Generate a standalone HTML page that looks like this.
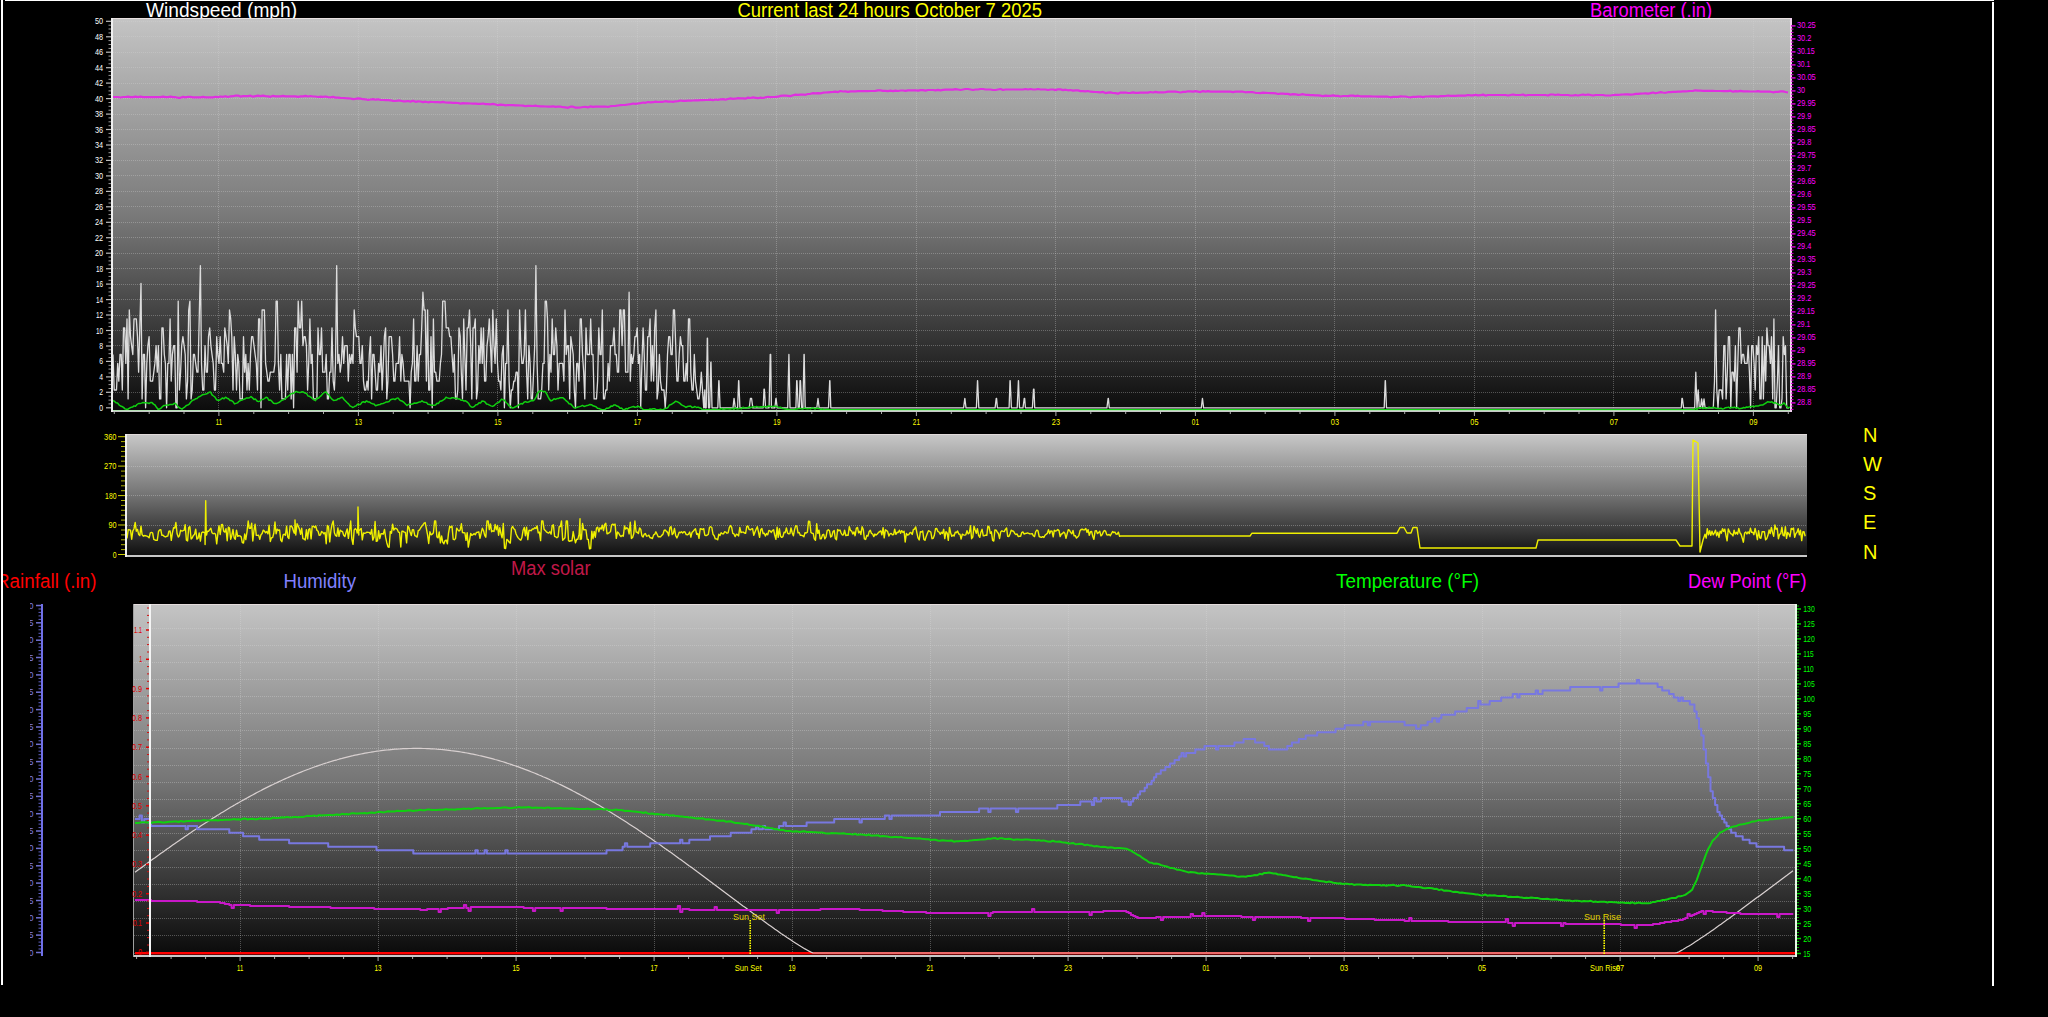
<!DOCTYPE html>
<html><head><meta charset="utf-8"><title>Weather graph</title>
<style>html,body{margin:0;padding:0;background:#000;overflow:hidden;width:2048px;height:1017px}svg{display:block}text{font-family:"Liberation Sans",sans-serif}</style>
</head><body><svg width="2048" height="1017" viewBox="0 0 2048 1017" font-family="Liberation Sans, sans-serif"><defs>
<linearGradient id="g1" x1="0" y1="0" x2="0" y2="1">
<stop offset="0" stop-color="#c4c4c4"/><stop offset="0.5" stop-color="#7a7a7a"/><stop offset="1" stop-color="#0c0c0c"/></linearGradient>
<linearGradient id="g2" x1="0" y1="0" x2="0" y2="1">
<stop offset="0" stop-color="#c8c8c8"/><stop offset="0.5" stop-color="#747474"/><stop offset="1" stop-color="#101010"/></linearGradient>
<linearGradient id="g3" x1="0" y1="0" x2="0" y2="1">
<stop offset="0" stop-color="#c4c4c4"/><stop offset="0.5" stop-color="#767676"/><stop offset="1" stop-color="#0a0a0a"/></linearGradient>
<clipPath id="cTop"><rect x="111" y="18" width="1680" height="392"/></clipPath>
<clipPath id="cDir"><rect x="125" y="434" width="1682" height="121"/></clipPath>
<clipPath id="cBot"><rect x="133" y="604" width="1663" height="351"/></clipPath>
<clipPath id="cHum"><rect x="30" y="590" width="20" height="380"/></clipPath>
<clipPath id="cRain"><rect x="3" y="560" width="200" height="40"/></clipPath>
</defs><rect x="1" y="0" width="2" height="985" fill="#fff"/>
<rect x="5" y="0" width="1989" height="1" fill="#fff"/>
<rect x="1992" y="2" width="2" height="984" fill="#fff"/>
<text x="146" y="16.8" fill="#ffffff" font-size="20" text-anchor="start" textLength="151" lengthAdjust="spacingAndGlyphs" >Windspeed (mph)</text>
<text x="737.5" y="16.8" fill="#ffff00" font-size="20" text-anchor="start" textLength="304.5" lengthAdjust="spacingAndGlyphs" >Current last 24 hours October 7 2025</text>
<text x="1590" y="16.8" fill="#ff00ff" font-size="20" text-anchor="start" textLength="122" lengthAdjust="spacingAndGlyphs" >Barometer (.in)</text>
<text x="96.5" y="588" fill="#ff0000" font-size="20" text-anchor="end" textLength="100.5" lengthAdjust="spacingAndGlyphs" clip-path="url(#cRain)">Rainfall (.in)</text>
<text x="283.5" y="587.7" fill="#8080ff" font-size="20" text-anchor="start" textLength="72.5" lengthAdjust="spacingAndGlyphs" >Humidity</text>
<text x="511" y="574.9" fill="#c01848" font-size="20" text-anchor="start" textLength="79.5" lengthAdjust="spacingAndGlyphs" >Max solar</text>
<text x="1336" y="588" fill="#00ff00" font-size="20" text-anchor="start" textLength="143" lengthAdjust="spacingAndGlyphs" >Temperature (°F)</text>
<text x="1688" y="587.5" fill="#ff00ff" font-size="20" text-anchor="start" textLength="118.5" lengthAdjust="spacingAndGlyphs" >Dew Point (°F)</text>
<rect x="111" y="18" width="1680" height="392" fill="url(#g1)"/>
<line x1="113" y1="392.5" x2="1790" y2="392.5" stroke="#d8d8d8" stroke-opacity="0.32" stroke-width="1" stroke-dasharray="1 1"/>
<line x1="113" y1="376.5" x2="1790" y2="376.5" stroke="#d8d8d8" stroke-opacity="0.32" stroke-width="1" stroke-dasharray="1 1"/>
<line x1="113" y1="361.5" x2="1790" y2="361.5" stroke="#d8d8d8" stroke-opacity="0.32" stroke-width="1" stroke-dasharray="1 1"/>
<line x1="113" y1="345.5" x2="1790" y2="345.5" stroke="#d8d8d8" stroke-opacity="0.32" stroke-width="1" stroke-dasharray="1 1"/>
<line x1="113" y1="330.5" x2="1790" y2="330.5" stroke="#d8d8d8" stroke-opacity="0.32" stroke-width="1" stroke-dasharray="1 1"/>
<line x1="113" y1="315.5" x2="1790" y2="315.5" stroke="#d8d8d8" stroke-opacity="0.32" stroke-width="1" stroke-dasharray="1 1"/>
<line x1="113" y1="299.5" x2="1790" y2="299.5" stroke="#d8d8d8" stroke-opacity="0.32" stroke-width="1" stroke-dasharray="1 1"/>
<line x1="113" y1="284.5" x2="1790" y2="284.5" stroke="#d8d8d8" stroke-opacity="0.32" stroke-width="1" stroke-dasharray="1 1"/>
<line x1="113" y1="268.5" x2="1790" y2="268.5" stroke="#d8d8d8" stroke-opacity="0.32" stroke-width="1" stroke-dasharray="1 1"/>
<line x1="113" y1="253.5" x2="1790" y2="253.5" stroke="#d8d8d8" stroke-opacity="0.32" stroke-width="1" stroke-dasharray="1 1"/>
<line x1="113" y1="237.5" x2="1790" y2="237.5" stroke="#d8d8d8" stroke-opacity="0.32" stroke-width="1" stroke-dasharray="1 1"/>
<line x1="113" y1="222.5" x2="1790" y2="222.5" stroke="#d8d8d8" stroke-opacity="0.32" stroke-width="1" stroke-dasharray="1 1"/>
<line x1="113" y1="206.5" x2="1790" y2="206.5" stroke="#d8d8d8" stroke-opacity="0.32" stroke-width="1" stroke-dasharray="1 1"/>
<line x1="113" y1="191.5" x2="1790" y2="191.5" stroke="#d8d8d8" stroke-opacity="0.32" stroke-width="1" stroke-dasharray="1 1"/>
<line x1="113" y1="175.5" x2="1790" y2="175.5" stroke="#d8d8d8" stroke-opacity="0.32" stroke-width="1" stroke-dasharray="1 1"/>
<line x1="113" y1="160.5" x2="1790" y2="160.5" stroke="#d8d8d8" stroke-opacity="0.32" stroke-width="1" stroke-dasharray="1 1"/>
<line x1="113" y1="144.5" x2="1790" y2="144.5" stroke="#d8d8d8" stroke-opacity="0.32" stroke-width="1" stroke-dasharray="1 1"/>
<line x1="113" y1="129.5" x2="1790" y2="129.5" stroke="#d8d8d8" stroke-opacity="0.32" stroke-width="1" stroke-dasharray="1 1"/>
<line x1="113" y1="114.5" x2="1790" y2="114.5" stroke="#d8d8d8" stroke-opacity="0.32" stroke-width="1" stroke-dasharray="1 1"/>
<line x1="113" y1="98.5" x2="1790" y2="98.5" stroke="#d8d8d8" stroke-opacity="0.32" stroke-width="1" stroke-dasharray="1 1"/>
<line x1="113" y1="83.5" x2="1790" y2="83.5" stroke="#d8d8d8" stroke-opacity="0.32" stroke-width="1" stroke-dasharray="1 1"/>
<line x1="113" y1="67.5" x2="1790" y2="67.5" stroke="#d8d8d8" stroke-opacity="0.32" stroke-width="1" stroke-dasharray="1 1"/>
<line x1="113" y1="52.5" x2="1790" y2="52.5" stroke="#d8d8d8" stroke-opacity="0.32" stroke-width="1" stroke-dasharray="1 1"/>
<line x1="113" y1="36.5" x2="1790" y2="36.5" stroke="#d8d8d8" stroke-opacity="0.32" stroke-width="1" stroke-dasharray="1 1"/>
<line x1="113" y1="21.5" x2="1790" y2="21.5" stroke="#d8d8d8" stroke-opacity="0.32" stroke-width="1" stroke-dasharray="1 1"/>
<line x1="218.5" y1="19" x2="218.5" y2="410" stroke="#d8d8d8" stroke-opacity="0.32" stroke-width="1" stroke-dasharray="1 1"/>
<text x="218.9" y="424.5" fill="#ffff00" font-size="8.3" text-anchor="middle" textLength="6.1" lengthAdjust="spacingAndGlyphs" >11</text>
<line x1="358.5" y1="19" x2="358.5" y2="410" stroke="#d8d8d8" stroke-opacity="0.32" stroke-width="1" stroke-dasharray="1 1"/>
<text x="358.4" y="424.5" fill="#ffff00" font-size="8.3" text-anchor="middle" textLength="7.1" lengthAdjust="spacingAndGlyphs" >13</text>
<line x1="497.5" y1="19" x2="497.5" y2="410" stroke="#d8d8d8" stroke-opacity="0.32" stroke-width="1" stroke-dasharray="1 1"/>
<text x="497.9" y="424.5" fill="#ffff00" font-size="8.3" text-anchor="middle" textLength="7.1" lengthAdjust="spacingAndGlyphs" >15</text>
<line x1="637.5" y1="19" x2="637.5" y2="410" stroke="#d8d8d8" stroke-opacity="0.32" stroke-width="1" stroke-dasharray="1 1"/>
<text x="637.4" y="424.5" fill="#ffff00" font-size="8.3" text-anchor="middle" textLength="7.1" lengthAdjust="spacingAndGlyphs" >17</text>
<line x1="776.5" y1="19" x2="776.5" y2="410" stroke="#d8d8d8" stroke-opacity="0.32" stroke-width="1" stroke-dasharray="1 1"/>
<text x="776.9" y="424.5" fill="#ffff00" font-size="8.3" text-anchor="middle" textLength="7.1" lengthAdjust="spacingAndGlyphs" >19</text>
<line x1="916.5" y1="19" x2="916.5" y2="410" stroke="#d8d8d8" stroke-opacity="0.32" stroke-width="1" stroke-dasharray="1 1"/>
<text x="916.4" y="424.5" fill="#ffff00" font-size="8.3" text-anchor="middle" textLength="7.1" lengthAdjust="spacingAndGlyphs" >21</text>
<line x1="1055.5" y1="19" x2="1055.5" y2="410" stroke="#d8d8d8" stroke-opacity="0.32" stroke-width="1" stroke-dasharray="1 1"/>
<text x="1055.9" y="424.5" fill="#ffff00" font-size="8.3" text-anchor="middle" textLength="8.1" lengthAdjust="spacingAndGlyphs" >23</text>
<line x1="1195.5" y1="19" x2="1195.5" y2="410" stroke="#d8d8d8" stroke-opacity="0.32" stroke-width="1" stroke-dasharray="1 1"/>
<text x="1195.4" y="424.5" fill="#ffff00" font-size="8.3" text-anchor="middle" textLength="7.1" lengthAdjust="spacingAndGlyphs" >01</text>
<line x1="1334.5" y1="19" x2="1334.5" y2="410" stroke="#d8d8d8" stroke-opacity="0.32" stroke-width="1" stroke-dasharray="1 1"/>
<text x="1334.9" y="424.5" fill="#ffff00" font-size="8.3" text-anchor="middle" textLength="8.1" lengthAdjust="spacingAndGlyphs" >03</text>
<line x1="1474.5" y1="19" x2="1474.5" y2="410" stroke="#d8d8d8" stroke-opacity="0.32" stroke-width="1" stroke-dasharray="1 1"/>
<text x="1474.4" y="424.5" fill="#ffff00" font-size="8.3" text-anchor="middle" textLength="8.1" lengthAdjust="spacingAndGlyphs" >05</text>
<line x1="1613.5" y1="19" x2="1613.5" y2="410" stroke="#d8d8d8" stroke-opacity="0.32" stroke-width="1" stroke-dasharray="1 1"/>
<text x="1613.9" y="424.5" fill="#ffff00" font-size="8.3" text-anchor="middle" textLength="8.1" lengthAdjust="spacingAndGlyphs" >07</text>
<line x1="1753.5" y1="19" x2="1753.5" y2="410" stroke="#d8d8d8" stroke-opacity="0.32" stroke-width="1" stroke-dasharray="1 1"/>
<text x="1753.4" y="424.5" fill="#ffff00" font-size="8.3" text-anchor="middle" textLength="8.1" lengthAdjust="spacingAndGlyphs" >09</text>
<line x1="114.3" y1="412" x2="114.3" y2="414" stroke="#aaaaaa" stroke-width="1"/>
<line x1="149.2" y1="412" x2="149.2" y2="414" stroke="#aaaaaa" stroke-width="1"/>
<line x1="184" y1="412" x2="184" y2="414" stroke="#aaaaaa" stroke-width="1"/>
<line x1="218.9" y1="412" x2="218.9" y2="416" stroke="#aaaaaa" stroke-width="1"/>
<line x1="253.8" y1="412" x2="253.8" y2="414" stroke="#aaaaaa" stroke-width="1"/>
<line x1="288.6" y1="412" x2="288.6" y2="414" stroke="#aaaaaa" stroke-width="1"/>
<line x1="323.5" y1="412" x2="323.5" y2="414" stroke="#aaaaaa" stroke-width="1"/>
<line x1="358.4" y1="412" x2="358.4" y2="416" stroke="#aaaaaa" stroke-width="1"/>
<line x1="393.3" y1="412" x2="393.3" y2="414" stroke="#aaaaaa" stroke-width="1"/>
<line x1="428.1" y1="412" x2="428.1" y2="414" stroke="#aaaaaa" stroke-width="1"/>
<line x1="463" y1="412" x2="463" y2="414" stroke="#aaaaaa" stroke-width="1"/>
<line x1="497.9" y1="412" x2="497.9" y2="416" stroke="#aaaaaa" stroke-width="1"/>
<line x1="532.8" y1="412" x2="532.8" y2="414" stroke="#aaaaaa" stroke-width="1"/>
<line x1="567.6" y1="412" x2="567.6" y2="414" stroke="#aaaaaa" stroke-width="1"/>
<line x1="602.5" y1="412" x2="602.5" y2="414" stroke="#aaaaaa" stroke-width="1"/>
<line x1="637.4" y1="412" x2="637.4" y2="416" stroke="#aaaaaa" stroke-width="1"/>
<line x1="672.3" y1="412" x2="672.3" y2="414" stroke="#aaaaaa" stroke-width="1"/>
<line x1="707.1" y1="412" x2="707.1" y2="414" stroke="#aaaaaa" stroke-width="1"/>
<line x1="742" y1="412" x2="742" y2="414" stroke="#aaaaaa" stroke-width="1"/>
<line x1="776.9" y1="412" x2="776.9" y2="416" stroke="#aaaaaa" stroke-width="1"/>
<line x1="811.8" y1="412" x2="811.8" y2="414" stroke="#aaaaaa" stroke-width="1"/>
<line x1="846.6" y1="412" x2="846.6" y2="414" stroke="#aaaaaa" stroke-width="1"/>
<line x1="881.5" y1="412" x2="881.5" y2="414" stroke="#aaaaaa" stroke-width="1"/>
<line x1="916.4" y1="412" x2="916.4" y2="416" stroke="#aaaaaa" stroke-width="1"/>
<line x1="951.3" y1="412" x2="951.3" y2="414" stroke="#aaaaaa" stroke-width="1"/>
<line x1="986.1" y1="412" x2="986.1" y2="414" stroke="#aaaaaa" stroke-width="1"/>
<line x1="1021" y1="412" x2="1021" y2="414" stroke="#aaaaaa" stroke-width="1"/>
<line x1="1055.9" y1="412" x2="1055.9" y2="416" stroke="#aaaaaa" stroke-width="1"/>
<line x1="1090.8" y1="412" x2="1090.8" y2="414" stroke="#aaaaaa" stroke-width="1"/>
<line x1="1125.7" y1="412" x2="1125.7" y2="414" stroke="#aaaaaa" stroke-width="1"/>
<line x1="1160.5" y1="412" x2="1160.5" y2="414" stroke="#aaaaaa" stroke-width="1"/>
<line x1="1195.4" y1="412" x2="1195.4" y2="416" stroke="#aaaaaa" stroke-width="1"/>
<line x1="1230.3" y1="412" x2="1230.3" y2="414" stroke="#aaaaaa" stroke-width="1"/>
<line x1="1265.2" y1="412" x2="1265.2" y2="414" stroke="#aaaaaa" stroke-width="1"/>
<line x1="1300" y1="412" x2="1300" y2="414" stroke="#aaaaaa" stroke-width="1"/>
<line x1="1334.9" y1="412" x2="1334.9" y2="416" stroke="#aaaaaa" stroke-width="1"/>
<line x1="1369.8" y1="412" x2="1369.8" y2="414" stroke="#aaaaaa" stroke-width="1"/>
<line x1="1404.7" y1="412" x2="1404.7" y2="414" stroke="#aaaaaa" stroke-width="1"/>
<line x1="1439.5" y1="412" x2="1439.5" y2="414" stroke="#aaaaaa" stroke-width="1"/>
<line x1="1474.4" y1="412" x2="1474.4" y2="416" stroke="#aaaaaa" stroke-width="1"/>
<line x1="1509.3" y1="412" x2="1509.3" y2="414" stroke="#aaaaaa" stroke-width="1"/>
<line x1="1544.2" y1="412" x2="1544.2" y2="414" stroke="#aaaaaa" stroke-width="1"/>
<line x1="1579" y1="412" x2="1579" y2="414" stroke="#aaaaaa" stroke-width="1"/>
<line x1="1613.9" y1="412" x2="1613.9" y2="416" stroke="#aaaaaa" stroke-width="1"/>
<line x1="1648.8" y1="412" x2="1648.8" y2="414" stroke="#aaaaaa" stroke-width="1"/>
<line x1="1683.7" y1="412" x2="1683.7" y2="414" stroke="#aaaaaa" stroke-width="1"/>
<line x1="1718.5" y1="412" x2="1718.5" y2="414" stroke="#aaaaaa" stroke-width="1"/>
<line x1="1753.4" y1="412" x2="1753.4" y2="416" stroke="#aaaaaa" stroke-width="1"/>
<line x1="1788.3" y1="412" x2="1788.3" y2="414" stroke="#aaaaaa" stroke-width="1"/>
<rect x="111" y="18" width="1680" height="1" fill="#e8e0e0"/>
<path d="M113 97 L115.5 97 L118 97 L120.5 97.5 L123 97 L125.5 97 L128 96.6 L130.5 97.1 L133 97.1 L135.5 96.6 L138 97.1 L140.5 96.6 L143 97.1 L145.5 97.1 L148 97.1 L150.5 97.1 L153 97.2 L155.5 97.2 L158 97.2 L160.5 97.2 L163 96.7 L165.5 97.2 L168 97.2 L170.5 96.7 L173 97.2 L175.5 97.2 L178 97.8 L180.5 97.8 L183 96.8 L185.5 97.3 L188 96.8 L190.5 96.8 L193 97.3 L195.5 97.3 L198 97.3 L200.5 97.3 L203 96.9 L205.5 97.4 L208 97.4 L210.5 97.4 L213 97.4 L215.5 96.8 L218 97.1 L220.5 96.5 L223 96.8 L225.5 96.2 L228 97 L230.5 96.3 L233 96.2 L235.5 95.6 L238 95.6 L240.5 96.6 L243 96.1 L245.5 96.2 L248 96.2 L250.5 95.7 L253 96.7 L255.5 96.2 L258 95.7 L260.5 96.2 L263 95.7 L265.5 96.2 L268 96.3 L270.5 96.8 L273 95.8 L275.5 96.3 L278 96.3 L280.5 96.3 L283 95.8 L285.5 96.3 L288 96.4 L290.5 96.4 L293 96.4 L295.5 96.4 L298 96.9 L300.5 96.4 L303 96.4 L305.5 95.9 L308 96.5 L310.5 96 L313 96.5 L315.5 96.5 L318 97 L320.5 96.7 L323 96.8 L325.5 96.5 L328 97.1 L330.5 97.3 L333 96.9 L335.5 97.6 L338 97.7 L340.5 97.9 L343 98 L345.5 98.2 L348 98.3 L350.5 98.5 L353 99.1 L355.5 98.8 L358 98.4 L360.5 98.6 L363 99.2 L365.5 99.3 L368 99.9 L370.5 99.5 L373 99.1 L375.5 99.7 L378 99.3 L380.5 99.9 L383 100 L385.5 100.1 L388 100.2 L390.5 100.3 L393 100.9 L395.5 101 L398 100.6 L400.5 100.7 L403 101.3 L405.5 101.4 L408 101 L410.5 101.6 L413 100.7 L415.5 101.8 L418 101.4 L420.5 101.5 L423 102.1 L425.5 101.7 L428 102.3 L430.5 101.9 L433 102 L435.5 102.1 L438 102.2 L440.5 102.3 L443 101.9 L445.5 102.5 L448 102.6 L450.5 102.7 L453 102.8 L455.5 102.9 L458 103 L460.5 103.6 L463 103.2 L465.5 103.3 L468 103.4 L470.5 103.5 L473 103.6 L475.5 103.7 L478 103.8 L480.5 103.9 L483 103.5 L485.5 104.1 L488 104.2 L490.5 104.3 L493 103.9 L495.5 104.5 L498 105.1 L500.5 104.7 L503 104.8 L505.5 105.4 L508 105 L510.5 105.1 L513 105.2 L515.5 105.3 L518 105.4 L520.5 105.5 L523 105.6 L525.5 106.2 L528 105.8 L530.5 105.9 L533 106 L535.5 105.6 L538 106.2 L540.5 106.3 L543 106.4 L545.5 106.5 L548 106.6 L550.5 106.7 L553 106.3 L555.5 106.9 L558 106.5 L560.5 106.6 L563 107.2 L565.5 107.3 L568 107.8 L570.5 106.7 L573 106.7 L575.5 107.6 L578 107.6 L580.5 107.5 L583 107 L585.5 106.9 L588 107.4 L590.5 106.3 L593 106.8 L595.5 106.7 L598 106.7 L600.5 106.6 L603 106.6 L605.5 106.5 L608 107 L610.5 106.2 L613 106 L615.5 105.8 L618 105.5 L620.5 105.2 L623 105 L625.5 104.8 L628 104.5 L630.5 104.2 L633 103.5 L635.5 103.8 L638 103.5 L640.5 103.2 L643 102.5 L645.5 102.8 L648 102 L650.5 102.3 L653 102.2 L655.5 101.6 L658 102 L660.5 101.9 L663 101.8 L665.5 101.2 L668 101.6 L670.5 101.5 L673 101.9 L675.5 101.3 L678 101.1 L680.5 100.5 L683 100.9 L685.5 100.8 L688 100.7 L690.5 100.6 L693 100.5 L695.5 100.4 L698 100.3 L700.5 100.2 L703 100.1 L705.5 100 L708 99.9 L710.5 99.7 L713 100.1 L715.5 99.5 L718 99.9 L720.5 99.3 L723 99.2 L725.5 99.6 L728 99 L730.5 98.4 L733 98.8 L735.5 98.7 L738 98.1 L740.5 98.4 L743 98.3 L745.5 98.7 L748 97.6 L750.5 98 L753 97.4 L755.5 97.8 L758 98.2 L760.5 97.6 L763 98 L765.5 97.4 L768 96.8 L770.5 97.2 L773 97 L775.5 96.9 L778 96.7 L780.5 95.9 L783 95.7 L785.5 95.5 L788 95.8 L790.5 96.1 L793 95.3 L795.5 94.6 L798 94.9 L800.5 94.7 L803 94.5 L805.5 94.8 L808 94 L810.5 93.8 L813 93.1 L815.5 93.4 L818 93.2 L820.5 93.4 L823 92.7 L825.5 92.5 L828 92.3 L830.5 92.1 L833 91.9 L835.5 91.6 L838 92.1 L840.5 91 L843 91.5 L845.5 91.4 L848 91.9 L850.5 91.4 L853 91.3 L855.5 91.3 L858 91.2 L860.5 91.2 L863 91.1 L865.5 91.1 L868 91.1 L870.5 91 L873 91 L875.5 90.9 L878 90.4 L880.5 90.3 L883 90.8 L885.5 90.8 L888 91.2 L890.5 90.7 L893 91.1 L895.5 90.6 L898 91 L900.5 90.5 L903 90.5 L905.5 90.9 L908 90.4 L910.5 90.3 L913 90.3 L915.5 90.3 L918 90.7 L920.5 90.2 L923 90.1 L925.5 90.6 L928 90 L930.5 90 L933 90 L935.5 90.4 L938 89.9 L940.5 90.3 L943 89.8 L945.5 89.7 L948 89.7 L950.5 89.7 L953 89.6 L955.5 89.1 L958 89.5 L960.5 90 L963 89.5 L965.5 89 L968 89 L970.5 89.5 L973 90 L975.5 89.5 L978 89.5 L980.5 89 L983 89 L985.5 89.5 L988 89.5 L990.5 89.5 L993 90 L995.5 90 L998 89.5 L1000.5 89 L1003 90 L1005.5 89.5 L1008 89.5 L1010.5 89.5 L1013 89.5 L1015.5 89.5 L1018 89.5 L1020.5 89.5 L1023 89.5 L1025.5 89 L1028 89.5 L1030.5 89 L1033 89.5 L1035.5 89.5 L1038 89 L1040.5 89.5 L1043 89.5 L1045.5 89.5 L1048 90 L1050.5 89.5 L1053 89.5 L1055.5 90.1 L1058 89.3 L1060.5 89.4 L1063 90.1 L1065.5 89.7 L1068 90.3 L1070.5 90 L1073 90.6 L1075.5 90.3 L1078 90.4 L1080.5 91.1 L1083 91.2 L1085.5 91.4 L1088 91 L1090.5 91.7 L1093 91.8 L1095.5 92 L1098 92.1 L1100.5 92.3 L1103 91.9 L1105.5 93.1 L1108 92.7 L1110.5 92.4 L1113 93 L1115.5 93.2 L1118 93.7 L1120.5 92.6 L1123 92.6 L1125.5 92.5 L1128 93 L1130.5 92.9 L1133 92.4 L1135.5 92.8 L1138 92.8 L1140.5 92.7 L1143 92.7 L1145.5 92.6 L1148 92.6 L1150.5 92 L1153 92.5 L1155.5 91.9 L1158 92.4 L1160.5 92.3 L1163 92.3 L1165.5 92.2 L1168 91.7 L1170.5 91.6 L1173 91.6 L1175.5 91.6 L1178 92 L1180.5 92.5 L1183 91.9 L1185.5 91.9 L1188 91.3 L1190.5 91.3 L1193 91.7 L1195.5 91.2 L1198 91.6 L1200.5 92.1 L1203 91.1 L1205.5 91.6 L1208 91.1 L1210.5 91.6 L1213 91.6 L1215.5 91.6 L1218 91.6 L1220.5 91.6 L1223 91.6 L1225.5 91.6 L1228 91.6 L1230.5 91.6 L1233 92.1 L1235.5 91.6 L1238 91.6 L1240.5 91.6 L1243 91.7 L1245.5 92.3 L1248 92 L1250.5 92.1 L1253 92.2 L1255.5 92.8 L1258 93 L1260.5 93.1 L1263 92.7 L1265.5 92.8 L1268 93 L1270.5 93.1 L1273 93.2 L1275.5 93.3 L1278 94 L1280.5 93.6 L1283 93.7 L1285.5 93.8 L1288 93.9 L1290.5 94.6 L1293 94.2 L1295.5 94.3 L1298 94.9 L1300.5 94.6 L1303 94.2 L1305.5 94.8 L1308 94.9 L1310.5 95.1 L1313 95.2 L1315.5 95.3 L1318 95.4 L1320.5 95.6 L1323 96.2 L1325.5 95.7 L1328 95.8 L1330.5 95.8 L1333 95.4 L1335.5 95.9 L1338 95.9 L1340.5 96.5 L1343 96 L1345.5 96 L1348 96.1 L1350.5 95.6 L1353 95.7 L1355.5 96.2 L1358 95.7 L1360.5 96.3 L1363 96.3 L1365.5 96.4 L1368 96.4 L1370.5 96.4 L1373 96.5 L1375.5 96.5 L1378 96.6 L1380.5 96.6 L1383 96.6 L1385.5 96.7 L1388 96.7 L1390.5 97.3 L1393 96.8 L1395.5 96.8 L1398 96.9 L1400.5 96.4 L1403 96.5 L1405.5 96.5 L1408 97 L1410.5 97.4 L1413 96.8 L1415.5 96.8 L1418 96.7 L1420.5 96.7 L1423 97.1 L1425.5 96.5 L1428 96.5 L1430.5 96.4 L1433 96.3 L1435.5 96.3 L1438 96.7 L1440.5 96.2 L1443 96.1 L1445.5 96 L1448 95.5 L1450.5 95.9 L1453 95.9 L1455.5 95.8 L1458 95.7 L1460.5 95.7 L1463 95.6 L1465.5 95.6 L1468 95 L1470.5 95.4 L1473 95.4 L1475.5 94.8 L1478 95.3 L1480.5 95.2 L1483 94.6 L1485.5 95.6 L1488 95 L1490.5 95 L1493 95 L1495.5 95 L1498 95 L1500.5 95 L1503 95 L1505.5 95 L1508 95.5 L1510.5 95 L1513 94.5 L1515.5 95 L1518 95 L1520.5 95 L1523 94.5 L1525.5 95.5 L1528 95 L1530.5 95 L1533 95 L1535.5 95 L1538 95 L1540.5 95 L1543 95 L1545.5 95 L1548 95.5 L1550.5 94.5 L1553 94.5 L1555.5 95 L1558 94.5 L1560.5 95 L1563 95 L1565.5 95 L1568 95 L1570.5 95.5 L1573 95.5 L1575.5 95 L1578 95.5 L1580.5 95 L1583 94.5 L1585.5 95 L1588 94.5 L1590.5 95 L1593 95.5 L1595.5 95 L1598 95 L1600.5 95 L1603 95 L1605.5 95.5 L1608 95.5 L1610.5 95.5 L1613 95 L1615.5 94.9 L1618 94.8 L1620.5 94.7 L1623 94.5 L1625.5 94.4 L1628 94.3 L1630.5 94.6 L1633 94.5 L1635.5 93.9 L1638 93.8 L1640.5 93.6 L1643 93.5 L1645.5 93.4 L1648 93.7 L1650.5 93.1 L1653 92.5 L1655.5 93.3 L1658 92.7 L1660.5 92.1 L1663 92.5 L1665.5 92.8 L1668 92.2 L1670.5 92.1 L1673 91.9 L1675.5 91.8 L1678 91.7 L1680.5 91.6 L1683 91.4 L1685.5 91.3 L1688 91.2 L1690.5 91 L1693 90.9 L1695.5 90.3 L1698 90.7 L1700.5 90.7 L1703 90.8 L1705.5 90.8 L1708 90.9 L1710.5 90.9 L1713 90.9 L1715.5 91 L1718 91 L1720.5 91 L1723 91.1 L1725.5 91.1 L1728 91.1 L1730.5 90.7 L1733 91.7 L1735.5 91.2 L1738 91.3 L1740.5 90.8 L1743 91.3 L1745.5 91.4 L1748 91.4 L1750.5 91.5 L1753 91.5 L1755.5 91.5 L1758 91.1 L1760.5 91.6 L1763 91.6 L1765.5 91.7 L1768 91.7 L1770.5 91.7 L1773 92.3 L1775.5 91.8 L1778 91.8 L1780.5 91.4 L1783 91.4 L1785.5 92 L1788 92.5" fill="none" stroke="#e030e0" stroke-width="2.2" stroke-linejoin="round" clip-path="url(#cTop)"/>
<path d="M113 354.5 L114.2 390 L115.3 390 L116.5 390 L117.7 363.4 L118.8 381.1 L120 354.5 L121.2 354.5 L122.3 390 L123.5 327.8 L124.7 327.8 L125.8 363.4 L127 318.9 L128.1 398.9 L129.3 310 L130.5 336.7 L131.6 345.6 L132.8 354.5 L134 318.9 L135.1 318.9 L136.3 318.9 L137.5 336.7 L138.6 372.2 L139.8 327.8 L141 283.3 L142.1 398.9 L143.3 354.5 L144.5 354.5 L145.6 407.8 L146.8 363.4 L147.9 345.6 L149.1 336.7 L150.3 381.1 L151.4 381.1 L152.6 381.1 L153.8 372.2 L154.9 363.4 L156.1 345.6 L157.3 372.2 L158.4 345.6 L159.6 398.9 L160.8 398.9 L161.9 327.8 L163.1 327.8 L164.3 354.5 L165.4 363.4 L166.6 407.8 L167.8 363.4 L168.9 363.4 L170.1 318.9 L171.2 381.1 L172.4 354.5 L173.6 345.6 L174.7 345.6 L175.9 407.8 L177.1 407.8 L178.2 301.1 L179.4 390 L180.6 372.2 L181.7 345.6 L182.9 336.7 L184.1 345.6 L185.2 354.5 L186.4 398.9 L187.6 381.1 L188.7 310 L189.9 301.1 L191.1 398.9 L192.2 390 L193.4 354.5 L194.5 354.5 L195.7 363.4 L196.9 372.2 L198 372.2 L199.2 318.9 L200.4 265.6 L201.5 363.4 L202.7 390 L203.9 390 L205 345.6 L206.2 372.2 L207.4 372.2 L208.5 336.7 L209.7 327.8 L210.9 345.6 L212 354.5 L213.2 363.4 L214.4 390 L215.5 390 L216.7 336.7 L217.8 354.5 L219 363.4 L220.2 336.7 L221.3 363.4 L222.5 363.4 L223.7 372.2 L224.8 327.8 L226 336.7 L227.2 345.6 L228.3 363.4 L229.5 310 L230.7 318.9 L231.8 336.7 L233 390 L234.2 336.7 L235.3 354.5 L236.5 390 L237.7 354.5 L238.8 363.4 L240 398.9 L241.1 398.9 L242.3 398.9 L243.5 336.7 L244.6 372.2 L245.8 354.5 L247 390 L248.1 363.4 L249.3 390 L250.5 354.5 L251.6 336.7 L252.8 336.7 L254 345.6 L255.1 354.5 L256.3 363.4 L257.5 390 L258.6 318.9 L259.8 318.9 L261 407.8 L262.1 310 L263.3 310 L264.4 310 L265.6 363.4 L266.8 372.2 L267.9 381.1 L269.1 381.1 L270.3 372.2 L271.4 372.2 L272.6 372.2 L273.8 372.2 L274.9 363.4 L276.1 301.1 L277.3 301.1 L278.4 363.4 L279.6 390 L280.8 354.5 L281.9 398.9 L283.1 398.9 L284.3 398.9 L285.4 398.9 L286.6 354.5 L287.7 390 L288.9 354.5 L290.1 354.5 L291.2 398.9 L292.4 354.5 L293.6 407.8 L294.7 327.8 L295.9 327.8 L297.1 372.2 L298.2 301.1 L299.4 327.8 L300.6 327.8 L301.7 301.1 L302.9 345.6 L304.1 336.7 L305.2 336.7 L306.4 345.6 L307.6 390 L308.7 363.4 L309.9 318.9 L311.1 363.4 L312.2 354.5 L313.4 398.9 L314.5 398.9 L315.7 398.9 L316.9 398.9 L318 327.8 L319.2 354.5 L320.4 354.5 L321.5 327.8 L322.7 372.2 L323.9 372.2 L325 372.2 L326.2 354.5 L327.4 398.9 L328.5 398.9 L329.7 372.2 L330.9 372.2 L332 327.8 L333.2 381.1 L334.4 390 L335.5 363.4 L336.7 265.6 L337.8 363.4 L339 354.5 L340.2 372.2 L341.3 363.4 L342.5 336.7 L343.7 363.4 L344.8 345.6 L346 345.6 L347.2 345.6 L348.3 381.1 L349.5 354.5 L350.7 363.4 L351.8 354.5 L353 363.4 L354.2 310 L355.3 327.8 L356.5 336.7 L357.7 336.7 L358.8 336.7 L360 363.4 L361.1 363.4 L362.3 345.6 L363.5 381.1 L364.6 390 L365.8 390 L367 381.1 L368.1 390 L369.3 354.5 L370.5 336.7 L371.6 398.9 L372.8 354.5 L374 354.5 L375.1 372.2 L376.3 390 L377.5 390 L378.6 363.4 L379.8 372.2 L381 345.6 L382.1 390 L383.3 363.4 L384.4 336.7 L385.6 327.8 L386.8 398.9 L387.9 381.1 L389.1 336.7 L390.3 336.7 L391.4 336.7 L392.6 354.5 L393.8 381.1 L394.9 381.1 L396.1 363.4 L397.3 363.4 L398.4 363.4 L399.6 336.7 L400.8 381.1 L401.9 354.5 L403.1 363.4 L404.3 381.1 L405.4 381.1 L406.6 381.1 L407.7 381.1 L408.9 381.1 L410.1 407.8 L411.2 372.2 L412.4 363.4 L413.6 318.9 L414.7 381.1 L415.9 381.1 L417.1 345.6 L418.2 381.1 L419.4 354.5 L420.6 354.5 L421.7 327.8 L422.9 292.2 L424.1 310 L425.2 310 L426.4 381.1 L427.6 310 L428.7 390 L429.9 390 L431 336.7 L432.2 407.8 L433.4 318.9 L434.5 372.2 L435.7 372.2 L436.9 381.1 L438 381.1 L439.2 381.1 L440.4 363.4 L441.5 354.5 L442.7 301.1 L443.9 301.1 L445 301.1 L446.2 327.8 L447.4 327.8 L448.5 327.8 L449.7 336.7 L450.9 336.7 L452 354.5 L453.2 372.2 L454.3 354.5 L455.5 398.9 L456.7 398.9 L457.8 390 L459 327.8 L460.2 336.7 L461.3 372.2 L462.5 398.9 L463.7 318.9 L464.8 354.5 L466 390 L467.2 327.8 L468.3 327.8 L469.5 310 L470.7 345.6 L471.8 398.9 L473 327.8 L474.2 327.8 L475.3 318.9 L476.5 398.9 L477.6 390 L478.8 345.6 L480 363.4 L481.1 327.8 L482.3 363.4 L483.5 327.8 L484.6 381.1 L485.8 381.1 L487 345.6 L488.1 336.7 L489.3 318.9 L490.5 345.6 L491.6 372.2 L492.8 310 L494 345.6 L495.1 363.4 L496.3 318.9 L497.5 363.4 L498.6 381.1 L499.8 381.1 L500.9 390 L502.1 354.5 L503.3 345.6 L504.4 407.8 L505.6 363.4 L506.8 363.4 L507.9 310 L509.1 381.1 L510.3 407.8 L511.4 390 L512.6 390 L513.8 381.1 L514.9 381.1 L516.1 372.2 L517.3 372.2 L518.4 407.8 L519.6 310 L520.8 345.6 L521.9 363.4 L523.1 363.4 L524.2 354.5 L525.4 310 L526.6 372.2 L527.7 398.9 L528.9 345.6 L530.1 363.4 L531.2 398.9 L532.4 398.9 L533.6 372.2 L534.7 345.6 L535.9 265.6 L537.1 363.4 L538.2 398.9 L539.4 398.9 L540.6 398.9 L541.7 390 L542.9 363.4 L544.1 363.4 L545.2 301.1 L546.4 301.1 L547.5 318.9 L548.7 390 L549.9 354.5 L551 372.2 L552.2 318.9 L553.4 354.5 L554.5 354.5 L555.7 327.8 L556.9 345.6 L558 390 L559.2 363.4 L560.4 363.4 L561.5 363.4 L562.7 363.4 L563.9 381.1 L565 310 L566.2 354.5 L567.4 345.6 L568.5 345.6 L569.7 398.9 L570.8 336.7 L572 345.6 L573.2 354.5 L574.3 390 L575.5 407.8 L576.7 363.4 L577.8 363.4 L579 381.1 L580.2 318.9 L581.3 318.9 L582.5 354.5 L583.7 372.2 L584.8 398.9 L586 327.8 L587.2 354.5 L588.3 354.5 L589.5 354.5 L590.7 318.9 L591.8 354.5 L593 354.5 L594.1 398.9 L595.3 398.9 L596.5 398.9 L597.6 381.1 L598.8 327.8 L600 354.5 L601.1 354.5 L602.3 310 L603.5 398.9 L604.6 398.9 L605.8 390 L607 390 L608.1 363.4 L609.3 381.1 L610.5 345.6 L611.6 345.6 L612.8 345.6 L614 327.8 L615.1 354.5 L616.3 354.5 L617.4 372.2 L618.6 372.2 L619.8 310 L620.9 310 L622.1 345.6 L623.3 310 L624.4 310 L625.6 372.2 L626.8 372.2 L627.9 372.2 L629.1 292.2 L630.3 381.1 L631.4 354.5 L632.6 363.4 L633.8 354.5 L634.9 336.7 L636.1 336.7 L637.2 327.8 L638.4 363.4 L639.6 354.5 L640.7 407.8 L641.9 363.4 L643.1 327.8 L644.2 354.5 L645.4 390 L646.6 390 L647.7 336.7 L648.9 336.7 L650.1 318.9 L651.2 381.1 L652.4 345.6 L653.6 381.1 L654.7 327.8 L655.9 310 L657.1 398.9 L658.2 390 L659.4 354.5 L660.5 381.1 L661.7 390 L662.9 390 L664 390 L665.2 407.8 L666.4 390 L667.5 354.5 L668.7 336.7 L669.9 336.7 L671 354.5 L672.2 354.5 L673.4 310 L674.5 310 L675.7 345.6 L676.9 381.1 L678 381.1 L679.2 354.5 L680.4 336.7 L681.5 345.6 L682.7 345.6 L683.8 381.1 L685 381.1 L686.2 363.4 L687.3 381.1 L688.5 318.9 L689.7 318.9 L690.8 372.2 L692 390 L693.2 390 L694.3 354.5 L695.5 381.1 L696.7 390 L697.8 398.9 L699 398.9 L700.2 390 L701.3 372.2 L702.5 390 L703.7 407.8 L704.8 390 L705 407.8 L706.2 407.8 L707.3 338.2 L707.5 338.2 L708.5 407.8 L709.7 407.8 L710.8 362.2 L711 362.2 L712 407.8 L713.2 407.8 L714.3 407.8 L715.5 407.8 L716.6 407.8 L717.8 407.8 L718.8 380.7 L719 380.7 L720.1 407.8 L721.3 407.8 L722.5 407.8 L723.6 407.8 L724.8 407.8 L726 407.8 L727.1 407.8 L728.3 407.8 L729.5 407.8 L730.6 407.8 L731.8 407.8 L733 407.8 L734 398.5 L734.1 398.5 L735.3 407.8 L736.5 407.8 L737.6 407.8 L738.6 380.7 L738.8 380.7 L739.9 407.8 L741.1 407.8 L742.3 407.8 L743.4 407.8 L744.6 407.8 L745.8 407.8 L746.9 407.8 L748.1 407.8 L749.3 407.8 L750.4 398.5 L751 398.5 L751.6 398.5 L752.8 407.8 L753.9 407.8 L755.1 407.8 L756.3 407.8 L757.4 407.8 L758.6 407.8 L759.8 407.8 L760.9 407.8 L762.1 407.8 L763.2 407.8 L764 389.2 L764.4 389.2 L765.6 407.8 L766.7 407.8 L767.9 407.8 L769.1 407.8 L770.2 354.5 L770.7 354.5 L771.4 407.8 L772.6 407.8 L773.7 407.8 L774.9 407.8 L775.9 398.5 L776.1 398.5 L777.2 407.8 L778.4 407.8 L779.6 407.8 L780.7 407.8 L781.9 407.8 L783.1 407.8 L784.2 407.8 L785.4 407.8 L786.5 407.8 L787.7 407.8 L788.9 354.5 L788.9 354.5 L790 407.8 L791.2 407.8 L792.4 407.8 L793.5 407.8 L794.7 407.8 L795.9 407.8 L796.7 380.7 L797 380.7 L798.2 407.8 L799.4 407.8 L800 380.7 L800.5 380.7 L801.7 407.8 L802.9 407.8 L804 354.5 L804.2 354.5 L805.2 407.8 L806.4 407.8 L807.5 407.8 L808.7 407.8 L809.8 407.8 L811 407.8 L812.2 407.8 L813.3 407.8 L814.5 407.8 L815.7 407.8 L816.8 407.8 L818 398.5 L818 398.5 L819.2 407.8 L820.3 407.8 L821.5 407.8 L822.7 407.8 L823.8 407.8 L825 407.8 L826.2 407.8 L827.3 407.8 L828.5 407.8 L829.7 380.7 L829.9 380.7 L830.8 407.8 L832 407.8 L833.1 407.8 L834.3 407.8 L835.5 407.8 L836.6 407.8 L837.8 407.8 L839 407.8 L840.1 407.8 L841.3 407.8 L842.5 407.8 L843.6 407.8 L844.8 407.8 L846 407.8 L847.1 407.8 L848.3 407.8 L849.5 407.8 L850.6 407.8 L851.8 407.8 L853 407.8 L854.1 407.8 L855.3 407.8 L856.4 407.8 L857.6 407.8 L858.8 407.8 L859.9 407.8 L861.1 407.8 L862.3 407.8 L863.4 407.8 L864.6 407.8 L865.8 407.8 L866.9 407.8 L868.1 407.8 L869.3 407.8 L870.4 407.8 L871.6 407.8 L872.8 407.8 L873.9 407.8 L875.1 407.8 L876.3 407.8 L877.4 407.8 L878.6 407.8 L879.7 407.8 L880.9 407.8 L882.1 407.8 L883.2 407.8 L884.4 407.8 L885.6 407.8 L886.7 407.8 L887.9 407.8 L889.1 407.8 L890.2 407.8 L891.4 407.8 L892.6 407.8 L893.7 407.8 L894.9 407.8 L896.1 407.8 L897.2 407.8 L898.4 407.8 L899.6 407.8 L900.7 407.8 L901.9 407.8 L903 407.8 L904.2 407.8 L905.4 407.8 L906.5 407.8 L907.7 407.8 L908.9 407.8 L910 407.8 L911.2 407.8 L912.4 407.8 L913.5 407.8 L914.7 407.8 L915.9 407.8 L917 407.8 L918.2 407.8 L919.4 407.8 L920.5 407.8 L921.7 407.8 L922.9 407.8 L924 407.8 L925.2 407.8 L926.3 407.8 L927.5 407.8 L928.7 407.8 L929.8 407.8 L931 407.8 L932.2 407.8 L933.3 407.8 L934.5 407.8 L935.7 407.8 L936.8 407.8 L938 407.8 L939.2 407.8 L940.3 407.8 L941.5 407.8 L942.7 407.8 L943.8 407.8 L945 407.8 L946.2 407.8 L947.3 407.8 L948.5 407.8 L949.6 407.8 L950.8 407.8 L952 407.8 L953.1 407.8 L954.3 407.8 L955.5 407.8 L956.6 407.8 L957.8 407.8 L959 407.8 L960.1 407.8 L961.3 407.8 L962.5 407.8 L963.6 407.8 L964.8 398.5 L964.9 398.5 L966 407.8 L967.1 407.8 L968.3 407.8 L969.5 407.8 L970.6 407.8 L971.8 407.8 L972.9 407.8 L974.1 407.8 L975.3 407.8 L976.4 407.8 L977.5 380.7 L977.6 380.7 L978.8 407.8 L979.9 407.8 L981.1 407.8 L982.3 407.8 L983.4 407.8 L984.6 407.8 L985.8 407.8 L986.9 407.8 L988.1 407.8 L989.3 407.8 L990.4 407.8 L991.6 407.8 L992.8 407.8 L993.9 407.8 L995.1 407.8 L996.2 398.5 L996.6 398.5 L997.4 407.8 L998.6 407.8 L999.7 407.8 L1000.9 407.8 L1002.1 407.8 L1003.2 407.8 L1004.4 407.8 L1005.6 407.8 L1006.7 407.8 L1007.9 407.8 L1009.1 407.8 L1010 380.7 L1010.2 380.7 L1011.4 407.8 L1012.6 407.8 L1013.7 407.8 L1014.9 407.8 L1016.1 407.8 L1017.2 407.8 L1018.4 380.7 L1018.5 380.7 L1019.5 407.8 L1020.7 407.8 L1021.9 407.8 L1023 407.8 L1024.2 398.5 L1024.7 398.5 L1025.4 407.8 L1026.5 407.8 L1027.7 407.8 L1028.9 407.8 L1030 407.8 L1031.2 407.8 L1032.4 407.8 L1033.5 389.2 L1034 389.2 L1034.7 407.8 L1035.9 407.8 L1037 407.8 L1038.2 407.8 L1039.4 407.8 L1040.5 407.8 L1041.7 407.8 L1042.8 407.8 L1044 407.8 L1045.2 407.8 L1046.3 407.8 L1047.5 407.8 L1048.7 407.8 L1049.8 407.8 L1051 407.8 L1052.2 407.8 L1053.3 407.8 L1054.5 407.8 L1055.7 407.8 L1056.8 407.8 L1058 407.8 L1059.2 407.8 L1060.3 407.8 L1061.5 407.8 L1062.7 407.8 L1063.8 407.8 L1065 407.8 L1066.1 407.8 L1067.3 407.8 L1068.5 407.8 L1069.6 407.8 L1070.8 407.8 L1072 407.8 L1073.1 407.8 L1074.3 407.8 L1075.5 407.8 L1076.6 407.8 L1077.8 407.8 L1079 407.8 L1080.1 407.8 L1081.3 407.8 L1082.5 407.8 L1083.6 407.8 L1084.8 407.8 L1086 407.8 L1087.1 407.8 L1088.3 407.8 L1089.4 407.8 L1090.6 407.8 L1091.8 407.8 L1092.9 407.8 L1094.1 407.8 L1095.3 407.8 L1096.4 407.8 L1097.6 407.8 L1098.8 407.8 L1099.9 407.8 L1101.1 407.8 L1102.3 407.8 L1103.4 407.8 L1104.6 407.8 L1105.8 407.8 L1106.9 407.8 L1108.1 398.5 L1108.4 398.5 L1109.3 407.8 L1110.4 407.8 L1111.6 407.8 L1112.7 407.8 L1113.9 407.8 L1115.1 407.8 L1116.2 407.8 L1117.4 407.8 L1118.6 407.8 L1119.7 407.8 L1120.9 407.8 L1122.1 407.8 L1123.2 407.8 L1124.4 407.8 L1125.6 407.8 L1126.7 407.8 L1127.9 407.8 L1129.1 407.8 L1130.2 407.8 L1131.4 407.8 L1132.6 407.8 L1133.7 407.8 L1134.9 407.8 L1136 407.8 L1137.2 407.8 L1138.4 407.8 L1139.5 407.8 L1140.7 407.8 L1141.9 407.8 L1143 407.8 L1144.2 407.8 L1145.4 407.8 L1146.5 407.8 L1147.7 407.8 L1148.9 407.8 L1150 407.8 L1151.2 407.8 L1152.4 407.8 L1153.5 407.8 L1154.7 407.8 L1155.9 407.8 L1157 407.8 L1158.2 407.8 L1159.3 407.8 L1160.5 407.8 L1161.7 407.8 L1162.8 407.8 L1164 407.8 L1165.2 407.8 L1166.3 407.8 L1167.5 407.8 L1168.7 407.8 L1169.8 407.8 L1171 407.8 L1172.2 407.8 L1173.3 407.8 L1174.5 407.8 L1175.7 407.8 L1176.8 407.8 L1178 407.8 L1179.2 407.8 L1180.3 407.8 L1181.5 407.8 L1182.6 407.8 L1183.8 407.8 L1185 407.8 L1186.1 407.8 L1187.3 407.8 L1188.5 407.8 L1189.6 407.8 L1190.8 407.8 L1192 407.8 L1193.1 407.8 L1194.3 407.8 L1195.5 407.8 L1196.6 407.8 L1197.8 407.8 L1199 407.8 L1200.1 407.8 L1201.3 407.8 L1202.4 398.5 L1202.5 398.5 L1203.6 407.8 L1204.8 407.8 L1205.9 407.8 L1207.1 407.8 L1208.3 407.8 L1209.4 407.8 L1210.6 407.8 L1211.8 407.8 L1212.9 407.8 L1214.1 407.8 L1215.3 407.8 L1216.4 407.8 L1217.6 407.8 L1218.8 407.8 L1219.9 407.8 L1221.1 407.8 L1222.3 407.8 L1223.4 407.8 L1224.6 407.8 L1225.8 407.8 L1226.9 407.8 L1228.1 407.8 L1229.2 407.8 L1230.4 407.8 L1231.6 407.8 L1232.7 407.8 L1233.9 407.8 L1235.1 407.8 L1236.2 407.8 L1237.4 407.8 L1238.6 407.8 L1239.7 407.8 L1240.9 407.8 L1242.1 407.8 L1243.2 407.8 L1244.4 407.8 L1245.6 407.8 L1246.7 407.8 L1247.9 407.8 L1249.1 407.8 L1250.2 407.8 L1251.4 407.8 L1252.5 407.8 L1253.7 407.8 L1254.9 407.8 L1256 407.8 L1257.2 407.8 L1258.4 407.8 L1259.5 407.8 L1260.7 407.8 L1261.9 407.8 L1263 407.8 L1264.2 407.8 L1265.4 407.8 L1266.5 407.8 L1267.7 407.8 L1268.9 407.8 L1270 407.8 L1271.2 407.8 L1272.4 407.8 L1273.5 407.8 L1274.7 407.8 L1275.8 407.8 L1277 407.8 L1278.2 407.8 L1279.3 407.8 L1280.5 407.8 L1281.7 407.8 L1282.8 407.8 L1284 407.8 L1285.2 407.8 L1286.3 407.8 L1287.5 407.8 L1288.7 407.8 L1289.8 407.8 L1291 407.8 L1292.2 407.8 L1293.3 407.8 L1294.5 407.8 L1295.7 407.8 L1296.8 407.8 L1298 407.8 L1299.1 407.8 L1300.3 407.8 L1301.5 407.8 L1302.6 407.8 L1303.8 407.8 L1305 407.8 L1306.1 407.8 L1307.3 407.8 L1308.5 407.8 L1309.6 407.8 L1310.8 407.8 L1312 407.8 L1313.1 407.8 L1314.3 407.8 L1315.5 407.8 L1316.6 407.8 L1317.8 407.8 L1319 407.8 L1320.1 407.8 L1321.3 407.8 L1322.4 407.8 L1323.6 407.8 L1324.8 407.8 L1325.9 407.8 L1327.1 407.8 L1328.3 407.8 L1329.4 407.8 L1330.6 407.8 L1331.8 407.8 L1332.9 407.8 L1334.1 407.8 L1335.3 407.8 L1336.4 407.8 L1337.6 407.8 L1338.8 407.8 L1339.9 407.8 L1341.1 407.8 L1342.3 407.8 L1343.4 407.8 L1344.6 407.8 L1345.7 407.8 L1346.9 407.8 L1348.1 407.8 L1349.2 407.8 L1350.4 407.8 L1351.6 407.8 L1352.7 407.8 L1353.9 407.8 L1355.1 407.8 L1356.2 407.8 L1357.4 407.8 L1358.6 407.8 L1359.7 407.8 L1360.9 407.8 L1362.1 407.8 L1363.2 407.8 L1364.4 407.8 L1365.6 407.8 L1366.7 407.8 L1367.9 407.8 L1369 407.8 L1370.2 407.8 L1371.4 407.8 L1372.5 407.8 L1373.7 407.8 L1374.9 407.8 L1376 407.8 L1377.2 407.8 L1378.4 407.8 L1379.5 407.8 L1380.7 407.8 L1381.9 407.8 L1383 407.8 L1384.2 407.8 L1385.2 380.7 L1385.4 380.7 L1386.5 407.8 L1387.7 407.8 L1388.9 407.8 L1390 407.8 L1391.2 407.8 L1392.3 407.8 L1393.5 407.8 L1394.7 407.8 L1395.8 407.8 L1397 407.8 L1398.2 407.8 L1399.3 407.8 L1400.5 407.8 L1401.7 407.8 L1402.8 407.8 L1404 407.8 L1405.2 407.8 L1406.3 407.8 L1407.5 407.8 L1408.7 407.8 L1409.8 407.8 L1411 407.8 L1412.2 407.8 L1413.3 407.8 L1414.5 407.8 L1415.6 407.8 L1416.8 407.8 L1418 407.8 L1419.1 407.8 L1420.3 407.8 L1421.5 407.8 L1422.6 407.8 L1423.8 407.8 L1425 407.8 L1426.1 407.8 L1427.3 407.8 L1428.5 407.8 L1429.6 407.8 L1430.8 407.8 L1432 407.8 L1433.1 407.8 L1434.3 407.8 L1435.5 407.8 L1436.6 407.8 L1437.8 407.8 L1438.9 407.8 L1440.1 407.8 L1441.3 407.8 L1442.4 407.8 L1443.6 407.8 L1444.8 407.8 L1445.9 407.8 L1447.1 407.8 L1448.3 407.8 L1449.4 407.8 L1450.6 407.8 L1451.8 407.8 L1452.9 407.8 L1454.1 407.8 L1455.3 407.8 L1456.4 407.8 L1457.6 407.8 L1458.8 407.8 L1459.9 407.8 L1461.1 407.8 L1462.2 407.8 L1463.4 407.8 L1464.6 407.8 L1465.7 407.8 L1466.9 407.8 L1468.1 407.8 L1469.2 407.8 L1470.4 407.8 L1471.6 407.8 L1472.7 407.8 L1473.9 407.8 L1475.1 407.8 L1476.2 407.8 L1477.4 407.8 L1478.6 407.8 L1479.7 407.8 L1480.9 407.8 L1482.1 407.8 L1483.2 407.8 L1484.4 407.8 L1485.5 407.8 L1486.7 407.8 L1487.9 407.8 L1489 407.8 L1490.2 407.8 L1491.4 407.8 L1492.5 407.8 L1493.7 407.8 L1494.9 407.8 L1496 407.8 L1497.2 407.8 L1498.4 407.8 L1499.5 407.8 L1500.7 407.8 L1501.9 407.8 L1503 407.8 L1504.2 407.8 L1505.4 407.8 L1506.5 407.8 L1507.7 407.8 L1508.8 407.8 L1510 407.8 L1511.2 407.8 L1512.3 407.8 L1513.5 407.8 L1514.7 407.8 L1515.8 407.8 L1517 407.8 L1518.2 407.8 L1519.3 407.8 L1520.5 407.8 L1521.7 407.8 L1522.8 407.8 L1524 407.8 L1525.2 407.8 L1526.3 407.8 L1527.5 407.8 L1528.7 407.8 L1529.8 407.8 L1531 407.8 L1532.1 407.8 L1533.3 407.8 L1534.5 407.8 L1535.6 407.8 L1536.8 407.8 L1538 407.8 L1539.1 407.8 L1540.3 407.8 L1541.5 407.8 L1542.6 407.8 L1543.8 407.8 L1545 407.8 L1546.1 407.8 L1547.3 407.8 L1548.5 407.8 L1549.6 407.8 L1550.8 407.8 L1552 407.8 L1553.1 407.8 L1554.3 407.8 L1555.4 407.8 L1556.6 407.8 L1557.8 407.8 L1558.9 407.8 L1560.1 407.8 L1561.3 407.8 L1562.4 407.8 L1563.6 407.8 L1564.8 407.8 L1565.9 407.8 L1567.1 407.8 L1568.3 407.8 L1569.4 407.8 L1570.6 407.8 L1571.8 407.8 L1572.9 407.8 L1574.1 407.8 L1575.3 407.8 L1576.4 407.8 L1577.6 407.8 L1578.7 407.8 L1579.9 407.8 L1581.1 407.8 L1582.2 407.8 L1583.4 407.8 L1584.6 407.8 L1585.7 407.8 L1586.9 407.8 L1588.1 407.8 L1589.2 407.8 L1590.4 407.8 L1591.6 407.8 L1592.7 407.8 L1593.9 407.8 L1595.1 407.8 L1596.2 407.8 L1597.4 407.8 L1598.6 407.8 L1599.7 407.8 L1600.9 407.8 L1602 407.8 L1603.2 407.8 L1604.4 407.8 L1605.5 407.8 L1606.7 407.8 L1607.9 407.8 L1609 407.8 L1610.2 407.8 L1611.4 407.8 L1612.5 407.8 L1613.7 407.8 L1614.9 407.8 L1616 407.8 L1617.2 407.8 L1618.4 407.8 L1619.5 407.8 L1620.7 407.8 L1621.9 407.8 L1623 407.8 L1624.2 407.8 L1625.3 407.8 L1626.5 407.8 L1627.7 407.8 L1628.8 407.8 L1630 407.8 L1631.2 407.8 L1632.3 407.8 L1633.5 407.8 L1634.7 407.8 L1635.8 407.8 L1637 407.8 L1638.2 407.8 L1639.3 407.8 L1640.5 407.8 L1641.7 407.8 L1642.8 407.8 L1644 407.8 L1645.2 407.8 L1646.3 407.8 L1647.5 407.8 L1648.6 407.8 L1649.8 407.8 L1651 407.8 L1652.1 407.8 L1653.3 407.8 L1654.5 407.8 L1655.6 407.8 L1656.8 407.8 L1658 407.8 L1659.1 407.8 L1660.3 407.8 L1661.5 407.8 L1662.6 407.8 L1663.8 407.8 L1665 407.8 L1666.1 407.8 L1667.3 407.8 L1668.5 407.8 L1669.6 407.8 L1670.8 407.8 L1671.9 407.8 L1673.1 407.8 L1674.3 407.8 L1675.4 407.8 L1676.6 407.8 L1677.8 407.8 L1678.9 407.8 L1680.1 407.8 L1681.3 407.8 L1681.9 398.5 L1682.4 398.5 L1683.6 407.8 L1684.8 407.8 L1685.9 407.8 L1687.1 407.8 L1688.3 407.8 L1689.4 407.8 L1690 407.8 L1691.2 407.8 L1692.3 407.8 L1693.5 407.8 L1694.7 407.8 L1695.8 372.2 L1697 407.8 L1698.2 390 L1699.3 407.8 L1700.5 407.8 L1701.6 398.9 L1702.8 407.8 L1704 398.9 L1705.1 407.8 L1706.3 407.8 L1707.5 407.8 L1708.6 407.8 L1709.8 407.8 L1711 407.8 L1712.1 407.8 L1713.3 407.8 L1714.5 381.1 L1715.6 310 L1716.8 390 L1718 407.8 L1719.1 390 L1720.3 390 L1721.5 390 L1722.6 398.9 L1723.8 345.6 L1724.9 345.6 L1726.1 398.9 L1727.3 372.2 L1728.4 336.7 L1729.6 336.7 L1730.8 407.8 L1731.9 372.2 L1733.1 372.2 L1734.3 381.1 L1735.4 345.6 L1736.6 407.8 L1737.8 363.4 L1738.9 327.8 L1740.1 327.8 L1741.3 363.4 L1742.4 354.5 L1743.6 354.5 L1744.8 363.4 L1745.9 363.4 L1747.1 363.4 L1748.2 345.6 L1749.4 372.2 L1750.6 407.8 L1751.7 345.6 L1752.9 345.6 L1754.1 363.4 L1755.2 390 L1756.4 345.6 L1757.6 354.5 L1758.7 336.7 L1759.9 398.9 L1761.1 398.9 L1762.2 336.7 L1763.4 398.9 L1764.6 345.6 L1765.7 381.1 L1766.9 327.8 L1768.1 345.6 L1769.2 345.6 L1770.4 363.4 L1771.5 336.7 L1772.7 398.9 L1773.9 318.9 L1775 407.8 L1776.2 407.8 L1777.4 381.1 L1778.5 345.6 L1779.7 407.8 L1780.9 407.8 L1782 398.9 L1783.2 336.7 L1784.4 354.5 L1785.5 345.6 L1786.7 407.8 L1787.9 407.8 L1789 407.8" fill="none" stroke="#dcdcdc" stroke-width="1.3" stroke-linejoin="round" clip-path="url(#cTop)"/>
<path d="M113 400.5 L114.5 401.4 L116 402.8 L117.5 403 L119 404.8 L120.5 406 L122 406.5 L123.5 407.4 L125 408.9 L126.5 409.3 L128 409.2 L129.5 408.2 L131 407.3 L132.5 407.1 L134 405.9 L135.5 406.3 L137 404.5 L138.5 403.5 L140 403.6 L141.5 403.1 L143 402.5 L144.5 402.7 L146 402.7 L147.5 402.9 L149 403.5 L150.5 402.6 L152 402.6 L153.5 404.1 L155 405 L156.5 407.3 L158 409.3 L159.5 409.1 L161 408.2 L162.5 406.6 L164 405.4 L165.5 405.4 L167 404.9 L168.5 405.2 L170 404.4 L171.5 404.5 L173 404.4 L174.5 403.2 L176 404 L177.5 405.9 L179 407.5 L180.5 408.3 L182 409.2 L183.5 407.8 L185 406.8 L186.5 405.4 L188 405 L189.5 403.8 L191 401.7 L192.5 400.4 L194 399.8 L195.5 398.8 L197 398.6 L198.5 396.9 L200 396.5 L201.5 395.3 L203 394.5 L204.5 394.4 L206 394 L207.5 393.5 L209 392.3 L210.5 391.9 L212 394.8 L213.5 396 L215 397.1 L216.5 399.7 L218 400.2 L219.5 400.2 L221 399.2 L222.5 397.9 L224 398.8 L225.5 397.2 L227 398.2 L228.5 398.8 L230 400.5 L231.5 400.6 L233 401.6 L234.5 403.9 L236 403.4 L237.5 402.9 L239 401.3 L240.5 400.5 L242 400.1 L243.5 399.3 L245 399 L246.5 397.9 L248 398.1 L249.5 397.8 L251 396.5 L252.5 397.9 L254 399.4 L255.5 399.1 L257 401 L258.5 401.6 L260 401.1 L261.5 399.5 L263 399.5 L264.5 398.5 L266 397.3 L267.5 397.8 L269 400.3 L270.5 400 L272 401.4 L273.5 403.2 L275 403.4 L276.5 403.6 L278 402.9 L279.5 402.2 L281 400.9 L282.5 400.1 L284 399.5 L285.5 398.4 L287 397.2 L288.5 396 L290 394.8 L291.5 393.5 L293 393.5 L294.5 392.6 L296 391.4 L297.5 392 L299 392.4 L300.5 392.4 L302 391.8 L303.5 392.1 L305 393.1 L306.5 393.4 L308 396 L309.5 396.3 L311 397.3 L312.5 398.7 L314 399.8 L315.5 400.6 L317 398 L318.5 398.3 L320 396.6 L321.5 395.4 L323 393.5 L324.5 392.5 L326 391.9 L327.5 394 L329 395 L330.5 397.6 L332 399.2 L333.5 400.4 L335 400.3 L336.5 400.1 L338 398.7 L339.5 398.7 L341 397.5 L342.5 397.3 L344 399.5 L345.5 401 L347 402.5 L348.5 403.9 L350 405.8 L351.5 406.7 L353 407.5 L354.5 406.5 L356 405.9 L357.5 404.3 L359 404.5 L360.5 404.4 L362 402.3 L363.5 401.7 L365 402.4 L366.5 400.9 L368 401.9 L369.5 402.1 L371 403.1 L372.5 403.7 L374 404 L375.5 405.8 L377 405.3 L378.5 404.8 L380 404.5 L381.5 403.7 L383 403.5 L384.5 402.9 L386 402.1 L387.5 401.9 L389 401.6 L390.5 399.7 L392 399.3 L393.5 398.9 L395 399.6 L396.5 398.4 L398 397.9 L399.5 399.8 L401 400.8 L402.5 401.3 L404 402.4 L405.5 404 L407 405.5 L408.5 404.4 L410 404 L411.5 404.4 L413 403.7 L414.5 403 L416 403.3 L417.5 402.7 L419 402.1 L420.5 402 L422 400.8 L423.5 402 L425 402.3 L426.5 402.4 L428 404.2 L429.5 404.4 L431 405.2 L432.5 405.3 L434 405.2 L435.5 405.1 L437 403.3 L438.5 403.4 L440 401.2 L441.5 401.1 L443 400.1 L444.5 399.2 L446 397.3 L447.5 397.9 L449 398.3 L450.5 398.5 L452 397.8 L453.5 397.8 L455 398.4 L456.5 398.1 L458 398.9 L459.5 398.9 L461 400.2 L462.5 400.1 L464 401 L465.5 400.8 L467 401.9 L468.5 403.2 L470 405.8 L471.5 407.1 L473 407.2 L474.5 406.3 L476 404.8 L477.5 404.5 L479 402.8 L480.5 403.1 L482 401 L483.5 401.2 L485 402 L486.5 404 L488 404.3 L489.5 405.1 L491 405.9 L492.5 406.4 L494 405.8 L495.5 404.3 L497 403 L498.5 402.6 L500 401.1 L501.5 399.1 L503 399.7 L504.5 400.2 L506 402.5 L507.5 403.5 L509 405.8 L510.5 406.2 L512 408 L513.5 407.8 L515 407 L516.5 406.3 L518 405.3 L519.5 404.4 L521 403.6 L522.5 403.9 L524 402.3 L525.5 401.6 L527 402.2 L528.5 402 L530 401.3 L531.5 400.6 L533 400.8 L534.5 399.7 L536 397.1 L537.5 393.3 L539 391.5 L540.5 390.5 L542 391.1 L543.5 391.6 L545 391.5 L546.5 393.5 L548 396.6 L549.5 399.4 L551 400.9 L552.5 400.2 L554 398.8 L555.5 399.4 L557 398.6 L558.5 398.6 L560 397.7 L561.5 397.7 L563 397.7 L564.5 399.1 L566 400.7 L567.5 401.8 L569 403.7 L570.5 403.9 L572 405.4 L573.5 407.3 L575 408.1 L576.5 407.6 L578 407 L579.5 406.6 L581 406.1 L582.5 405.4 L584 406.4 L585.5 406.1 L587 405.4 L588.5 405.2 L590 404.4 L591.5 404.7 L593 405.8 L594.5 406.2 L596 406.7 L597.5 408.3 L599 408.5 L600.5 409.1 L602 409.8 L603.5 409.8 L605 409.5 L606.5 408.2 L608 408.2 L609.5 407.6 L611 406.1 L612.5 406.2 L614 404.9 L615.5 405.1 L617 406.1 L618.5 406.4 L620 408.2 L621.5 408 L623 409.5 L624.5 409.7 L626 408.6 L627.5 408.9 L629 407.8 L630.5 407.4 L632 406.9 L633.5 406.5 L635 407.2 L636.5 406.9 L638 406.1 L639.5 407.1 L641 407.4 L642.5 409.1 L644 409.8 L645.5 409.8 L647 409.8 L648.5 409.8 L650 409 L651.5 409.3 L653 408.8 L654.5 408.8 L656 409.4 L657.5 409.8 L659 409.8 L660.5 409.3 L662 409.8 L663.5 409.4 L665 408.6 L666.5 408.3 L668 407.3 L669.5 404.9 L671 404.6 L672.5 403.7 L674 402.7 L675.5 401.2 L677 401.6 L678.5 402.4 L680 403.4 L681.5 404.9 L683 405.6 L684.5 406.4 L686 407.4 L687.5 406.5 L689 406.2 L690.5 406 L692 407.4 L693.5 407.2 L695 406.5 L696.5 407.5 L698 407.1 L699.5 407.8 L701 408.2 L702.5 409.8 L704 409.8 L705.5 409.8 L707 409.8 L708.5 409.8 L710 409.7 L711.5 409.8 L713 409.8 L714.5 409.2 L716 409.8 L717.5 409.8 L719 409.8 L720.5 408.8 L722 408.6 L723.5 409.8 L725 408.9 L726.5 408.8 L728 408.8 L729.5 409 L731 408.9 L732.5 408.3 L734 409.3 L735.5 407.9 L737 409 L738.5 408.7 L740 408.3 L741.5 408.8 L743 407.3 L744.5 408 L746 407.9 L747.5 407.9 L749 407 L750.5 407.7 L752 407.1 L753.5 406.5 L755 407.3 L756.5 406.4 L758 406.9 L759.5 407 L761 406.8 L762.5 406.9 L764 406.6 L765.5 406.8 L767 407.1 L768.5 405.8 L770 406.5 L771.5 406.6 L773 406.4 L774.5 406.2 L776 406.2 L777.5 406.9 L779 407.4 L780.5 407.2 L782 408.4 L783.5 408.5 L785 409.1 L786.5 409.2 L788 409.1 L789.5 409.6 L791 409.8 L792.5 409.7 L794 409.8 L795.5 408.9 L797 409 L798.5 408.5 L800 408.3 L801.5 408.8 L803 409 L804.5 408 L806 408.6 L807.5 408.7 L809 408.4 L810.5 408.9 L812 407.9 L813.5 408.1 L815 409.1 L816.5 408.1 L818 408.4 L819.5 408.5 L821 409.8 L822.5 408.8 L824 409.8 L825.5 409.8 L827 409.2 L828.5 409.4 L830 409.8 L831.5 409.8 L833 409.8 L834.5 409.8 L836 409.8 L837.5 409.8 L839 409.8 L840.5 409.8 L842 409.8 L843.5 409.8 L845 409.8 L846.5 409.8 L848 409.8 L849.5 409.8 L851 409.8 L852.5 409.8 L854 409.8 L855.5 409.8 L857 409.8 L858.5 409.8 L860 409.8 L861.5 409.8 L863 409.8 L864.5 409.8 L866 409.8 L867.5 409.8 L869 409.8 L870.5 409.8 L872 409.8 L873.5 409.8 L875 409.8 L876.5 409.8 L878 409.8 L879.5 409.8 L881 409.8 L882.5 409.8 L884 409.8 L885.5 409.8 L887 409.8 L888.5 409.8 L890 409.8 L891.5 409.8 L893 409.8 L894.5 409.8 L896 409.8 L897.5 409.8 L899 409.8 L900.5 409.8 L902 409.8 L903.5 409.8 L905 409.8 L906.5 409.8 L908 409.8 L909.5 409.8 L911 409.8 L912.5 409.8 L914 409.8 L915.5 409.8 L917 409.8 L918.5 409.8 L920 409.8 L921.5 409.8 L923 409.8 L924.5 409.8 L926 409.8 L927.5 409.8 L929 409.8 L930.5 409.8 L932 409.8 L933.5 409.8 L935 409.8 L936.5 409.8 L938 409.8 L939.5 409.8 L941 409.8 L942.5 409.8 L944 409.8 L945.5 409.8 L947 409.8 L948.5 409.8 L950 409.8 L951.5 409.8 L953 409.8 L954.5 409.8 L956 409.8 L957.5 409.8 L959 409.8 L960.5 409.8 L962 409.8 L963.5 409.8 L965 409.8 L966.5 409.8 L968 409.8 L969.5 409.8 L971 409.8 L972.5 409.8 L974 409.8 L975.5 409.8 L977 409.8 L978.5 409.8 L980 409.8 L981.5 409.8 L983 409.8 L984.5 409.8 L986 409.8 L987.5 409.8 L989 409.8 L990.5 409.8 L992 409.8 L993.5 409.8 L995 409.8 L996.5 409.8 L998 409.8 L999.5 409.8 L1001 409.8 L1002.5 409.8 L1004 409.8 L1005.5 409.8 L1007 409.8 L1008.5 409.8 L1010 409.8 L1011.5 409.8 L1013 409.8 L1014.5 409.8 L1016 409.8 L1017.5 409.8 L1019 409.8 L1020.5 409.8 L1022 409.8 L1023.5 409.8 L1025 409.8 L1026.5 409.8 L1028 409.8 L1029.5 409.8 L1031 409.8 L1032.5 409.8 L1034 409.8 L1035.5 409.8 L1037 409.8 L1038.5 409.8 L1040 409.8 L1041.5 409.8 L1043 409.8 L1044.5 409.8 L1046 409.8 L1047.5 409.8 L1049 409.8 L1050.5 409.8 L1052 409.8 L1053.5 409.8 L1055 409.8 L1056.5 409.8 L1058 409.8 L1059.5 409.8 L1061 409.8 L1062.5 409.8 L1064 409.8 L1065.5 409.8 L1067 409.8 L1068.5 409.8 L1070 409.8 L1071.5 409.8 L1073 409.8 L1074.5 409.8 L1076 409.8 L1077.5 409.8 L1079 409.8 L1080.5 409.8 L1082 409.8 L1083.5 409.8 L1085 409.8 L1086.5 409.8 L1088 409.8 L1089.5 409.8 L1091 409.8 L1092.5 409.8 L1094 409.8 L1095.5 409.8 L1097 409.8 L1098.5 409.8 L1100 409.8 L1101.5 409.8 L1103 409.8 L1104.5 409.8 L1106 409.8 L1107.5 409.8 L1109 409.8 L1110.5 409.8 L1112 409.8 L1113.5 409.8 L1115 409.8 L1116.5 409.8 L1118 409.8 L1119.5 409.8 L1121 409.8 L1122.5 409.8 L1124 409.8 L1125.5 409.8 L1127 409.8 L1128.5 409.8 L1130 409.8 L1131.5 409.8 L1133 409.8 L1134.5 409.8 L1136 409.8 L1137.5 409.8 L1139 409.8 L1140.5 409.8 L1142 409.8 L1143.5 409.8 L1145 409.8 L1146.5 409.8 L1148 409.8 L1149.5 409.8 L1151 409.8 L1152.5 409.8 L1154 409.8 L1155.5 409.8 L1157 409.8 L1158.5 409.8 L1160 409.8 L1161.5 409.8 L1163 409.8 L1164.5 409.8 L1166 409.8 L1167.5 409.8 L1169 409.8 L1170.5 409.8 L1172 409.8 L1173.5 409.8 L1175 409.8 L1176.5 409.8 L1178 409.8 L1179.5 409.8 L1181 409.8 L1182.5 409.8 L1184 409.8 L1185.5 409.8 L1187 409.8 L1188.5 409.8 L1190 409.8 L1191.5 409.8 L1193 409.8 L1194.5 409.8 L1196 409.8 L1197.5 409.8 L1199 409.8 L1200.5 409.8 L1202 409.8 L1203.5 409.8 L1205 409.8 L1206.5 409.8 L1208 409.8 L1209.5 409.8 L1211 409.8 L1212.5 409.8 L1214 409.8 L1215.5 409.8 L1217 409.8 L1218.5 409.8 L1220 409.8 L1221.5 409.8 L1223 409.8 L1224.5 409.8 L1226 409.8 L1227.5 409.8 L1229 409.8 L1230.5 409.8 L1232 409.8 L1233.5 409.8 L1235 409.8 L1236.5 409.8 L1238 409.8 L1239.5 409.8 L1241 409.8 L1242.5 409.8 L1244 409.8 L1245.5 409.8 L1247 409.8 L1248.5 409.8 L1250 409.8 L1251.5 409.8 L1253 409.8 L1254.5 409.8 L1256 409.8 L1257.5 409.8 L1259 409.8 L1260.5 409.8 L1262 409.8 L1263.5 409.8 L1265 409.8 L1266.5 409.8 L1268 409.8 L1269.5 409.8 L1271 409.8 L1272.5 409.8 L1274 409.8 L1275.5 409.8 L1277 409.8 L1278.5 409.8 L1280 409.8 L1281.5 409.8 L1283 409.8 L1284.5 409.8 L1286 409.8 L1287.5 409.8 L1289 409.8 L1290.5 409.8 L1292 409.8 L1293.5 409.8 L1295 409.8 L1296.5 409.8 L1298 409.8 L1299.5 409.8 L1301 409.8 L1302.5 409.8 L1304 409.8 L1305.5 409.8 L1307 409.8 L1308.5 409.8 L1310 409.8 L1311.5 409.8 L1313 409.8 L1314.5 409.8 L1316 409.8 L1317.5 409.8 L1319 409.8 L1320.5 409.8 L1322 409.8 L1323.5 409.8 L1325 409.8 L1326.5 409.8 L1328 409.8 L1329.5 409.8 L1331 409.8 L1332.5 409.8 L1334 409.8 L1335.5 409.8 L1337 409.8 L1338.5 409.8 L1340 409.8 L1341.5 409.8 L1343 409.8 L1344.5 409.8 L1346 409.8 L1347.5 409.8 L1349 409.8 L1350.5 409.8 L1352 409.8 L1353.5 409.8 L1355 409.8 L1356.5 409.8 L1358 409.8 L1359.5 409.8 L1361 409.8 L1362.5 409.8 L1364 409.8 L1365.5 409.8 L1367 409.8 L1368.5 409.8 L1370 409.8 L1371.5 409.8 L1373 409.8 L1374.5 409.8 L1376 409.8 L1377.5 409.8 L1379 409.8 L1380.5 409.8 L1382 409.8 L1383.5 409.8 L1385 409.8 L1386.5 409.8 L1388 409.8 L1389.5 409.8 L1391 409.8 L1392.5 409.8 L1394 409.8 L1395.5 409.8 L1397 409.8 L1398.5 409.8 L1400 409.8 L1401.5 409.8 L1403 409.8 L1404.5 409.8 L1406 409.8 L1407.5 409.8 L1409 409.8 L1410.5 409.8 L1412 409.8 L1413.5 409.8 L1415 409.8 L1416.5 409.8 L1418 409.8 L1419.5 409.8 L1421 409.8 L1422.5 409.8 L1424 409.8 L1425.5 409.8 L1427 409.8 L1428.5 409.8 L1430 409.8 L1431.5 409.8 L1433 409.8 L1434.5 409.8 L1436 409.8 L1437.5 409.8 L1439 409.8 L1440.5 409.8 L1442 409.8 L1443.5 409.8 L1445 409.8 L1446.5 409.8 L1448 409.8 L1449.5 409.8 L1451 409.8 L1452.5 409.8 L1454 409.8 L1455.5 409.8 L1457 409.8 L1458.5 409.8 L1460 409.8 L1461.5 409.8 L1463 409.8 L1464.5 409.8 L1466 409.8 L1467.5 409.8 L1469 409.8 L1470.5 409.8 L1472 409.8 L1473.5 409.8 L1475 409.8 L1476.5 409.8 L1478 409.8 L1479.5 409.8 L1481 409.8 L1482.5 409.8 L1484 409.8 L1485.5 409.8 L1487 409.8 L1488.5 409.8 L1490 409.8 L1491.5 409.8 L1493 409.8 L1494.5 409.8 L1496 409.8 L1497.5 409.8 L1499 409.8 L1500.5 409.8 L1502 409.8 L1503.5 409.8 L1505 409.8 L1506.5 409.8 L1508 409.8 L1509.5 409.8 L1511 409.8 L1512.5 409.8 L1514 409.8 L1515.5 409.8 L1517 409.8 L1518.5 409.8 L1520 409.8 L1521.5 409.8 L1523 409.8 L1524.5 409.8 L1526 409.8 L1527.5 409.8 L1529 409.8 L1530.5 409.8 L1532 409.8 L1533.5 409.8 L1535 409.8 L1536.5 409.8 L1538 409.8 L1539.5 409.8 L1541 409.8 L1542.5 409.8 L1544 409.8 L1545.5 409.8 L1547 409.8 L1548.5 409.8 L1550 409.8 L1551.5 409.8 L1553 409.8 L1554.5 409.8 L1556 409.8 L1557.5 409.8 L1559 409.8 L1560.5 409.8 L1562 409.8 L1563.5 409.8 L1565 409.8 L1566.5 409.8 L1568 409.8 L1569.5 409.8 L1571 409.8 L1572.5 409.8 L1574 409.8 L1575.5 409.8 L1577 409.8 L1578.5 409.8 L1580 409.8 L1581.5 409.8 L1583 409.8 L1584.5 409.8 L1586 409.8 L1587.5 409.8 L1589 409.8 L1590.5 409.8 L1592 409.8 L1593.5 409.8 L1595 409.8 L1596.5 409.8 L1598 409.8 L1599.5 409.8 L1601 409.8 L1602.5 409.8 L1604 409.8 L1605.5 409.8 L1607 409.8 L1608.5 409.8 L1610 409.8 L1611.5 409.8 L1613 409.8 L1614.5 409.8 L1616 409.8 L1617.5 409.8 L1619 409.8 L1620.5 409.8 L1622 409.8 L1623.5 409.8 L1625 409.8 L1626.5 409.8 L1628 409.8 L1629.5 409.8 L1631 409.8 L1632.5 409.8 L1634 409.8 L1635.5 409.8 L1637 409.8 L1638.5 409.8 L1640 409.8 L1641.5 409.8 L1643 409.8 L1644.5 409.8 L1646 409.8 L1647.5 409.8 L1649 409.8 L1650.5 409.8 L1652 409.8 L1653.5 409.8 L1655 409.8 L1656.5 409.8 L1658 409.8 L1659.5 409.8 L1661 409.8 L1662.5 409.8 L1664 409.8 L1665.5 409.8 L1667 409.8 L1668.5 409.8 L1670 409.8 L1671.5 409.8 L1673 409.8 L1674.5 409.8 L1676 409.8 L1677.5 409.8 L1679 409.8 L1680.5 409.8 L1682 409.8 L1683.5 409.8 L1685 409.8 L1686.5 409.8 L1688 409.8 L1689.5 409.8 L1691 409.2 L1692.5 409.8 L1694 409.7 L1695.5 408.3 L1697 409.4 L1698.5 407.8 L1700 407.8 L1701.5 407.8 L1703 408.5 L1704.5 407.6 L1706 408.5 L1707.5 408.1 L1709 407.2 L1710.5 407.7 L1712 407.7 L1713.5 407.2 L1715 408.1 L1716.5 408.2 L1718 408.4 L1719.5 408.4 L1721 408.2 L1722.5 409.1 L1724 408.6 L1725.5 407.7 L1727 407.6 L1728.5 407.1 L1730 408.2 L1731.5 407.3 L1733 407.8 L1734.5 407.1 L1736 408.1 L1737.5 407.4 L1739 408.8 L1740.5 408.5 L1742 408.3 L1743.5 407.5 L1745 407.9 L1746.5 407 L1748 407.2 L1749.5 406.6 L1751 406.7 L1752.5 406.1 L1754 406.9 L1755.5 405.9 L1757 406.1 L1758.5 405.9 L1760 405.3 L1761.5 405.1 L1763 404.9 L1764.5 403.8 L1766 403 L1767.5 401.7 L1769 401.9 L1770.5 402.2 L1772 401.8 L1773.5 403.3 L1775 402.4 L1776.5 403.5 L1778 404.1 L1779.5 405 L1781 405.2 L1782.5 404.2 L1784 402.9 L1785.5 404.8 L1787 407.2 L1788.5 407.8 L1790 407.1" fill="none" stroke="#10d010" stroke-width="1.5" stroke-linejoin="round" clip-path="url(#cTop)"/>
<rect x="111" y="410" width="1681" height="1" fill="#b4e0b4"/>
<rect x="111" y="411" width="1681" height="1" fill="#c8c8c8"/>
<rect x="111" y="18" width="2" height="394" fill="#f0f0f0"/>
<rect x="1790" y="18" width="2" height="394" fill="#f0d0f0"/>
<line x1="106" y1="407.8" x2="111" y2="407.8" stroke="#bbbbbb" stroke-width="1.2"/>
<text x="103" y="410.8" fill="#ffffff" font-size="8.3" text-anchor="end" textLength="3.8" lengthAdjust="spacingAndGlyphs" >0</text>
<line x1="108.5" y1="403.9" x2="111" y2="403.9" stroke="#999999" stroke-width="1"/>
<line x1="108.5" y1="400.1" x2="111" y2="400.1" stroke="#999999" stroke-width="1"/>
<line x1="108.5" y1="396.2" x2="111" y2="396.2" stroke="#999999" stroke-width="1"/>
<line x1="106" y1="392.3" x2="111" y2="392.3" stroke="#bbbbbb" stroke-width="1.2"/>
<text x="103" y="395.3" fill="#ffffff" font-size="8.3" text-anchor="end" textLength="3.8" lengthAdjust="spacingAndGlyphs" >2</text>
<line x1="108.5" y1="388.5" x2="111" y2="388.5" stroke="#999999" stroke-width="1"/>
<line x1="108.5" y1="384.6" x2="111" y2="384.6" stroke="#999999" stroke-width="1"/>
<line x1="108.5" y1="380.7" x2="111" y2="380.7" stroke="#999999" stroke-width="1"/>
<line x1="106" y1="376.9" x2="111" y2="376.9" stroke="#bbbbbb" stroke-width="1.2"/>
<text x="103" y="379.9" fill="#ffffff" font-size="8.3" text-anchor="end" textLength="3.8" lengthAdjust="spacingAndGlyphs" >4</text>
<line x1="108.5" y1="373" x2="111" y2="373" stroke="#999999" stroke-width="1"/>
<line x1="108.5" y1="369.1" x2="111" y2="369.1" stroke="#999999" stroke-width="1"/>
<line x1="108.5" y1="365.3" x2="111" y2="365.3" stroke="#999999" stroke-width="1"/>
<line x1="106" y1="361.4" x2="111" y2="361.4" stroke="#bbbbbb" stroke-width="1.2"/>
<text x="103" y="364.4" fill="#ffffff" font-size="8.3" text-anchor="end" textLength="3.8" lengthAdjust="spacingAndGlyphs" >6</text>
<line x1="108.5" y1="357.6" x2="111" y2="357.6" stroke="#999999" stroke-width="1"/>
<line x1="108.5" y1="353.7" x2="111" y2="353.7" stroke="#999999" stroke-width="1"/>
<line x1="108.5" y1="349.8" x2="111" y2="349.8" stroke="#999999" stroke-width="1"/>
<line x1="106" y1="346" x2="111" y2="346" stroke="#bbbbbb" stroke-width="1.2"/>
<text x="103" y="349" fill="#ffffff" font-size="8.3" text-anchor="end" textLength="3.8" lengthAdjust="spacingAndGlyphs" >8</text>
<line x1="108.5" y1="342.1" x2="111" y2="342.1" stroke="#999999" stroke-width="1"/>
<line x1="108.5" y1="338.2" x2="111" y2="338.2" stroke="#999999" stroke-width="1"/>
<line x1="108.5" y1="334.4" x2="111" y2="334.4" stroke="#999999" stroke-width="1"/>
<line x1="106" y1="330.5" x2="111" y2="330.5" stroke="#bbbbbb" stroke-width="1.2"/>
<text x="103" y="333.5" fill="#ffffff" font-size="8.3" text-anchor="end" textLength="7.1" lengthAdjust="spacingAndGlyphs" >10</text>
<line x1="108.5" y1="326.6" x2="111" y2="326.6" stroke="#999999" stroke-width="1"/>
<line x1="108.5" y1="322.8" x2="111" y2="322.8" stroke="#999999" stroke-width="1"/>
<line x1="108.5" y1="318.9" x2="111" y2="318.9" stroke="#999999" stroke-width="1"/>
<line x1="106" y1="315" x2="111" y2="315" stroke="#bbbbbb" stroke-width="1.2"/>
<text x="103" y="318" fill="#ffffff" font-size="8.3" text-anchor="end" textLength="7.1" lengthAdjust="spacingAndGlyphs" >12</text>
<line x1="108.5" y1="311.2" x2="111" y2="311.2" stroke="#999999" stroke-width="1"/>
<line x1="108.5" y1="307.3" x2="111" y2="307.3" stroke="#999999" stroke-width="1"/>
<line x1="108.5" y1="303.4" x2="111" y2="303.4" stroke="#999999" stroke-width="1"/>
<line x1="106" y1="299.6" x2="111" y2="299.6" stroke="#bbbbbb" stroke-width="1.2"/>
<text x="103" y="302.6" fill="#ffffff" font-size="8.3" text-anchor="end" textLength="7.1" lengthAdjust="spacingAndGlyphs" >14</text>
<line x1="108.5" y1="295.7" x2="111" y2="295.7" stroke="#999999" stroke-width="1"/>
<line x1="108.5" y1="291.9" x2="111" y2="291.9" stroke="#999999" stroke-width="1"/>
<line x1="108.5" y1="288" x2="111" y2="288" stroke="#999999" stroke-width="1"/>
<line x1="106" y1="284.1" x2="111" y2="284.1" stroke="#bbbbbb" stroke-width="1.2"/>
<text x="103" y="287.1" fill="#ffffff" font-size="8.3" text-anchor="end" textLength="7.1" lengthAdjust="spacingAndGlyphs" >16</text>
<line x1="108.5" y1="280.3" x2="111" y2="280.3" stroke="#999999" stroke-width="1"/>
<line x1="108.5" y1="276.4" x2="111" y2="276.4" stroke="#999999" stroke-width="1"/>
<line x1="108.5" y1="272.5" x2="111" y2="272.5" stroke="#999999" stroke-width="1"/>
<line x1="106" y1="268.7" x2="111" y2="268.7" stroke="#bbbbbb" stroke-width="1.2"/>
<text x="103" y="271.7" fill="#ffffff" font-size="8.3" text-anchor="end" textLength="7.1" lengthAdjust="spacingAndGlyphs" >18</text>
<line x1="108.5" y1="264.8" x2="111" y2="264.8" stroke="#999999" stroke-width="1"/>
<line x1="108.5" y1="260.9" x2="111" y2="260.9" stroke="#999999" stroke-width="1"/>
<line x1="108.5" y1="257.1" x2="111" y2="257.1" stroke="#999999" stroke-width="1"/>
<line x1="106" y1="253.2" x2="111" y2="253.2" stroke="#bbbbbb" stroke-width="1.2"/>
<text x="103" y="256.2" fill="#ffffff" font-size="8.3" text-anchor="end" textLength="8.1" lengthAdjust="spacingAndGlyphs" >20</text>
<line x1="108.5" y1="249.3" x2="111" y2="249.3" stroke="#999999" stroke-width="1"/>
<line x1="108.5" y1="245.5" x2="111" y2="245.5" stroke="#999999" stroke-width="1"/>
<line x1="108.5" y1="241.6" x2="111" y2="241.6" stroke="#999999" stroke-width="1"/>
<line x1="106" y1="237.7" x2="111" y2="237.7" stroke="#bbbbbb" stroke-width="1.2"/>
<text x="103" y="240.7" fill="#ffffff" font-size="8.3" text-anchor="end" textLength="8.1" lengthAdjust="spacingAndGlyphs" >22</text>
<line x1="108.5" y1="233.9" x2="111" y2="233.9" stroke="#999999" stroke-width="1"/>
<line x1="108.5" y1="230" x2="111" y2="230" stroke="#999999" stroke-width="1"/>
<line x1="108.5" y1="226.1" x2="111" y2="226.1" stroke="#999999" stroke-width="1"/>
<line x1="106" y1="222.3" x2="111" y2="222.3" stroke="#bbbbbb" stroke-width="1.2"/>
<text x="103" y="225.3" fill="#ffffff" font-size="8.3" text-anchor="end" textLength="8.1" lengthAdjust="spacingAndGlyphs" >24</text>
<line x1="108.5" y1="218.4" x2="111" y2="218.4" stroke="#999999" stroke-width="1"/>
<line x1="108.5" y1="214.6" x2="111" y2="214.6" stroke="#999999" stroke-width="1"/>
<line x1="108.5" y1="210.7" x2="111" y2="210.7" stroke="#999999" stroke-width="1"/>
<line x1="106" y1="206.8" x2="111" y2="206.8" stroke="#bbbbbb" stroke-width="1.2"/>
<text x="103" y="209.8" fill="#ffffff" font-size="8.3" text-anchor="end" textLength="8.1" lengthAdjust="spacingAndGlyphs" >26</text>
<line x1="108.5" y1="203" x2="111" y2="203" stroke="#999999" stroke-width="1"/>
<line x1="108.5" y1="199.1" x2="111" y2="199.1" stroke="#999999" stroke-width="1"/>
<line x1="108.5" y1="195.2" x2="111" y2="195.2" stroke="#999999" stroke-width="1"/>
<line x1="106" y1="191.4" x2="111" y2="191.4" stroke="#bbbbbb" stroke-width="1.2"/>
<text x="103" y="194.4" fill="#ffffff" font-size="8.3" text-anchor="end" textLength="8.1" lengthAdjust="spacingAndGlyphs" >28</text>
<line x1="108.5" y1="187.5" x2="111" y2="187.5" stroke="#999999" stroke-width="1"/>
<line x1="108.5" y1="183.6" x2="111" y2="183.6" stroke="#999999" stroke-width="1"/>
<line x1="108.5" y1="179.8" x2="111" y2="179.8" stroke="#999999" stroke-width="1"/>
<line x1="106" y1="175.9" x2="111" y2="175.9" stroke="#bbbbbb" stroke-width="1.2"/>
<text x="103" y="178.9" fill="#ffffff" font-size="8.3" text-anchor="end" textLength="8.1" lengthAdjust="spacingAndGlyphs" >30</text>
<line x1="108.5" y1="172" x2="111" y2="172" stroke="#999999" stroke-width="1"/>
<line x1="108.5" y1="168.2" x2="111" y2="168.2" stroke="#999999" stroke-width="1"/>
<line x1="108.5" y1="164.3" x2="111" y2="164.3" stroke="#999999" stroke-width="1"/>
<line x1="106" y1="160.4" x2="111" y2="160.4" stroke="#bbbbbb" stroke-width="1.2"/>
<text x="103" y="163.4" fill="#ffffff" font-size="8.3" text-anchor="end" textLength="8.1" lengthAdjust="spacingAndGlyphs" >32</text>
<line x1="108.5" y1="156.6" x2="111" y2="156.6" stroke="#999999" stroke-width="1"/>
<line x1="108.5" y1="152.7" x2="111" y2="152.7" stroke="#999999" stroke-width="1"/>
<line x1="108.5" y1="148.8" x2="111" y2="148.8" stroke="#999999" stroke-width="1"/>
<line x1="106" y1="145" x2="111" y2="145" stroke="#bbbbbb" stroke-width="1.2"/>
<text x="103" y="148" fill="#ffffff" font-size="8.3" text-anchor="end" textLength="8.1" lengthAdjust="spacingAndGlyphs" >34</text>
<line x1="108.5" y1="141.1" x2="111" y2="141.1" stroke="#999999" stroke-width="1"/>
<line x1="108.5" y1="137.2" x2="111" y2="137.2" stroke="#999999" stroke-width="1"/>
<line x1="108.5" y1="133.4" x2="111" y2="133.4" stroke="#999999" stroke-width="1"/>
<line x1="106" y1="129.5" x2="111" y2="129.5" stroke="#bbbbbb" stroke-width="1.2"/>
<text x="103" y="132.5" fill="#ffffff" font-size="8.3" text-anchor="end" textLength="8.1" lengthAdjust="spacingAndGlyphs" >36</text>
<line x1="108.5" y1="125.7" x2="111" y2="125.7" stroke="#999999" stroke-width="1"/>
<line x1="108.5" y1="121.8" x2="111" y2="121.8" stroke="#999999" stroke-width="1"/>
<line x1="108.5" y1="117.9" x2="111" y2="117.9" stroke="#999999" stroke-width="1"/>
<line x1="106" y1="114.1" x2="111" y2="114.1" stroke="#bbbbbb" stroke-width="1.2"/>
<text x="103" y="117.1" fill="#ffffff" font-size="8.3" text-anchor="end" textLength="8.1" lengthAdjust="spacingAndGlyphs" >38</text>
<line x1="108.5" y1="110.2" x2="111" y2="110.2" stroke="#999999" stroke-width="1"/>
<line x1="108.5" y1="106.3" x2="111" y2="106.3" stroke="#999999" stroke-width="1"/>
<line x1="108.5" y1="102.5" x2="111" y2="102.5" stroke="#999999" stroke-width="1"/>
<line x1="106" y1="98.6" x2="111" y2="98.6" stroke="#bbbbbb" stroke-width="1.2"/>
<text x="103" y="101.6" fill="#ffffff" font-size="8.3" text-anchor="end" textLength="8.1" lengthAdjust="spacingAndGlyphs" >40</text>
<line x1="108.5" y1="94.7" x2="111" y2="94.7" stroke="#999999" stroke-width="1"/>
<line x1="108.5" y1="90.9" x2="111" y2="90.9" stroke="#999999" stroke-width="1"/>
<line x1="108.5" y1="87" x2="111" y2="87" stroke="#999999" stroke-width="1"/>
<line x1="106" y1="83.1" x2="111" y2="83.1" stroke="#bbbbbb" stroke-width="1.2"/>
<text x="103" y="86.1" fill="#ffffff" font-size="8.3" text-anchor="end" textLength="8.1" lengthAdjust="spacingAndGlyphs" >42</text>
<line x1="108.5" y1="79.3" x2="111" y2="79.3" stroke="#999999" stroke-width="1"/>
<line x1="108.5" y1="75.4" x2="111" y2="75.4" stroke="#999999" stroke-width="1"/>
<line x1="108.5" y1="71.5" x2="111" y2="71.5" stroke="#999999" stroke-width="1"/>
<line x1="106" y1="67.7" x2="111" y2="67.7" stroke="#bbbbbb" stroke-width="1.2"/>
<text x="103" y="70.7" fill="#ffffff" font-size="8.3" text-anchor="end" textLength="8.1" lengthAdjust="spacingAndGlyphs" >44</text>
<line x1="108.5" y1="63.8" x2="111" y2="63.8" stroke="#999999" stroke-width="1"/>
<line x1="108.5" y1="59.9" x2="111" y2="59.9" stroke="#999999" stroke-width="1"/>
<line x1="108.5" y1="56.1" x2="111" y2="56.1" stroke="#999999" stroke-width="1"/>
<line x1="106" y1="52.2" x2="111" y2="52.2" stroke="#bbbbbb" stroke-width="1.2"/>
<text x="103" y="55.2" fill="#ffffff" font-size="8.3" text-anchor="end" textLength="8.1" lengthAdjust="spacingAndGlyphs" >46</text>
<line x1="108.5" y1="48.4" x2="111" y2="48.4" stroke="#999999" stroke-width="1"/>
<line x1="108.5" y1="44.5" x2="111" y2="44.5" stroke="#999999" stroke-width="1"/>
<line x1="108.5" y1="40.6" x2="111" y2="40.6" stroke="#999999" stroke-width="1"/>
<line x1="106" y1="36.8" x2="111" y2="36.8" stroke="#bbbbbb" stroke-width="1.2"/>
<text x="103" y="39.8" fill="#ffffff" font-size="8.3" text-anchor="end" textLength="8.1" lengthAdjust="spacingAndGlyphs" >48</text>
<line x1="108.5" y1="32.9" x2="111" y2="32.9" stroke="#999999" stroke-width="1"/>
<line x1="108.5" y1="29" x2="111" y2="29" stroke="#999999" stroke-width="1"/>
<line x1="108.5" y1="25.2" x2="111" y2="25.2" stroke="#999999" stroke-width="1"/>
<line x1="106" y1="21.3" x2="111" y2="21.3" stroke="#bbbbbb" stroke-width="1.2"/>
<text x="103" y="24.3" fill="#ffffff" font-size="8.3" text-anchor="end" textLength="8.1" lengthAdjust="spacingAndGlyphs" >50</text>
<line x1="1791" y1="25.9" x2="1795.5" y2="25.9" stroke="#d000d0" stroke-width="1.5"/>
<text x="1797" y="28.4" fill="#ff00ff" font-size="8.3" text-anchor="start" textLength="18.7" lengthAdjust="spacingAndGlyphs" >30.25</text>
<line x1="1791" y1="29.1" x2="1793.5" y2="29.1" stroke="#d000d0" stroke-width="1"/>
<line x1="1791" y1="32.4" x2="1793.5" y2="32.4" stroke="#d000d0" stroke-width="1"/>
<line x1="1791" y1="35.6" x2="1793.5" y2="35.6" stroke="#d000d0" stroke-width="1"/>
<line x1="1791" y1="38.9" x2="1795.5" y2="38.9" stroke="#d000d0" stroke-width="1.5"/>
<text x="1797" y="41.4" fill="#ff00ff" font-size="8.3" text-anchor="start" textLength="14.4" lengthAdjust="spacingAndGlyphs" >30.2</text>
<line x1="1791" y1="42.1" x2="1793.5" y2="42.1" stroke="#d000d0" stroke-width="1"/>
<line x1="1791" y1="45.4" x2="1793.5" y2="45.4" stroke="#d000d0" stroke-width="1"/>
<line x1="1791" y1="48.6" x2="1793.5" y2="48.6" stroke="#d000d0" stroke-width="1"/>
<line x1="1791" y1="51.9" x2="1795.5" y2="51.9" stroke="#d000d0" stroke-width="1.5"/>
<text x="1797" y="54.4" fill="#ff00ff" font-size="8.3" text-anchor="start" textLength="17.7" lengthAdjust="spacingAndGlyphs" >30.15</text>
<line x1="1791" y1="55.1" x2="1793.5" y2="55.1" stroke="#d000d0" stroke-width="1"/>
<line x1="1791" y1="58.4" x2="1793.5" y2="58.4" stroke="#d000d0" stroke-width="1"/>
<line x1="1791" y1="61.6" x2="1793.5" y2="61.6" stroke="#d000d0" stroke-width="1"/>
<line x1="1791" y1="64.9" x2="1795.5" y2="64.9" stroke="#d000d0" stroke-width="1.5"/>
<text x="1797" y="67.4" fill="#ff00ff" font-size="8.3" text-anchor="start" textLength="13.4" lengthAdjust="spacingAndGlyphs" >30.1</text>
<line x1="1791" y1="68.2" x2="1793.5" y2="68.2" stroke="#d000d0" stroke-width="1"/>
<line x1="1791" y1="71.4" x2="1793.5" y2="71.4" stroke="#d000d0" stroke-width="1"/>
<line x1="1791" y1="74.7" x2="1793.5" y2="74.7" stroke="#d000d0" stroke-width="1"/>
<line x1="1791" y1="77.9" x2="1795.5" y2="77.9" stroke="#d000d0" stroke-width="1.5"/>
<text x="1797" y="80.4" fill="#ff00ff" font-size="8.3" text-anchor="start" textLength="18.7" lengthAdjust="spacingAndGlyphs" >30.05</text>
<line x1="1791" y1="81.2" x2="1793.5" y2="81.2" stroke="#d000d0" stroke-width="1"/>
<line x1="1791" y1="84.4" x2="1793.5" y2="84.4" stroke="#d000d0" stroke-width="1"/>
<line x1="1791" y1="87.7" x2="1793.5" y2="87.7" stroke="#d000d0" stroke-width="1"/>
<line x1="1791" y1="90.9" x2="1795.5" y2="90.9" stroke="#d000d0" stroke-width="1.5"/>
<text x="1797" y="93.4" fill="#ff00ff" font-size="8.3" text-anchor="start" textLength="8.1" lengthAdjust="spacingAndGlyphs" >30</text>
<line x1="1791" y1="94.2" x2="1793.5" y2="94.2" stroke="#d000d0" stroke-width="1"/>
<line x1="1791" y1="97.4" x2="1793.5" y2="97.4" stroke="#d000d0" stroke-width="1"/>
<line x1="1791" y1="100.7" x2="1793.5" y2="100.7" stroke="#d000d0" stroke-width="1"/>
<line x1="1791" y1="103.9" x2="1795.5" y2="103.9" stroke="#d000d0" stroke-width="1.5"/>
<text x="1797" y="106.4" fill="#ff00ff" font-size="8.3" text-anchor="start" textLength="18.7" lengthAdjust="spacingAndGlyphs" >29.95</text>
<line x1="1791" y1="107.2" x2="1793.5" y2="107.2" stroke="#d000d0" stroke-width="1"/>
<line x1="1791" y1="110.4" x2="1793.5" y2="110.4" stroke="#d000d0" stroke-width="1"/>
<line x1="1791" y1="113.7" x2="1793.5" y2="113.7" stroke="#d000d0" stroke-width="1"/>
<line x1="1791" y1="116.9" x2="1795.5" y2="116.9" stroke="#d000d0" stroke-width="1.5"/>
<text x="1797" y="119.4" fill="#ff00ff" font-size="8.3" text-anchor="start" textLength="14.4" lengthAdjust="spacingAndGlyphs" >29.9</text>
<line x1="1791" y1="120.2" x2="1793.5" y2="120.2" stroke="#d000d0" stroke-width="1"/>
<line x1="1791" y1="123.4" x2="1793.5" y2="123.4" stroke="#d000d0" stroke-width="1"/>
<line x1="1791" y1="126.7" x2="1793.5" y2="126.7" stroke="#d000d0" stroke-width="1"/>
<line x1="1791" y1="129.9" x2="1795.5" y2="129.9" stroke="#d000d0" stroke-width="1.5"/>
<text x="1797" y="132.4" fill="#ff00ff" font-size="8.3" text-anchor="start" textLength="18.7" lengthAdjust="spacingAndGlyphs" >29.85</text>
<line x1="1791" y1="133.2" x2="1793.5" y2="133.2" stroke="#d000d0" stroke-width="1"/>
<line x1="1791" y1="136.4" x2="1793.5" y2="136.4" stroke="#d000d0" stroke-width="1"/>
<line x1="1791" y1="139.7" x2="1793.5" y2="139.7" stroke="#d000d0" stroke-width="1"/>
<line x1="1791" y1="142.9" x2="1795.5" y2="142.9" stroke="#d000d0" stroke-width="1.5"/>
<text x="1797" y="145.4" fill="#ff00ff" font-size="8.3" text-anchor="start" textLength="14.4" lengthAdjust="spacingAndGlyphs" >29.8</text>
<line x1="1791" y1="146.2" x2="1793.5" y2="146.2" stroke="#d000d0" stroke-width="1"/>
<line x1="1791" y1="149.4" x2="1793.5" y2="149.4" stroke="#d000d0" stroke-width="1"/>
<line x1="1791" y1="152.7" x2="1793.5" y2="152.7" stroke="#d000d0" stroke-width="1"/>
<line x1="1791" y1="155.9" x2="1795.5" y2="155.9" stroke="#d000d0" stroke-width="1.5"/>
<text x="1797" y="158.4" fill="#ff00ff" font-size="8.3" text-anchor="start" textLength="18.7" lengthAdjust="spacingAndGlyphs" >29.75</text>
<line x1="1791" y1="159.2" x2="1793.5" y2="159.2" stroke="#d000d0" stroke-width="1"/>
<line x1="1791" y1="162.4" x2="1793.5" y2="162.4" stroke="#d000d0" stroke-width="1"/>
<line x1="1791" y1="165.7" x2="1793.5" y2="165.7" stroke="#d000d0" stroke-width="1"/>
<line x1="1791" y1="168.9" x2="1795.5" y2="168.9" stroke="#d000d0" stroke-width="1.5"/>
<text x="1797" y="171.4" fill="#ff00ff" font-size="8.3" text-anchor="start" textLength="14.4" lengthAdjust="spacingAndGlyphs" >29.7</text>
<line x1="1791" y1="172.2" x2="1793.5" y2="172.2" stroke="#d000d0" stroke-width="1"/>
<line x1="1791" y1="175.4" x2="1793.5" y2="175.4" stroke="#d000d0" stroke-width="1"/>
<line x1="1791" y1="178.7" x2="1793.5" y2="178.7" stroke="#d000d0" stroke-width="1"/>
<line x1="1791" y1="181.9" x2="1795.5" y2="181.9" stroke="#d000d0" stroke-width="1.5"/>
<text x="1797" y="184.4" fill="#ff00ff" font-size="8.3" text-anchor="start" textLength="18.7" lengthAdjust="spacingAndGlyphs" >29.65</text>
<line x1="1791" y1="185.2" x2="1793.5" y2="185.2" stroke="#d000d0" stroke-width="1"/>
<line x1="1791" y1="188.4" x2="1793.5" y2="188.4" stroke="#d000d0" stroke-width="1"/>
<line x1="1791" y1="191.7" x2="1793.5" y2="191.7" stroke="#d000d0" stroke-width="1"/>
<line x1="1791" y1="194.9" x2="1795.5" y2="194.9" stroke="#d000d0" stroke-width="1.5"/>
<text x="1797" y="197.4" fill="#ff00ff" font-size="8.3" text-anchor="start" textLength="14.4" lengthAdjust="spacingAndGlyphs" >29.6</text>
<line x1="1791" y1="198.2" x2="1793.5" y2="198.2" stroke="#d000d0" stroke-width="1"/>
<line x1="1791" y1="201.4" x2="1793.5" y2="201.4" stroke="#d000d0" stroke-width="1"/>
<line x1="1791" y1="204.7" x2="1793.5" y2="204.7" stroke="#d000d0" stroke-width="1"/>
<line x1="1791" y1="207.9" x2="1795.5" y2="207.9" stroke="#d000d0" stroke-width="1.5"/>
<text x="1797" y="210.4" fill="#ff00ff" font-size="8.3" text-anchor="start" textLength="18.7" lengthAdjust="spacingAndGlyphs" >29.55</text>
<line x1="1791" y1="211.2" x2="1793.5" y2="211.2" stroke="#d000d0" stroke-width="1"/>
<line x1="1791" y1="214.4" x2="1793.5" y2="214.4" stroke="#d000d0" stroke-width="1"/>
<line x1="1791" y1="217.7" x2="1793.5" y2="217.7" stroke="#d000d0" stroke-width="1"/>
<line x1="1791" y1="220.9" x2="1795.5" y2="220.9" stroke="#d000d0" stroke-width="1.5"/>
<text x="1797" y="223.4" fill="#ff00ff" font-size="8.3" text-anchor="start" textLength="14.4" lengthAdjust="spacingAndGlyphs" >29.5</text>
<line x1="1791" y1="224.2" x2="1793.5" y2="224.2" stroke="#d000d0" stroke-width="1"/>
<line x1="1791" y1="227.4" x2="1793.5" y2="227.4" stroke="#d000d0" stroke-width="1"/>
<line x1="1791" y1="230.7" x2="1793.5" y2="230.7" stroke="#d000d0" stroke-width="1"/>
<line x1="1791" y1="233.9" x2="1795.5" y2="233.9" stroke="#d000d0" stroke-width="1.5"/>
<text x="1797" y="236.4" fill="#ff00ff" font-size="8.3" text-anchor="start" textLength="18.7" lengthAdjust="spacingAndGlyphs" >29.45</text>
<line x1="1791" y1="237.2" x2="1793.5" y2="237.2" stroke="#d000d0" stroke-width="1"/>
<line x1="1791" y1="240.4" x2="1793.5" y2="240.4" stroke="#d000d0" stroke-width="1"/>
<line x1="1791" y1="243.7" x2="1793.5" y2="243.7" stroke="#d000d0" stroke-width="1"/>
<line x1="1791" y1="246.9" x2="1795.5" y2="246.9" stroke="#d000d0" stroke-width="1.5"/>
<text x="1797" y="249.4" fill="#ff00ff" font-size="8.3" text-anchor="start" textLength="14.4" lengthAdjust="spacingAndGlyphs" >29.4</text>
<line x1="1791" y1="250.2" x2="1793.5" y2="250.2" stroke="#d000d0" stroke-width="1"/>
<line x1="1791" y1="253.4" x2="1793.5" y2="253.4" stroke="#d000d0" stroke-width="1"/>
<line x1="1791" y1="256.6" x2="1793.5" y2="256.6" stroke="#d000d0" stroke-width="1"/>
<line x1="1791" y1="259.9" x2="1795.5" y2="259.9" stroke="#d000d0" stroke-width="1.5"/>
<text x="1797" y="262.4" fill="#ff00ff" font-size="8.3" text-anchor="start" textLength="18.7" lengthAdjust="spacingAndGlyphs" >29.35</text>
<line x1="1791" y1="263.1" x2="1793.5" y2="263.1" stroke="#d000d0" stroke-width="1"/>
<line x1="1791" y1="266.4" x2="1793.5" y2="266.4" stroke="#d000d0" stroke-width="1"/>
<line x1="1791" y1="269.6" x2="1793.5" y2="269.6" stroke="#d000d0" stroke-width="1"/>
<line x1="1791" y1="272.9" x2="1795.5" y2="272.9" stroke="#d000d0" stroke-width="1.5"/>
<text x="1797" y="275.4" fill="#ff00ff" font-size="8.3" text-anchor="start" textLength="14.4" lengthAdjust="spacingAndGlyphs" >29.3</text>
<line x1="1791" y1="276.1" x2="1793.5" y2="276.1" stroke="#d000d0" stroke-width="1"/>
<line x1="1791" y1="279.4" x2="1793.5" y2="279.4" stroke="#d000d0" stroke-width="1"/>
<line x1="1791" y1="282.6" x2="1793.5" y2="282.6" stroke="#d000d0" stroke-width="1"/>
<line x1="1791" y1="285.9" x2="1795.5" y2="285.9" stroke="#d000d0" stroke-width="1.5"/>
<text x="1797" y="288.4" fill="#ff00ff" font-size="8.3" text-anchor="start" textLength="18.7" lengthAdjust="spacingAndGlyphs" >29.25</text>
<line x1="1791" y1="289.1" x2="1793.5" y2="289.1" stroke="#d000d0" stroke-width="1"/>
<line x1="1791" y1="292.4" x2="1793.5" y2="292.4" stroke="#d000d0" stroke-width="1"/>
<line x1="1791" y1="295.6" x2="1793.5" y2="295.6" stroke="#d000d0" stroke-width="1"/>
<line x1="1791" y1="298.9" x2="1795.5" y2="298.9" stroke="#d000d0" stroke-width="1.5"/>
<text x="1797" y="301.4" fill="#ff00ff" font-size="8.3" text-anchor="start" textLength="14.4" lengthAdjust="spacingAndGlyphs" >29.2</text>
<line x1="1791" y1="302.1" x2="1793.5" y2="302.1" stroke="#d000d0" stroke-width="1"/>
<line x1="1791" y1="305.4" x2="1793.5" y2="305.4" stroke="#d000d0" stroke-width="1"/>
<line x1="1791" y1="308.6" x2="1793.5" y2="308.6" stroke="#d000d0" stroke-width="1"/>
<line x1="1791" y1="311.9" x2="1795.5" y2="311.9" stroke="#d000d0" stroke-width="1.5"/>
<text x="1797" y="314.4" fill="#ff00ff" font-size="8.3" text-anchor="start" textLength="17.7" lengthAdjust="spacingAndGlyphs" >29.15</text>
<line x1="1791" y1="315.1" x2="1793.5" y2="315.1" stroke="#d000d0" stroke-width="1"/>
<line x1="1791" y1="318.4" x2="1793.5" y2="318.4" stroke="#d000d0" stroke-width="1"/>
<line x1="1791" y1="321.6" x2="1793.5" y2="321.6" stroke="#d000d0" stroke-width="1"/>
<line x1="1791" y1="324.9" x2="1795.5" y2="324.9" stroke="#d000d0" stroke-width="1.5"/>
<text x="1797" y="327.4" fill="#ff00ff" font-size="8.3" text-anchor="start" textLength="13.4" lengthAdjust="spacingAndGlyphs" >29.1</text>
<line x1="1791" y1="328.1" x2="1793.5" y2="328.1" stroke="#d000d0" stroke-width="1"/>
<line x1="1791" y1="331.4" x2="1793.5" y2="331.4" stroke="#d000d0" stroke-width="1"/>
<line x1="1791" y1="334.6" x2="1793.5" y2="334.6" stroke="#d000d0" stroke-width="1"/>
<line x1="1791" y1="337.9" x2="1795.5" y2="337.9" stroke="#d000d0" stroke-width="1.5"/>
<text x="1797" y="340.4" fill="#ff00ff" font-size="8.3" text-anchor="start" textLength="18.7" lengthAdjust="spacingAndGlyphs" >29.05</text>
<line x1="1791" y1="341.1" x2="1793.5" y2="341.1" stroke="#d000d0" stroke-width="1"/>
<line x1="1791" y1="344.4" x2="1793.5" y2="344.4" stroke="#d000d0" stroke-width="1"/>
<line x1="1791" y1="347.6" x2="1793.5" y2="347.6" stroke="#d000d0" stroke-width="1"/>
<line x1="1791" y1="350.9" x2="1795.5" y2="350.9" stroke="#d000d0" stroke-width="1.5"/>
<text x="1797" y="353.4" fill="#ff00ff" font-size="8.3" text-anchor="start" textLength="8.1" lengthAdjust="spacingAndGlyphs" >29</text>
<line x1="1791" y1="354.1" x2="1793.5" y2="354.1" stroke="#d000d0" stroke-width="1"/>
<line x1="1791" y1="357.4" x2="1793.5" y2="357.4" stroke="#d000d0" stroke-width="1"/>
<line x1="1791" y1="360.6" x2="1793.5" y2="360.6" stroke="#d000d0" stroke-width="1"/>
<line x1="1791" y1="363.9" x2="1795.5" y2="363.9" stroke="#d000d0" stroke-width="1.5"/>
<text x="1797" y="366.4" fill="#ff00ff" font-size="8.3" text-anchor="start" textLength="18.7" lengthAdjust="spacingAndGlyphs" >28.95</text>
<line x1="1791" y1="367.1" x2="1793.5" y2="367.1" stroke="#d000d0" stroke-width="1"/>
<line x1="1791" y1="370.4" x2="1793.5" y2="370.4" stroke="#d000d0" stroke-width="1"/>
<line x1="1791" y1="373.6" x2="1793.5" y2="373.6" stroke="#d000d0" stroke-width="1"/>
<line x1="1791" y1="376.9" x2="1795.5" y2="376.9" stroke="#d000d0" stroke-width="1.5"/>
<text x="1797" y="379.4" fill="#ff00ff" font-size="8.3" text-anchor="start" textLength="14.4" lengthAdjust="spacingAndGlyphs" >28.9</text>
<line x1="1791" y1="380.1" x2="1793.5" y2="380.1" stroke="#d000d0" stroke-width="1"/>
<line x1="1791" y1="383.4" x2="1793.5" y2="383.4" stroke="#d000d0" stroke-width="1"/>
<line x1="1791" y1="386.6" x2="1793.5" y2="386.6" stroke="#d000d0" stroke-width="1"/>
<line x1="1791" y1="389.9" x2="1795.5" y2="389.9" stroke="#d000d0" stroke-width="1.5"/>
<text x="1797" y="392.4" fill="#ff00ff" font-size="8.3" text-anchor="start" textLength="18.7" lengthAdjust="spacingAndGlyphs" >28.85</text>
<line x1="1791" y1="393.1" x2="1793.5" y2="393.1" stroke="#d000d0" stroke-width="1"/>
<line x1="1791" y1="396.4" x2="1793.5" y2="396.4" stroke="#d000d0" stroke-width="1"/>
<line x1="1791" y1="399.6" x2="1793.5" y2="399.6" stroke="#d000d0" stroke-width="1"/>
<line x1="1791" y1="402.9" x2="1795.5" y2="402.9" stroke="#d000d0" stroke-width="1.5"/>
<text x="1797" y="405.4" fill="#ff00ff" font-size="8.3" text-anchor="start" textLength="14.4" lengthAdjust="spacingAndGlyphs" >28.8</text>
<line x1="1791" y1="406.1" x2="1793.5" y2="406.1" stroke="#d000d0" stroke-width="1"/>
<line x1="1791" y1="409.4" x2="1793.5" y2="409.4" stroke="#d000d0" stroke-width="1"/>
<rect x="125" y="434" width="1682" height="121" fill="url(#g2)"/>
<line x1="127" y1="525.5" x2="1807" y2="525.5" stroke="#e0e0e0" stroke-opacity="0.32" stroke-width="1" stroke-dasharray="1 1"/>
<line x1="127" y1="495.5" x2="1807" y2="495.5" stroke="#e0e0e0" stroke-opacity="0.32" stroke-width="1" stroke-dasharray="1 1"/>
<line x1="127" y1="466.5" x2="1807" y2="466.5" stroke="#e0e0e0" stroke-opacity="0.32" stroke-width="1" stroke-dasharray="1 1"/>
<rect x="125" y="434" width="1682" height="1" fill="#e0dada"/>
<path d="M127 538.3 L128.2 529.8 L129.3 529.8 L130.5 530.2 L131.7 539.2 L132.8 531 L134 528.7 L135.2 522.4 L136.3 531.2 L137.5 529.4 L138.6 534.2 L139.8 535.6 L141 526.2 L142.1 534.6 L143.3 536.2 L144.5 535.5 L145.6 535.7 L146.8 536.1 L148 536.7 L149.1 537.8 L150.3 532.8 L151.5 532.4 L152.6 532.8 L153.8 539.3 L155 540 L156.1 540.4 L157.3 540.2 L158.5 531.5 L159.6 529.9 L160.8 529.6 L161.9 535.3 L163.1 535.2 L164.3 536.4 L165.4 537 L166.6 536.3 L167.8 536.1 L168.9 531.1 L170.1 531 L171.3 540.4 L172.4 532.9 L173.6 527.6 L174.8 528 L175.9 522.5 L177.1 533.8 L178.3 537.1 L179.4 535.7 L180.6 530.3 L181.8 531 L182.9 530.7 L184.1 530.3 L185.2 524.7 L186.4 540.2 L187.6 540.9 L188.7 527.5 L189.9 526.7 L191.1 539 L192.2 537.9 L193.4 535.4 L194.6 534.2 L195.7 529.1 L196.9 539.1 L198.1 538.2 L199.2 533 L200.4 541.1 L201.6 532.8 L202.7 532 L203.9 532.4 L204.9 533 L205.1 544.6 L205.7 500.6 L206.2 531.5 L206.5 535 L207.4 531.1 L208.5 531.4 L209.7 529.7 L210.9 528.3 L212 532.8 L213.2 533.7 L214.4 533.3 L215.5 534 L216.7 543.8 L217.9 533.3 L219 525.6 L220.2 534.5 L221.4 524.8 L222.5 524.5 L223.7 531.2 L224.9 532.1 L226 528.7 L227.2 540.7 L228.4 527.1 L229.5 528.1 L230.7 539.4 L231.8 535.5 L233 529.5 L234.2 537.8 L235.3 539.3 L236.5 530.2 L237.7 536.4 L238.8 535.6 L240 535.9 L241.2 536.9 L242.3 542.6 L243.5 543.1 L244.7 534 L245.8 539.6 L247 531.8 L248.2 521 L249.3 528.4 L250.5 528.4 L251.7 523.3 L252.8 541 L254 530.3 L255.1 524.2 L256.3 535.3 L257.5 535.4 L258.6 535.1 L259.8 539.4 L261 534.7 L262.1 533.5 L263.3 530.1 L264.5 531.3 L265.6 532.7 L266.8 531.6 L268 533.8 L269.1 525.3 L270.3 541.5 L271.5 537.6 L272.6 537.6 L273.8 533.3 L275 522 L276.1 533.8 L277.3 529.2 L278.4 530.4 L279.6 530 L280.8 540.2 L281.9 541.7 L283.1 534.8 L284.3 534.1 L285.4 535.3 L286.6 526.3 L287.8 537.1 L288.9 538.6 L290.1 526.2 L291.3 526 L292.4 527.5 L293.6 531.5 L294.2 533 L294.8 533.2 L295 520 L295.8 535 L295.9 533.5 L297.1 523.7 L298.3 526.2 L299.4 528.9 L300.6 534.4 L301.7 528.3 L302.9 538.6 L304.1 539 L305.2 540 L306.4 529.7 L307.6 538.9 L308.7 529.5 L309.9 528.7 L311.1 538.9 L312.2 526.4 L313.4 526.1 L314.6 527.5 L315.7 525.9 L316.9 530.2 L318.1 531.3 L319.2 535.2 L320.4 535 L321.6 531.5 L322.7 532.3 L323.9 533.8 L325.1 532.5 L326.2 543.7 L327.4 525.4 L328.5 526.5 L329.7 541.9 L330.9 530.5 L332 524.4 L333.2 521 L334.4 532.7 L335.5 535.4 L336.7 536.3 L337.9 528 L339 536.4 L340.2 530.1 L341.4 531.3 L342.5 531.5 L343.7 535.3 L344.9 536.6 L346 532.5 L347.2 528.9 L348.4 538.4 L349.5 530.6 L350.7 521 L351.8 538.8 L353 544.4 L354.2 529.9 L355.3 528.6 L356.5 529.9 L357.2 533 L357.7 531.6 L358 507 L358.8 535 L358.8 530.8 L360 529.7 L361.2 528.4 L362.3 539.9 L363.5 532.9 L364.7 533.3 L365.8 532.8 L367 532.2 L368.2 532.4 L369.3 532.4 L370.5 534.2 L371.7 529.5 L372.8 540.1 L374 537.3 L375.1 521.5 L376.3 541.4 L377.5 540.9 L378.6 530.6 L379.8 538.7 L381 533.6 L382.1 533.7 L383.3 534 L384.5 529.4 L385.6 537.2 L386.8 542.7 L388 546.9 L389.1 547.3 L390.3 531.5 L391.5 533.2 L392.6 524.1 L393.8 530.1 L395 528.3 L396.1 528.5 L397.3 529.4 L398.4 532.1 L399.6 532.5 L400.8 547 L401.9 531.2 L403.1 531.3 L404.3 532.1 L405.4 532.4 L406.6 542.9 L407.8 526 L408.9 527.5 L410.1 532 L411.3 535.6 L412.4 529.8 L413.6 529.8 L414.8 535.7 L415.9 536.1 L417.1 537.1 L418.3 530.4 L419.4 530.1 L420.6 528 L421.7 526.4 L422.9 525 L424.1 523.1 L425.2 522.6 L426.4 528.7 L427.6 535.2 L428.7 543.5 L429.9 531.8 L431.1 534.8 L432.2 534.2 L433.4 532.7 L434.6 521 L435.7 521 L436.9 537 L438.1 537.8 L439.2 531.9 L440.4 542.9 L441.6 536 L442.7 542 L443.9 543.8 L445 540.7 L446.2 540.1 L447.4 543.8 L448.5 533.1 L449.7 526.3 L450.9 527.4 L452 526.1 L453.2 539.3 L454.4 539.7 L455.5 538.6 L456.7 528.1 L457.9 529.9 L459 531.1 L460.2 529.9 L461.4 523.8 L462.5 532.6 L463.7 532.7 L464.9 532.9 L466 540.4 L467.2 532.7 L468.3 547.1 L469.5 540.4 L470.7 533.4 L471.8 535.3 L473 534.6 L474.2 533.6 L475.3 534.8 L476.5 532.4 L477.7 532.3 L478.8 531.8 L480 538.3 L481.2 532.9 L482.3 528.3 L483.5 530.5 L484.7 535.3 L485.8 537.2 L487 521 L488.2 521 L489.3 529.6 L490.5 523.9 L491.6 531.7 L492.8 530.8 L494 531.5 L495.1 524.5 L496.3 529.7 L497.5 525.4 L498.6 535.2 L499.8 527.6 L501 534 L502.1 537.8 L503.3 523.5 L504.5 548.1 L505.6 548.5 L506.8 539.4 L508 540.3 L509.1 542.1 L510.3 543.1 L511.5 528.3 L512.6 526.4 L513.8 528.8 L514.9 529.6 L516.1 534 L517.3 536.5 L518.4 538.1 L519.6 539.4 L520.8 540.2 L521.9 537.5 L523.1 530.2 L524.3 527.5 L525.4 535.7 L526.6 527.2 L527.8 539.6 L528.9 530.5 L530.1 530.3 L531.3 530.7 L532.4 528.9 L533.6 529 L534.8 527.8 L535.9 528.5 L537.1 525.9 L538.2 532.9 L539.4 532.1 L540.6 540.6 L541.7 521 L542.9 521 L544.1 529.3 L545.2 530.4 L546.4 531.8 L547.6 532.6 L548.7 533.1 L549.9 531.8 L551.1 534.2 L552.2 525.6 L553.4 524.8 L554.6 536.4 L555.7 536.8 L556.9 537.7 L558.1 536.8 L559.2 526.7 L560.4 526.5 L561.5 521 L562.7 540.2 L563.9 539 L565 537.8 L566.2 521 L567.4 521 L568.5 540.6 L569.7 541.4 L570.9 540.6 L572 540.7 L573.2 531.5 L574.4 538.2 L575.5 542.8 L576.7 539.2 L577.9 539.2 L579 534.4 L579.2 533 L580 518.7 L580.2 539.5 L580.8 535 L581.4 539 L582.5 523.5 L583.7 529.9 L584.8 529.6 L586 530 L587.2 539.2 L588.3 539.4 L589.5 548.8 L590.7 548.5 L591.8 531.2 L593 538.7 L594.2 531.4 L595.3 537.2 L596.5 528 L597.7 527.2 L598.8 531.7 L600 527.8 L601.2 529.1 L602.3 525.1 L603.5 530.6 L604.7 524.5 L605.8 523.2 L607 533.7 L608.1 533.5 L609.3 532.7 L610.5 531.6 L611.6 525 L612.8 524.1 L614 525.1 L615.1 524.1 L616.3 538.4 L617.5 532 L618.6 533 L619.8 535.2 L621 536.6 L622.1 535.4 L623.3 536.2 L624.5 526 L625.6 529.1 L626.8 527.7 L628 528.7 L629.1 533.9 L630.3 522.3 L631.4 538.5 L632.6 537.5 L633.8 533.6 L634.9 521 L636.1 532 L637.3 532.2 L638.4 533.5 L639.6 527.9 L640.8 529.4 L641.9 535.8 L643.1 537.1 L644.3 534.1 L645.4 533.6 L646.6 536.2 L647.8 535.8 L648.9 535.2 L650.1 537.8 L651.2 537.8 L652.4 538.6 L653.6 534.9 L654.7 534.4 L655.9 531.8 L657.1 534.2 L658.2 536.7 L659.4 536.7 L660.6 536.9 L661.7 535.4 L662.9 534.4 L664.1 530.5 L665.2 530 L666.4 531.4 L667.6 532.4 L668.7 535.8 L669.9 527.6 L671.1 526.6 L672.2 534.6 L673.4 533.2 L674.5 528.5 L675.7 535.7 L676.9 537.9 L678 535.5 L679.2 532.2 L680.4 532.7 L681.5 531.7 L682.7 532.9 L683.9 531.8 L685 532 L686.2 534.6 L687.4 534.8 L688.5 534.1 L689.7 532.1 L690.9 537.2 L692 532.4 L693.2 531.2 L694.4 529.8 L695.5 528.8 L696.7 534.4 L697.8 533.4 L699 538.4 L700.2 528.8 L701.3 529 L702.5 529.5 L703.7 528.7 L704.8 535.2 L706 535.7 L707.2 535.2 L708.3 534.3 L709.5 527.3 L710.7 526.7 L711.8 527.5 L713 534.2 L714.2 535.7 L715.3 538.9 L716.5 538.9 L717.7 539.8 L718.8 534.2 L720 535.5 L721.1 532.7 L722.3 533.8 L723.5 533.9 L724.6 531.8 L725.8 532.1 L727 533.2 L728.1 532.8 L729.3 527.7 L730.5 525.6 L731.6 527.2 L732.8 533.3 L734 533.9 L735.1 536.6 L736.3 534.2 L737.5 534.7 L738.6 535.9 L739.8 527.4 L741 532.5 L742.1 532.1 L743.3 532.1 L744.4 533 L745.6 533.3 L746.8 526.4 L747.9 526 L749.1 529.4 L750.3 529.9 L751.4 528.9 L752.6 528.8 L753.8 535.3 L754.9 532.2 L756.1 529.2 L757.3 526.7 L758.4 531.6 L759.6 537.4 L760.8 529.5 L761.9 528.5 L763.1 533.5 L764.3 533.2 L765.4 536 L766.6 533.6 L767.7 534.8 L768.9 530.5 L770.1 530.9 L771.2 532.4 L772.4 530.6 L773.6 529.7 L774.7 535 L775.9 539.4 L777.1 527.2 L778.2 537.3 L779.4 528.8 L780.6 536.3 L781.7 537.4 L782.9 536.6 L784.1 532.3 L785.2 532.6 L786.4 527.9 L787.6 533.1 L788.7 533.9 L789.9 533.6 L791 528 L792.2 532.7 L793.4 535.8 L794.5 529.9 L795.7 525.6 L796.9 526.1 L798 532.8 L799.2 532.4 L800.4 535.4 L801.5 535.3 L802.7 535.7 L803.9 536.8 L805 532.6 L806.2 533 L807.4 532.1 L808.5 521.2 L809.7 521.4 L810.9 532.4 L812 533.3 L813.2 533.4 L814.3 538.8 L815.5 540.2 L816.7 523.8 L817.8 533.4 L819 530.1 L820.2 538.8 L821.3 538.8 L822.5 534.9 L823.7 534.3 L824.8 538.9 L826 536.8 L827.2 530.5 L828.3 529.7 L829.5 530.8 L830.7 537 L831.8 536.1 L833 531.5 L834.2 530.4 L835.3 538.5 L836.5 539.7 L837.6 529.5 L838.8 530.7 L840 530 L841.1 533 L842.3 535 L843.5 534.7 L844.6 530.1 L845.8 535.5 L847 535.3 L848.1 535.4 L849.3 526.8 L850.5 530.4 L851.6 531.1 L852.8 534.1 L854 531.9 L855.1 535.7 L856.3 528.4 L857.5 527.4 L858.6 532.9 L859.8 531.3 L860.9 534.6 L862.1 526.7 L863.3 529.5 L864.4 538.8 L865.6 539.5 L866.8 535.5 L867.9 536.1 L869.1 531.8 L870.3 530.3 L871.4 533.3 L872.6 534 L873.8 536.6 L874.9 534.1 L876.1 535.1 L877.3 534 L878.4 532.6 L879.6 531.6 L880.8 530.9 L881.9 534.9 L883.1 527.6 L884.2 537.8 L885.4 529.8 L886.6 530.5 L887.7 531.8 L888.9 536 L890.1 533.7 L891.2 533.4 L892.4 534.7 L893.6 534.6 L894.7 529.2 L895.9 534.3 L897.1 532.3 L898.2 532.5 L899.4 530.2 L900.6 533.3 L901.7 530.6 L902.9 532.5 L904.1 531.2 L905.2 542 L906.4 533.4 L907.5 535.1 L908.7 534.7 L909.9 532.8 L911 532.5 L912.2 534.5 L913.4 529.5 L914.5 529.1 L915.7 526.9 L916.9 532.9 L918 537.9 L919.2 539.9 L920.4 531.7 L921.5 532 L922.7 531 L923.9 539.4 L925 540.3 L926.2 536.4 L927.4 533.3 L928.5 530.7 L929.7 531.3 L930.8 532 L932 538.7 L933.2 538.3 L934.3 535.5 L935.5 528.8 L936.7 528.5 L937.8 531.3 L939 532 L940.2 534.3 L941.3 532.3 L942.5 533.4 L943.7 529.3 L944.8 538.6 L946 531.6 L947.2 533.1 L948.3 540.4 L949.5 527.4 L950.7 533 L951.8 536.4 L953 535.1 L954.1 536 L955.3 532.1 L956.5 532.7 L957.6 531 L958.8 534.1 L960 534.3 L961.1 539.1 L962.3 534.1 L963.5 534.9 L964.6 535.1 L965.8 534.9 L967 530.6 L968.1 533.9 L969.3 533 L970.5 525.7 L971.6 538.7 L972.8 537 L974 526.1 L975.1 529.7 L976.3 533.3 L977.4 528.6 L978.6 535.4 L979.8 537.3 L980.9 532.2 L982.1 529.3 L983.3 535.9 L984.4 535.7 L985.6 535.2 L986.8 535.4 L987.9 526.2 L989.1 526.9 L990.3 533.3 L991.4 531.8 L992.6 540.4 L993.8 541 L994.9 529.9 L996.1 530.1 L997.3 532.2 L998.4 533.5 L999.6 538.5 L1000.7 531.9 L1001.9 530.8 L1003.1 531.4 L1004.2 531.6 L1005.4 529.4 L1006.6 528 L1007.7 536.3 L1008.9 536.5 L1010.1 533.8 L1011.2 530.1 L1012.4 531 L1013.6 531.2 L1014.7 533.4 L1015.9 534.5 L1017.1 534 L1018.2 536.6 L1019.4 536.3 L1020.6 536.3 L1021.7 532.7 L1022.9 531.9 L1024 534 L1025.2 533.5 L1026.4 533.4 L1027.5 532.9 L1028.7 533.3 L1029.9 533.9 L1031 533.9 L1032.2 533.6 L1033.4 535.8 L1034.5 536.6 L1035.7 531.6 L1036.9 530.1 L1038 530.8 L1039.2 536.5 L1040.4 537 L1041.5 537.3 L1042.7 536.6 L1043.9 537.4 L1045 535.3 L1046.2 534.3 L1047.3 533.4 L1048.5 529.7 L1049.7 533.6 L1050.8 531 L1052 531.1 L1053.2 536.8 L1054.3 530.3 L1055.5 531.1 L1056.7 530.6 L1057.8 529.6 L1059 530.6 L1060.2 536.5 L1061.3 534.1 L1062.5 533.5 L1063.7 532.1 L1064.8 533.2 L1066 538.4 L1067.2 533.6 L1068.3 529.7 L1069.5 530.4 L1070.6 532.4 L1071.8 533.8 L1073 530.5 L1074.1 535.9 L1075.3 535.6 L1076.5 538.1 L1077.6 537 L1078.8 535.6 L1080 530.8 L1081.1 529.5 L1082.3 529.2 L1083.5 529.9 L1084.6 529.7 L1085.8 528.4 L1087 532.4 L1088.1 529.6 L1089.3 535.3 L1090.5 531.7 L1091.6 531.4 L1092.8 536.4 L1093.9 539.4 L1095.1 530.9 L1096.3 530.6 L1097.4 533.5 L1098.6 532.6 L1099.8 531.3 L1100.9 535.9 L1102.1 534.7 L1103.3 531.9 L1104.4 530.5 L1105.6 531.2 L1106.8 534.7 L1107.9 535 L1109.1 534.4 L1110.3 535.7 L1111.4 533.6 L1112.6 531.6 L1113.8 532.6 L1114.9 532 L1116.1 534.1 L1117.2 534.2 L1118.4 532.2 L1119.6 536.4 L1120 536 L1250 536 L1252 533.2 L1397 533.2 L1400 527.5 L1404 527.5 L1407 533 L1411 533 L1413 527.5 L1417 527.5 L1420 548 L1536 548 L1538 540 L1676 540 L1680 546 L1692 546 L1693 440 L1698 443 L1700 552 L1703 540 L1705 534.1 L1706.2 538.1 L1707.3 528.6 L1708.5 534.8 L1709.7 530.6 L1710.8 535.4 L1712 531.1 L1713.2 534.8 L1714.3 533.1 L1715.5 530.2 L1716.6 535.7 L1717.8 532.1 L1719 537.4 L1720.1 531.1 L1721.3 533.2 L1722.5 528.6 L1723.6 531.4 L1724.8 529.2 L1726 535.6 L1727.1 540.8 L1728.3 528.9 L1729.5 531.7 L1730.6 533.6 L1731.8 534.1 L1733 535.9 L1734.1 530.2 L1735.3 534 L1736.5 532.3 L1737.6 534.2 L1738.8 528.4 L1739.9 532.7 L1741.1 534.2 L1742.3 538.4 L1743.4 542.2 L1744.6 533 L1745.8 532 L1746.9 534 L1748.1 531.8 L1749.3 533.6 L1750.4 528.3 L1751.6 532.4 L1752.8 532.3 L1753.9 534.7 L1755.1 528.5 L1756.3 533.6 L1757.4 539.6 L1758.6 530.7 L1759.8 537.9 L1760.9 538.3 L1762.1 531.8 L1763.2 531.7 L1764.4 531.7 L1765.6 539.9 L1766.7 538.7 L1767.9 535.6 L1769.1 530 L1770.2 533.5 L1771.4 527.4 L1772.6 532.7 L1773.7 536.3 L1774.9 525 L1776.1 529.2 L1777.2 528.2 L1778.4 538.7 L1779.6 534.2 L1780.7 533.8 L1781.9 527.1 L1783.1 535.4 L1784.2 535.9 L1785.4 526.7 L1786.5 538.4 L1787.7 532.5 L1788.9 534.1 L1790 536.7 L1791.2 528.4 L1792.4 529.4 L1793.5 528 L1794.7 537.4 L1795.9 533.4 L1797 532.3 L1798.2 528.7 L1799.4 534.9 L1800.5 530.3 L1801.7 540.6 L1802.9 531.8 L1804 531.8 L1805.2 536.3" fill="none" stroke="#f0f000" stroke-width="1.4" stroke-linejoin="round" clip-path="url(#cDir)"/>
<rect x="125" y="555" width="1682" height="2" fill="#c8c8c8"/>
<rect x="125" y="434" width="2" height="123" fill="#f0f0f0"/>
<text x="116.5" y="557.5" fill="#ffff00" font-size="8.3" text-anchor="end" textLength="3.8" lengthAdjust="spacingAndGlyphs" >0</text>
<line x1="118" y1="554.5" x2="125" y2="554.5" stroke="#d0d000" stroke-width="1"/>
<text x="116.5" y="528" fill="#ffff00" font-size="8.3" text-anchor="end" textLength="8.1" lengthAdjust="spacingAndGlyphs" >90</text>
<line x1="118" y1="525" x2="125" y2="525" stroke="#d0d000" stroke-width="1"/>
<text x="116.5" y="498.6" fill="#ffff00" font-size="8.3" text-anchor="end" textLength="11.4" lengthAdjust="spacingAndGlyphs" >180</text>
<line x1="118" y1="495.6" x2="125" y2="495.6" stroke="#d0d000" stroke-width="1"/>
<text x="116.5" y="469.1" fill="#ffff00" font-size="8.3" text-anchor="end" textLength="12.4" lengthAdjust="spacingAndGlyphs" >270</text>
<line x1="118" y1="466.1" x2="125" y2="466.1" stroke="#d0d000" stroke-width="1"/>
<text x="116.5" y="439.7" fill="#ffff00" font-size="8.3" text-anchor="end" textLength="12.4" lengthAdjust="spacingAndGlyphs" >360</text>
<line x1="118" y1="436.7" x2="125" y2="436.7" stroke="#d0d000" stroke-width="1"/>
<line x1="121" y1="549.6" x2="125" y2="549.6" stroke="#b0b000" stroke-width="1"/>
<line x1="121" y1="544.7" x2="125" y2="544.7" stroke="#b0b000" stroke-width="1"/>
<line x1="121" y1="539.8" x2="125" y2="539.8" stroke="#b0b000" stroke-width="1"/>
<line x1="121" y1="534.9" x2="125" y2="534.9" stroke="#b0b000" stroke-width="1"/>
<line x1="121" y1="530" x2="125" y2="530" stroke="#b0b000" stroke-width="1"/>
<line x1="121" y1="520.1" x2="125" y2="520.1" stroke="#b0b000" stroke-width="1"/>
<line x1="121" y1="515.2" x2="125" y2="515.2" stroke="#b0b000" stroke-width="1"/>
<line x1="121" y1="510.3" x2="125" y2="510.3" stroke="#b0b000" stroke-width="1"/>
<line x1="121" y1="505.4" x2="125" y2="505.4" stroke="#b0b000" stroke-width="1"/>
<line x1="121" y1="500.5" x2="125" y2="500.5" stroke="#b0b000" stroke-width="1"/>
<line x1="121" y1="490.7" x2="125" y2="490.7" stroke="#b0b000" stroke-width="1"/>
<line x1="121" y1="485.8" x2="125" y2="485.8" stroke="#b0b000" stroke-width="1"/>
<line x1="121" y1="480.9" x2="125" y2="480.9" stroke="#b0b000" stroke-width="1"/>
<line x1="121" y1="476" x2="125" y2="476" stroke="#b0b000" stroke-width="1"/>
<line x1="121" y1="471.1" x2="125" y2="471.1" stroke="#b0b000" stroke-width="1"/>
<line x1="121" y1="461.2" x2="125" y2="461.2" stroke="#b0b000" stroke-width="1"/>
<line x1="121" y1="456.3" x2="125" y2="456.3" stroke="#b0b000" stroke-width="1"/>
<line x1="121" y1="451.4" x2="125" y2="451.4" stroke="#b0b000" stroke-width="1"/>
<line x1="121" y1="446.5" x2="125" y2="446.5" stroke="#b0b000" stroke-width="1"/>
<line x1="121" y1="441.6" x2="125" y2="441.6" stroke="#b0b000" stroke-width="1"/>
<text x="1863" y="441.8" fill="#ffff00" font-size="20" text-anchor="start" >N</text>
<text x="1863" y="471" fill="#ffff00" font-size="20" text-anchor="start" >W</text>
<text x="1863" y="500.2" fill="#ffff00" font-size="20" text-anchor="start" >S</text>
<text x="1863" y="529.4" fill="#ffff00" font-size="20" text-anchor="start" >E</text>
<text x="1863" y="558.6" fill="#ffff00" font-size="20" text-anchor="start" >N</text>
<rect x="133" y="604" width="1664" height="351" fill="url(#g3)"/>
<line x1="134" y1="953.5" x2="1795" y2="953.5" stroke="#dcdcdc" stroke-opacity="0.32" stroke-width="1" stroke-dasharray="1 1"/>
<line x1="134" y1="935.5" x2="1795" y2="935.5" stroke="#dcdcdc" stroke-opacity="0.32" stroke-width="1" stroke-dasharray="1 1"/>
<line x1="134" y1="918.5" x2="1795" y2="918.5" stroke="#dcdcdc" stroke-opacity="0.32" stroke-width="1" stroke-dasharray="1 1"/>
<line x1="134" y1="901.5" x2="1795" y2="901.5" stroke="#dcdcdc" stroke-opacity="0.32" stroke-width="1" stroke-dasharray="1 1"/>
<line x1="134" y1="884.5" x2="1795" y2="884.5" stroke="#dcdcdc" stroke-opacity="0.32" stroke-width="1" stroke-dasharray="1 1"/>
<line x1="134" y1="867.5" x2="1795" y2="867.5" stroke="#dcdcdc" stroke-opacity="0.32" stroke-width="1" stroke-dasharray="1 1"/>
<line x1="134" y1="850.5" x2="1795" y2="850.5" stroke="#dcdcdc" stroke-opacity="0.32" stroke-width="1" stroke-dasharray="1 1"/>
<line x1="134" y1="833.5" x2="1795" y2="833.5" stroke="#dcdcdc" stroke-opacity="0.32" stroke-width="1" stroke-dasharray="1 1"/>
<line x1="134" y1="816.5" x2="1795" y2="816.5" stroke="#dcdcdc" stroke-opacity="0.32" stroke-width="1" stroke-dasharray="1 1"/>
<line x1="134" y1="799.5" x2="1795" y2="799.5" stroke="#dcdcdc" stroke-opacity="0.32" stroke-width="1" stroke-dasharray="1 1"/>
<line x1="134" y1="782.5" x2="1795" y2="782.5" stroke="#dcdcdc" stroke-opacity="0.32" stroke-width="1" stroke-dasharray="1 1"/>
<line x1="134" y1="765.5" x2="1795" y2="765.5" stroke="#dcdcdc" stroke-opacity="0.32" stroke-width="1" stroke-dasharray="1 1"/>
<line x1="134" y1="748.5" x2="1795" y2="748.5" stroke="#dcdcdc" stroke-opacity="0.32" stroke-width="1" stroke-dasharray="1 1"/>
<line x1="134" y1="730.5" x2="1795" y2="730.5" stroke="#dcdcdc" stroke-opacity="0.32" stroke-width="1" stroke-dasharray="1 1"/>
<line x1="134" y1="713.5" x2="1795" y2="713.5" stroke="#dcdcdc" stroke-opacity="0.32" stroke-width="1" stroke-dasharray="1 1"/>
<line x1="134" y1="696.5" x2="1795" y2="696.5" stroke="#dcdcdc" stroke-opacity="0.32" stroke-width="1" stroke-dasharray="1 1"/>
<line x1="134" y1="679.5" x2="1795" y2="679.5" stroke="#dcdcdc" stroke-opacity="0.32" stroke-width="1" stroke-dasharray="1 1"/>
<line x1="134" y1="662.5" x2="1795" y2="662.5" stroke="#dcdcdc" stroke-opacity="0.32" stroke-width="1" stroke-dasharray="1 1"/>
<line x1="134" y1="645.5" x2="1795" y2="645.5" stroke="#dcdcdc" stroke-opacity="0.32" stroke-width="1" stroke-dasharray="1 1"/>
<line x1="134" y1="628.5" x2="1795" y2="628.5" stroke="#dcdcdc" stroke-opacity="0.32" stroke-width="1" stroke-dasharray="1 1"/>
<line x1="240.5" y1="605" x2="240.5" y2="955" stroke="#dcdcdc" stroke-opacity="0.32" stroke-width="1" stroke-dasharray="1 1"/>
<text x="240.1" y="970.5" fill="#ffff00" font-size="8.3" text-anchor="middle" textLength="6.1" lengthAdjust="spacingAndGlyphs" >11</text>
<line x1="378.5" y1="605" x2="378.5" y2="955" stroke="#dcdcdc" stroke-opacity="0.32" stroke-width="1" stroke-dasharray="1 1"/>
<text x="378.1" y="970.5" fill="#ffff00" font-size="8.3" text-anchor="middle" textLength="7.1" lengthAdjust="spacingAndGlyphs" >13</text>
<line x1="516.5" y1="605" x2="516.5" y2="955" stroke="#dcdcdc" stroke-opacity="0.32" stroke-width="1" stroke-dasharray="1 1"/>
<text x="516.1" y="970.5" fill="#ffff00" font-size="8.3" text-anchor="middle" textLength="7.1" lengthAdjust="spacingAndGlyphs" >15</text>
<line x1="654.5" y1="605" x2="654.5" y2="955" stroke="#dcdcdc" stroke-opacity="0.32" stroke-width="1" stroke-dasharray="1 1"/>
<text x="654.1" y="970.5" fill="#ffff00" font-size="8.3" text-anchor="middle" textLength="7.1" lengthAdjust="spacingAndGlyphs" >17</text>
<line x1="792.5" y1="605" x2="792.5" y2="955" stroke="#dcdcdc" stroke-opacity="0.32" stroke-width="1" stroke-dasharray="1 1"/>
<text x="792.1" y="970.5" fill="#ffff00" font-size="8.3" text-anchor="middle" textLength="7.1" lengthAdjust="spacingAndGlyphs" >19</text>
<line x1="930.5" y1="605" x2="930.5" y2="955" stroke="#dcdcdc" stroke-opacity="0.32" stroke-width="1" stroke-dasharray="1 1"/>
<text x="930.1" y="970.5" fill="#ffff00" font-size="8.3" text-anchor="middle" textLength="7.1" lengthAdjust="spacingAndGlyphs" >21</text>
<line x1="1068.5" y1="605" x2="1068.5" y2="955" stroke="#dcdcdc" stroke-opacity="0.32" stroke-width="1" stroke-dasharray="1 1"/>
<text x="1068.1" y="970.5" fill="#ffff00" font-size="8.3" text-anchor="middle" textLength="8.1" lengthAdjust="spacingAndGlyphs" >23</text>
<line x1="1206.5" y1="605" x2="1206.5" y2="955" stroke="#dcdcdc" stroke-opacity="0.32" stroke-width="1" stroke-dasharray="1 1"/>
<text x="1206.1" y="970.5" fill="#ffff00" font-size="8.3" text-anchor="middle" textLength="7.1" lengthAdjust="spacingAndGlyphs" >01</text>
<line x1="1344.5" y1="605" x2="1344.5" y2="955" stroke="#dcdcdc" stroke-opacity="0.32" stroke-width="1" stroke-dasharray="1 1"/>
<text x="1344.1" y="970.5" fill="#ffff00" font-size="8.3" text-anchor="middle" textLength="8.1" lengthAdjust="spacingAndGlyphs" >03</text>
<line x1="1482.5" y1="605" x2="1482.5" y2="955" stroke="#dcdcdc" stroke-opacity="0.32" stroke-width="1" stroke-dasharray="1 1"/>
<text x="1482.1" y="970.5" fill="#ffff00" font-size="8.3" text-anchor="middle" textLength="8.1" lengthAdjust="spacingAndGlyphs" >05</text>
<line x1="1620.5" y1="605" x2="1620.5" y2="955" stroke="#dcdcdc" stroke-opacity="0.32" stroke-width="1" stroke-dasharray="1 1"/>
<text x="1620.1" y="970.5" fill="#ffff00" font-size="8.3" text-anchor="middle" textLength="8.1" lengthAdjust="spacingAndGlyphs" >07</text>
<line x1="1758.5" y1="605" x2="1758.5" y2="955" stroke="#dcdcdc" stroke-opacity="0.32" stroke-width="1" stroke-dasharray="1 1"/>
<text x="1758.1" y="970.5" fill="#ffff00" font-size="8.3" text-anchor="middle" textLength="8.1" lengthAdjust="spacingAndGlyphs" >09</text>
<line x1="136.6" y1="957" x2="136.6" y2="959" stroke="#aaaaaa" stroke-width="1"/>
<line x1="171.1" y1="957" x2="171.1" y2="959" stroke="#aaaaaa" stroke-width="1"/>
<line x1="205.6" y1="957" x2="205.6" y2="959" stroke="#aaaaaa" stroke-width="1"/>
<line x1="240.1" y1="957" x2="240.1" y2="961" stroke="#aaaaaa" stroke-width="1"/>
<line x1="274.6" y1="957" x2="274.6" y2="959" stroke="#aaaaaa" stroke-width="1"/>
<line x1="309.1" y1="957" x2="309.1" y2="959" stroke="#aaaaaa" stroke-width="1"/>
<line x1="343.6" y1="957" x2="343.6" y2="959" stroke="#aaaaaa" stroke-width="1"/>
<line x1="378.1" y1="957" x2="378.1" y2="961" stroke="#aaaaaa" stroke-width="1"/>
<line x1="412.6" y1="957" x2="412.6" y2="959" stroke="#aaaaaa" stroke-width="1"/>
<line x1="447.1" y1="957" x2="447.1" y2="959" stroke="#aaaaaa" stroke-width="1"/>
<line x1="481.6" y1="957" x2="481.6" y2="959" stroke="#aaaaaa" stroke-width="1"/>
<line x1="516.1" y1="957" x2="516.1" y2="961" stroke="#aaaaaa" stroke-width="1"/>
<line x1="550.6" y1="957" x2="550.6" y2="959" stroke="#aaaaaa" stroke-width="1"/>
<line x1="585.1" y1="957" x2="585.1" y2="959" stroke="#aaaaaa" stroke-width="1"/>
<line x1="619.6" y1="957" x2="619.6" y2="959" stroke="#aaaaaa" stroke-width="1"/>
<line x1="654.1" y1="957" x2="654.1" y2="961" stroke="#aaaaaa" stroke-width="1"/>
<line x1="688.6" y1="957" x2="688.6" y2="959" stroke="#aaaaaa" stroke-width="1"/>
<line x1="723.1" y1="957" x2="723.1" y2="959" stroke="#aaaaaa" stroke-width="1"/>
<line x1="757.6" y1="957" x2="757.6" y2="959" stroke="#aaaaaa" stroke-width="1"/>
<line x1="792.1" y1="957" x2="792.1" y2="961" stroke="#aaaaaa" stroke-width="1"/>
<line x1="826.6" y1="957" x2="826.6" y2="959" stroke="#aaaaaa" stroke-width="1"/>
<line x1="861.1" y1="957" x2="861.1" y2="959" stroke="#aaaaaa" stroke-width="1"/>
<line x1="895.6" y1="957" x2="895.6" y2="959" stroke="#aaaaaa" stroke-width="1"/>
<line x1="930.1" y1="957" x2="930.1" y2="961" stroke="#aaaaaa" stroke-width="1"/>
<line x1="964.6" y1="957" x2="964.6" y2="959" stroke="#aaaaaa" stroke-width="1"/>
<line x1="999.1" y1="957" x2="999.1" y2="959" stroke="#aaaaaa" stroke-width="1"/>
<line x1="1033.6" y1="957" x2="1033.6" y2="959" stroke="#aaaaaa" stroke-width="1"/>
<line x1="1068.1" y1="957" x2="1068.1" y2="961" stroke="#aaaaaa" stroke-width="1"/>
<line x1="1102.6" y1="957" x2="1102.6" y2="959" stroke="#aaaaaa" stroke-width="1"/>
<line x1="1137.1" y1="957" x2="1137.1" y2="959" stroke="#aaaaaa" stroke-width="1"/>
<line x1="1171.6" y1="957" x2="1171.6" y2="959" stroke="#aaaaaa" stroke-width="1"/>
<line x1="1206.1" y1="957" x2="1206.1" y2="961" stroke="#aaaaaa" stroke-width="1"/>
<line x1="1240.6" y1="957" x2="1240.6" y2="959" stroke="#aaaaaa" stroke-width="1"/>
<line x1="1275.1" y1="957" x2="1275.1" y2="959" stroke="#aaaaaa" stroke-width="1"/>
<line x1="1309.6" y1="957" x2="1309.6" y2="959" stroke="#aaaaaa" stroke-width="1"/>
<line x1="1344.1" y1="957" x2="1344.1" y2="961" stroke="#aaaaaa" stroke-width="1"/>
<line x1="1378.6" y1="957" x2="1378.6" y2="959" stroke="#aaaaaa" stroke-width="1"/>
<line x1="1413.1" y1="957" x2="1413.1" y2="959" stroke="#aaaaaa" stroke-width="1"/>
<line x1="1447.6" y1="957" x2="1447.6" y2="959" stroke="#aaaaaa" stroke-width="1"/>
<line x1="1482.1" y1="957" x2="1482.1" y2="961" stroke="#aaaaaa" stroke-width="1"/>
<line x1="1516.6" y1="957" x2="1516.6" y2="959" stroke="#aaaaaa" stroke-width="1"/>
<line x1="1551.1" y1="957" x2="1551.1" y2="959" stroke="#aaaaaa" stroke-width="1"/>
<line x1="1585.6" y1="957" x2="1585.6" y2="959" stroke="#aaaaaa" stroke-width="1"/>
<line x1="1620.1" y1="957" x2="1620.1" y2="961" stroke="#aaaaaa" stroke-width="1"/>
<line x1="1654.6" y1="957" x2="1654.6" y2="959" stroke="#aaaaaa" stroke-width="1"/>
<line x1="1689.1" y1="957" x2="1689.1" y2="959" stroke="#aaaaaa" stroke-width="1"/>
<line x1="1723.6" y1="957" x2="1723.6" y2="959" stroke="#aaaaaa" stroke-width="1"/>
<line x1="1758.1" y1="957" x2="1758.1" y2="961" stroke="#aaaaaa" stroke-width="1"/>
<line x1="1792.6" y1="957" x2="1792.6" y2="959" stroke="#aaaaaa" stroke-width="1"/>
<rect x="133" y="604" width="1664" height="1" fill="#e4dcdc"/>
<rect x="135" y="952" width="1660" height="2.4" fill="#ff0000"/>
<path d="M135 872.3 L137 870.8 L139 869.3 L141 867.9 L143 866.4 L145 864.9 L147 863.5 L149 862 L151 860.6 L153 859.1 L155 857.7 L157 856.2 L159 854.8 L161 853.3 L163 851.9 L165 850.5 L167 849.1 L169 847.7 L171 846.2 L173 844.8 L175 843.4 L177 842.1 L179 840.7 L181 839.3 L183 837.9 L185 836.5 L187 835.2 L189 833.8 L191 832.5 L193 831.1 L195 829.8 L197 828.5 L199 827.2 L201 825.8 L203 824.5 L205 823.2 L207 822 L209 820.7 L211 819.4 L213 818.1 L215 816.9 L217 815.6 L219 814.4 L221 813.1 L223 811.9 L225 810.7 L227 809.5 L229 808.3 L231 807.1 L233 805.9 L235 804.8 L237 803.6 L239 802.5 L241 801.3 L243 800.2 L245 799.1 L247 798 L249 796.9 L251 795.8 L253 794.7 L255 793.6 L257 792.5 L259 791.5 L261 790.5 L263 789.4 L265 788.4 L267 787.4 L269 786.4 L271 785.4 L273 784.5 L275 783.5 L277 782.6 L279 781.6 L281 780.7 L283 779.8 L285 778.9 L287 778 L289 777.1 L291 776.2 L293 775.4 L295 774.5 L297 773.7 L299 772.9 L301 772.1 L303 771.3 L305 770.5 L307 769.7 L309 769 L311 768.2 L313 767.5 L315 766.8 L317 766.1 L319 765.4 L321 764.7 L323 764 L325 763.4 L327 762.8 L329 762.1 L331 761.5 L333 760.9 L335 760.3 L337 759.8 L339 759.2 L341 758.7 L343 758.1 L345 757.6 L347 757.1 L349 756.6 L351 756.1 L353 755.7 L355 755.2 L357 754.8 L359 754.4 L361 754 L363 753.6 L365 753.2 L367 752.8 L369 752.5 L371 752.2 L373 751.8 L375 751.5 L377 751.2 L379 751 L381 750.7 L383 750.4 L385 750.2 L387 750 L389 749.8 L391 749.6 L393 749.4 L395 749.2 L397 749.1 L399 749 L401 748.8 L403 748.7 L405 748.6 L407 748.6 L409 748.5 L411 748.5 L413 748.4 L415 748.4 L417 748.4 L419 748.4 L421 748.4 L423 748.5 L425 748.5 L427 748.6 L429 748.7 L431 748.8 L433 748.9 L435 749 L437 749.2 L439 749.3 L441 749.5 L443 749.7 L445 749.9 L447 750.1 L449 750.3 L451 750.6 L453 750.8 L455 751.1 L457 751.4 L459 751.7 L461 752 L463 752.3 L465 752.7 L467 753 L469 753.4 L471 753.8 L473 754.2 L475 754.6 L477 755 L479 755.5 L481 755.9 L483 756.4 L485 756.9 L487 757.4 L489 757.9 L491 758.4 L493 758.9 L495 759.5 L497 760 L499 760.6 L501 761.2 L503 761.8 L505 762.4 L507 763.1 L509 763.7 L511 764.4 L513 765.1 L515 765.7 L517 766.4 L519 767.1 L521 767.9 L523 768.6 L525 769.4 L527 770.1 L529 770.9 L531 771.7 L533 772.5 L535 773.3 L537 774.1 L539 775 L541 775.8 L543 776.7 L545 777.5 L547 778.4 L549 779.3 L551 780.2 L553 781.1 L555 782.1 L557 783 L559 784 L561 784.9 L563 785.9 L565 786.9 L567 787.9 L569 788.9 L571 789.9 L573 791 L575 792 L577 793.1 L579 794.1 L581 795.2 L583 796.3 L585 797.4 L587 798.5 L589 799.6 L591 800.7 L593 801.9 L595 803 L597 804.2 L599 805.3 L601 806.5 L603 807.7 L605 808.9 L607 810.1 L609 811.3 L611 812.5 L613 813.8 L615 815 L617 816.2 L619 817.5 L621 818.8 L623 820 L625 821.3 L627 822.6 L629 823.9 L631 825.2 L633 826.5 L635 827.8 L637 829.1 L639 830.5 L641 831.8 L643 833.2 L645 834.5 L647 835.9 L649 837.2 L651 838.6 L653 840 L655 841.4 L657 842.8 L659 844.1 L661 845.5 L663 847 L665 848.4 L667 849.8 L669 851.2 L671 852.6 L673 854.1 L675 855.5 L677 856.9 L679 858.4 L681 859.8 L683 861.3 L685 862.7 L687 864.2 L689 865.7 L691 867.1 L693 868.6 L695 870.1 L697 871.6 L699 873 L701 874.5 L703 876 L705 877.5 L707 879 L709 880.5 L711 881.9 L713 883.4 L715 884.9 L717 886.4 L719 887.9 L721 889.4 L723 890.9 L725 892.4 L727 893.9 L729 895.4 L731 896.9 L733 898.4 L735 899.9 L737 901.4 L739 902.9 L741 904.4 L743 905.9 L745 907.3 L747 908.8 L749 910.3 L751 911.8 L753 913.3 L755 914.7 L757 916.2 L759 917.7 L761 919.1 L763 920.6 L765 922 L767 923.5 L769 924.9 L771 926.3 L773 927.7 L775 929.2 L777 930.6 L779 932 L781 933.4 L783 934.7 L785 936.1 L787 937.5 L789 938.8 L791 940.1 L793 941.4 L795 942.7 L797 944 L799 945.3 L801 946.5 L803 947.7 L805 948.9 L807 950 L809 951.1 L811 952.1 L813 953 L815 953 L817 953 L819 953 L821 953 L823 953 L825 953 L827 953 L829 953 L831 953 L833 953 L835 953 L837 953 L839 953 L841 953 L843 953 L845 953 L847 953 L849 953 L851 953 L853 953 L855 953 L857 953 L859 953 L861 953 L863 953 L865 953 L867 953 L869 953 L871 953 L873 953 L875 953 L877 953 L879 953 L881 953 L883 953 L885 953 L887 953 L889 953 L891 953 L893 953 L895 953 L897 953 L899 953 L901 953 L903 953 L905 953 L907 953 L909 953 L911 953 L913 953 L915 953 L917 953 L919 953 L921 953 L923 953 L925 953 L927 953 L929 953 L931 953 L933 953 L935 953 L937 953 L939 953 L941 953 L943 953 L945 953 L947 953 L949 953 L951 953 L953 953 L955 953 L957 953 L959 953 L961 953 L963 953 L965 953 L967 953 L969 953 L971 953 L973 953 L975 953 L977 953 L979 953 L981 953 L983 953 L985 953 L987 953 L989 953 L991 953 L993 953 L995 953 L997 953 L999 953 L1001 953 L1003 953 L1005 953 L1007 953 L1009 953 L1011 953 L1013 953 L1015 953 L1017 953 L1019 953 L1021 953 L1023 953 L1025 953 L1027 953 L1029 953 L1031 953 L1033 953 L1035 953 L1037 953 L1039 953 L1041 953 L1043 953 L1045 953 L1047 953 L1049 953 L1051 953 L1053 953 L1055 953 L1057 953 L1059 953 L1061 953 L1063 953 L1065 953 L1067 953 L1069 953 L1071 953 L1073 953 L1075 953 L1077 953 L1079 953 L1081 953 L1083 953 L1085 953 L1087 953 L1089 953 L1091 953 L1093 953 L1095 953 L1097 953 L1099 953 L1101 953 L1103 953 L1105 953 L1107 953 L1109 953 L1111 953 L1113 953 L1115 953 L1117 953 L1119 953 L1121 953 L1123 953 L1125 953 L1127 953 L1129 953 L1131 953 L1133 953 L1135 953 L1137 953 L1139 953 L1141 953 L1143 953 L1145 953 L1147 953 L1149 953 L1151 953 L1153 953 L1155 953 L1157 953 L1159 953 L1161 953 L1163 953 L1165 953 L1167 953 L1169 953 L1171 953 L1173 953 L1175 953 L1177 953 L1179 953 L1181 953 L1183 953 L1185 953 L1187 953 L1189 953 L1191 953 L1193 953 L1195 953 L1197 953 L1199 953 L1201 953 L1203 953 L1205 953 L1207 953 L1209 953 L1211 953 L1213 953 L1215 953 L1217 953 L1219 953 L1221 953 L1223 953 L1225 953 L1227 953 L1229 953 L1231 953 L1233 953 L1235 953 L1237 953 L1239 953 L1241 953 L1243 953 L1245 953 L1247 953 L1249 953 L1251 953 L1253 953 L1255 953 L1257 953 L1259 953 L1261 953 L1263 953 L1265 953 L1267 953 L1269 953 L1271 953 L1273 953 L1275 953 L1277 953 L1279 953 L1281 953 L1283 953 L1285 953 L1287 953 L1289 953 L1291 953 L1293 953 L1295 953 L1297 953 L1299 953 L1301 953 L1303 953 L1305 953 L1307 953 L1309 953 L1311 953 L1313 953 L1315 953 L1317 953 L1319 953 L1321 953 L1323 953 L1325 953 L1327 953 L1329 953 L1331 953 L1333 953 L1335 953 L1337 953 L1339 953 L1341 953 L1343 953 L1345 953 L1347 953 L1349 953 L1351 953 L1353 953 L1355 953 L1357 953 L1359 953 L1361 953 L1363 953 L1365 953 L1367 953 L1369 953 L1371 953 L1373 953 L1375 953 L1377 953 L1379 953 L1381 953 L1383 953 L1385 953 L1387 953 L1389 953 L1391 953 L1393 953 L1395 953 L1397 953 L1399 953 L1401 953 L1403 953 L1405 953 L1407 953 L1409 953 L1411 953 L1413 953 L1415 953 L1417 953 L1419 953 L1421 953 L1423 953 L1425 953 L1427 953 L1429 953 L1431 953 L1433 953 L1435 953 L1437 953 L1439 953 L1441 953 L1443 953 L1445 953 L1447 953 L1449 953 L1451 953 L1453 953 L1455 953 L1457 953 L1459 953 L1461 953 L1463 953 L1465 953 L1467 953 L1469 953 L1471 953 L1473 953 L1475 953 L1477 953 L1479 953 L1481 953 L1483 953 L1485 953 L1487 953 L1489 953 L1491 953 L1493 953 L1495 953 L1497 953 L1499 953 L1501 953 L1503 953 L1505 953 L1507 953 L1509 953 L1511 953 L1513 953 L1515 953 L1517 953 L1519 953 L1521 953 L1523 953 L1525 953 L1527 953 L1529 953 L1531 953 L1533 953 L1535 953 L1537 953 L1539 953 L1541 953 L1543 953 L1545 953 L1547 953 L1549 953 L1551 953 L1553 953 L1555 953 L1557 953 L1559 953 L1561 953 L1563 953 L1565 953 L1567 953 L1569 953 L1571 953 L1573 953 L1575 953 L1577 953 L1579 953 L1581 953 L1583 953 L1585 953 L1587 953 L1589 953 L1591 953 L1593 953 L1595 953 L1597 953 L1599 953 L1601 953 L1603 953 L1605 953 L1607 953 L1609 953 L1611 953 L1613 953 L1615 953 L1617 953 L1619 953 L1621 953 L1623 953 L1625 953 L1627 953 L1629 953 L1631 953 L1633 953 L1635 953 L1637 953 L1639 953 L1641 953 L1643 953 L1645 953 L1647 953 L1649 953 L1651 953 L1653 953 L1655 953 L1657 953 L1659 953 L1661 953 L1663 953 L1665 953 L1667 953 L1669 953 L1671 953 L1673 953 L1675 953 L1677 952.6 L1679 951.7 L1681 950.6 L1683 949.5 L1685 948.3 L1687 947.1 L1689 945.9 L1691 944.7 L1693 943.4 L1695 942.1 L1697 940.8 L1699 939.5 L1701 938.1 L1703 936.8 L1705 935.4 L1707 934 L1709 932.7 L1711 931.3 L1713 929.9 L1715 928.5 L1717 927 L1719 925.6 L1721 924.2 L1723 922.7 L1725 921.3 L1727 919.8 L1729 918.4 L1731 916.9 L1733 915.5 L1735 914 L1737 912.5 L1739 911 L1741 909.6 L1743 908.1 L1745 906.6 L1747 905.1 L1749 903.6 L1751 902.1 L1753 900.6 L1755 899.1 L1757 897.6 L1759 896.2 L1761 894.7 L1763 893.2 L1765 891.7 L1767 890.2 L1769 888.7 L1771 887.2 L1773 885.7 L1775 884.2 L1777 882.7 L1779 881.2 L1781 879.7 L1783 878.2 L1785 876.7 L1787 875.3 L1789 873.8 L1791 872.3 L1793 870.8" fill="none" stroke="#d8d0d0" stroke-width="1.2" stroke-linejoin="round" clip-path="url(#cBot)"/>
<path d="M135 818.9 L137.3 818.9 L139.6 818.9 L139.6 815.5 L141.9 815.5 L141.9 822.4 L144.2 822.4 L144.2 818.9 L146.5 818.9 L148.8 818.9 L148.8 822.4 L151.1 822.4 L151.1 825.9 L153.4 825.9 L155.7 825.9 L158 825.9 L160.3 825.9 L162.6 825.9 L164.9 825.9 L167.2 825.9 L169.5 825.9 L171.8 825.9 L174.1 825.9 L176.4 825.9 L178.7 825.9 L181 825.9 L183.3 825.9 L185.6 825.9 L185.6 829.3 L187.9 829.3 L187.9 825.9 L190.2 825.9 L192.5 825.9 L194.8 825.9 L197.1 825.9 L197.1 829.3 L199.4 829.3 L201.7 829.3 L204 829.3 L206.3 829.3 L208.6 829.3 L210.9 829.3 L213.2 829.3 L215.5 829.3 L217.8 829.3 L220.1 829.3 L222.4 829.3 L224.7 829.3 L227 829.3 L229.3 829.3 L229.3 832.8 L231.6 832.8 L233.9 832.8 L236.2 832.8 L238.5 832.8 L240.8 832.8 L243.1 832.8 L243.1 836.3 L245.4 836.3 L247.7 836.3 L250 836.3 L252.3 836.3 L254.6 836.3 L256.9 836.3 L259.2 836.3 L259.2 839.7 L261.5 839.7 L263.8 839.7 L266.1 839.7 L268.4 839.7 L270.7 839.7 L273 839.7 L275.3 839.7 L277.6 839.7 L279.9 839.7 L282.2 839.7 L284.5 839.7 L286.8 839.7 L289.1 839.7 L289.1 843.2 L291.4 843.2 L293.7 843.2 L296 843.2 L298.3 843.2 L300.6 843.2 L302.9 843.2 L305.2 843.2 L307.5 843.2 L309.8 843.2 L312.1 843.2 L314.4 843.2 L316.7 843.2 L319 843.2 L321.3 843.2 L323.6 843.2 L325.9 843.2 L328.2 843.2 L328.2 846.7 L330.5 846.7 L332.8 846.7 L335.1 846.7 L337.4 846.7 L339.7 846.7 L342 846.7 L344.3 846.7 L346.6 846.7 L348.9 846.7 L351.2 846.7 L353.5 846.7 L355.8 846.7 L358.1 846.7 L360.4 846.7 L362.7 846.7 L365 846.7 L367.3 846.7 L369.6 846.7 L371.9 846.7 L374.2 846.7 L376.5 846.7 L376.5 850.2 L378.8 850.2 L381.1 850.2 L383.4 850.2 L385.7 850.2 L388 850.2 L390.3 850.2 L392.6 850.2 L394.9 850.2 L397.2 850.2 L399.5 850.2 L401.8 850.2 L404.1 850.2 L406.4 850.2 L408.7 850.2 L411 850.2 L413.3 850.2 L413.3 853.6 L415.6 853.6 L417.9 853.6 L420.2 853.6 L422.5 853.6 L424.8 853.6 L427.1 853.6 L429.4 853.6 L431.7 853.6 L434 853.6 L436.3 853.6 L438.6 853.6 L440.9 853.6 L443.2 853.6 L445.5 853.6 L447.8 853.6 L450.1 853.6 L452.4 853.6 L454.7 853.6 L457 853.6 L459.3 853.6 L461.6 853.6 L463.9 853.6 L466.2 853.6 L468.5 853.6 L470.8 853.6 L473.1 853.6 L475.4 853.6 L475.4 850.2 L477.7 850.2 L477.7 853.6 L480 853.6 L482.3 853.6 L484.6 853.6 L484.6 850.2 L486.9 850.2 L486.9 853.6 L489.2 853.6 L491.5 853.6 L493.8 853.6 L496.1 853.6 L498.4 853.6 L500.7 853.6 L503 853.6 L505.3 853.6 L505.3 850.2 L507.6 850.2 L507.6 853.6 L509.9 853.6 L512.2 853.6 L514.5 853.6 L516.8 853.6 L519.1 853.6 L521.4 853.6 L523.7 853.6 L526 853.6 L528.3 853.6 L530.6 853.6 L532.9 853.6 L535.2 853.6 L537.5 853.6 L539.8 853.6 L542.1 853.6 L544.4 853.6 L546.7 853.6 L549 853.6 L551.3 853.6 L553.6 853.6 L555.9 853.6 L558.2 853.6 L560.5 853.6 L562.8 853.6 L565.1 853.6 L567.4 853.6 L569.7 853.6 L572 853.6 L574.3 853.6 L576.6 853.6 L578.9 853.6 L581.2 853.6 L583.5 853.6 L585.8 853.6 L588.1 853.6 L590.4 853.6 L592.7 853.6 L595 853.6 L597.3 853.6 L599.6 853.6 L601.9 853.6 L604.2 853.6 L606.5 853.6 L606.5 850.2 L608.8 850.2 L611.1 850.2 L613.4 850.2 L615.7 850.2 L618 850.2 L620.3 850.2 L622.6 850.2 L622.6 846.7 L624.9 846.7 L624.9 843.2 L627.2 843.2 L627.2 846.7 L629.5 846.7 L631.8 846.7 L634.1 846.7 L636.4 846.7 L638.7 846.7 L641 846.7 L643.3 846.7 L645.6 846.7 L647.9 846.7 L650.2 846.7 L650.2 843.2 L652.5 843.2 L654.8 843.2 L657.1 843.2 L659.4 843.2 L661.7 843.2 L664 843.2 L666.3 843.2 L668.6 843.2 L670.9 843.2 L673.2 843.2 L675.5 843.2 L677.8 843.2 L680.1 843.2 L680.1 839.7 L682.4 839.7 L682.4 843.2 L684.7 843.2 L687 843.2 L689.3 843.2 L689.3 839.7 L691.6 839.7 L693.9 839.7 L696.2 839.7 L698.5 839.7 L700.8 839.7 L703.1 839.7 L705.4 839.7 L707.7 839.7 L710 839.7 L710 836.3 L712.3 836.3 L714.6 836.3 L716.9 836.3 L719.2 836.3 L721.5 836.3 L723.8 836.3 L726.1 836.3 L728.4 836.3 L730.7 836.3 L730.7 832.8 L733 832.8 L735.3 832.8 L737.6 832.8 L739.9 832.8 L742.2 832.8 L744.5 832.8 L746.8 832.8 L749.1 832.8 L751.4 832.8 L751.4 829.3 L753.7 829.3 L756 829.3 L756 825.9 L758.3 825.9 L758.3 829.3 L760.6 829.3 L762.9 829.3 L762.9 825.9 L765.2 825.9 L765.2 829.3 L767.5 829.3 L769.8 829.3 L772.1 829.3 L774.4 829.3 L776.7 829.3 L779 829.3 L779 825.9 L781.3 825.9 L783.6 825.9 L783.6 822.4 L785.9 822.4 L785.9 825.9 L788.2 825.9 L790.5 825.9 L792.8 825.9 L795.1 825.9 L797.4 825.9 L799.7 825.9 L802 825.9 L804.3 825.9 L806.6 825.9 L806.6 822.4 L808.9 822.4 L811.2 822.4 L813.5 822.4 L815.8 822.4 L818.1 822.4 L820.4 822.4 L822.7 822.4 L825 822.4 L827.3 822.4 L829.6 822.4 L831.9 822.4 L834.2 822.4 L834.2 818.9 L836.5 818.9 L838.8 818.9 L841.1 818.9 L843.4 818.9 L845.7 818.9 L848 818.9 L850.3 818.9 L852.6 818.9 L854.9 818.9 L857.2 818.9 L859.5 818.9 L859.5 822.4 L861.8 822.4 L861.8 818.9 L864.1 818.9 L866.4 818.9 L868.7 818.9 L871 818.9 L873.3 818.9 L875.6 818.9 L877.9 818.9 L880.2 818.9 L882.5 818.9 L884.8 818.9 L884.8 815.5 L887.1 815.5 L889.4 815.5 L889.4 818.9 L891.7 818.9 L891.7 815.5 L894 815.5 L896.3 815.5 L898.6 815.5 L900.9 815.5 L903.2 815.5 L905.5 815.5 L907.8 815.5 L910.1 815.5 L912.4 815.5 L914.7 815.5 L917 815.5 L919.3 815.5 L921.6 815.5 L923.9 815.5 L926.2 815.5 L928.5 815.5 L930.8 815.5 L933.1 815.5 L935.4 815.5 L937.7 815.5 L940 815.5 L940 812 L942.3 812 L944.6 812 L946.9 812 L949.2 812 L951.5 812 L953.8 812 L956.1 812 L958.4 812 L960.7 812 L963 812 L965.3 812 L967.6 812 L969.9 812 L972.2 812 L974.5 812 L976.8 812 L979.1 812 L979.1 808.5 L981.4 808.5 L983.7 808.5 L986 808.5 L988.3 808.5 L988.3 812 L990.6 812 L990.6 808.5 L992.9 808.5 L995.2 808.5 L997.5 808.5 L999.8 808.5 L1002.1 808.5 L1004.4 808.5 L1006.7 808.5 L1009 808.5 L1011.3 808.5 L1013.6 808.5 L1015.9 808.5 L1015.9 812 L1018.2 812 L1018.2 808.5 L1020.5 808.5 L1022.8 808.5 L1025.1 808.5 L1027.4 808.5 L1029.7 808.5 L1032 808.5 L1034.3 808.5 L1036.6 808.5 L1038.9 808.5 L1041.2 808.5 L1043.5 808.5 L1045.8 808.5 L1048.1 808.5 L1050.4 808.5 L1052.7 808.5 L1055 808.5 L1057.3 808.5 L1057.3 805 L1059.6 805 L1061.9 805 L1064.2 805 L1066.5 805 L1068.8 805 L1071.1 805 L1073.4 805 L1075.7 805 L1078 805 L1080.3 805 L1080.3 801.6 L1082.6 801.6 L1084.9 801.6 L1087.2 801.6 L1089.5 801.6 L1091.8 801.6 L1091.8 805 L1094.1 805 L1094.1 798.1 L1096.4 798.1 L1096.4 801.6 L1098.7 801.6 L1101 801.6 L1101 798.1 L1103.3 798.1 L1105.6 798.1 L1107.9 798.1 L1110.2 798.1 L1112.5 798.1 L1114.8 798.1 L1117.1 798.1 L1119.4 798.1 L1121.7 798.1 L1121.7 801.6 L1124 801.6 L1126.3 801.6 L1128.6 801.6 L1128.6 805 L1130.9 805 L1130.9 801.6 L1133.2 801.6 L1133.2 798.1 L1135.5 798.1 L1137.8 798.1 L1137.8 794.6 L1140.1 794.6 L1140.1 791.2 L1142.4 791.2 L1144.7 791.2 L1144.7 787.7 L1147 787.7 L1147 784.2 L1149.3 784.2 L1151.6 784.2 L1151.6 780.8 L1153.9 780.8 L1153.9 777.3 L1156.2 777.3 L1156.2 773.8 L1158.5 773.8 L1160.8 773.8 L1160.8 770.3 L1163.1 770.3 L1165.4 770.3 L1165.4 766.9 L1167.7 766.9 L1170 766.9 L1170 763.4 L1172.3 763.4 L1174.6 763.4 L1174.6 759.9 L1176.9 759.9 L1179.2 759.9 L1179.2 756.5 L1181.5 756.5 L1181.5 753 L1183.8 753 L1183.8 756.5 L1186.1 756.5 L1186.1 753 L1188.4 753 L1190.7 753 L1193 753 L1195.3 753 L1195.3 749.5 L1197.6 749.5 L1199.9 749.5 L1202.2 749.5 L1204.5 749.5 L1204.5 746.1 L1206.8 746.1 L1209.1 746.1 L1211.4 746.1 L1213.7 746.1 L1216 746.1 L1216 749.5 L1218.3 749.5 L1218.3 746.1 L1220.6 746.1 L1222.9 746.1 L1225.2 746.1 L1227.5 746.1 L1229.8 746.1 L1232.1 746.1 L1234.4 746.1 L1234.4 742.6 L1236.7 742.6 L1239 742.6 L1241.3 742.6 L1243.6 742.6 L1243.6 739.1 L1245.9 739.1 L1248.2 739.1 L1250.5 739.1 L1252.8 739.1 L1255.1 739.1 L1255.1 742.6 L1257.4 742.6 L1259.7 742.6 L1262 742.6 L1264.3 742.6 L1264.3 746.1 L1266.6 746.1 L1268.9 746.1 L1268.9 749.5 L1271.2 749.5 L1273.5 749.5 L1275.8 749.5 L1278.1 749.5 L1280.4 749.5 L1282.7 749.5 L1285 749.5 L1287.3 749.5 L1287.3 746.1 L1289.6 746.1 L1291.9 746.1 L1291.9 742.6 L1294.2 742.6 L1296.5 742.6 L1298.8 742.6 L1298.8 739.1 L1301.1 739.1 L1303.4 739.1 L1305.7 739.1 L1305.7 735.6 L1308 735.6 L1310.3 735.6 L1312.6 735.6 L1314.9 735.6 L1317.2 735.6 L1317.2 732.2 L1319.5 732.2 L1321.8 732.2 L1324.1 732.2 L1326.4 732.2 L1328.7 732.2 L1331 732.2 L1333.3 732.2 L1335.6 732.2 L1335.6 728.7 L1337.9 728.7 L1340.2 728.7 L1342.5 728.7 L1344.8 728.7 L1344.8 725.2 L1347.1 725.2 L1349.4 725.2 L1351.7 725.2 L1354 725.2 L1356.3 725.2 L1358.6 725.2 L1360.9 725.2 L1363.2 725.2 L1363.2 721.8 L1365.5 721.8 L1367.8 721.8 L1367.8 725.2 L1370.1 725.2 L1370.1 721.8 L1372.4 721.8 L1374.7 721.8 L1377 721.8 L1379.3 721.8 L1381.6 721.8 L1383.9 721.8 L1386.2 721.8 L1388.5 721.8 L1390.8 721.8 L1393.1 721.8 L1395.4 721.8 L1397.7 721.8 L1400 721.8 L1402.3 721.8 L1404.6 721.8 L1404.6 725.2 L1406.9 725.2 L1409.2 725.2 L1411.5 725.2 L1413.8 725.2 L1416.1 725.2 L1416.1 728.7 L1418.4 728.7 L1420.7 728.7 L1420.7 725.2 L1423 725.2 L1425.3 725.2 L1427.6 725.2 L1427.6 721.8 L1429.9 721.8 L1432.2 721.8 L1432.2 718.3 L1434.5 718.3 L1436.8 718.3 L1436.8 721.8 L1439.1 721.8 L1439.1 718.3 L1441.4 718.3 L1441.4 714.8 L1443.7 714.8 L1446 714.8 L1448.3 714.8 L1450.6 714.8 L1452.9 714.8 L1455.2 714.8 L1455.2 711.4 L1457.5 711.4 L1459.8 711.4 L1462.1 711.4 L1464.4 711.4 L1466.7 711.4 L1466.7 707.9 L1469 707.9 L1471.3 707.9 L1473.6 707.9 L1475.9 707.9 L1478.2 707.9 L1478.2 700.9 L1480.5 700.9 L1480.5 704.4 L1482.8 704.4 L1485.1 704.4 L1487.4 704.4 L1489.7 704.4 L1489.7 700.9 L1492 700.9 L1494.3 700.9 L1496.6 700.9 L1498.9 700.9 L1501.2 700.9 L1501.2 697.5 L1503.5 697.5 L1505.8 697.5 L1508.1 697.5 L1510.4 697.5 L1512.7 697.5 L1512.7 694 L1515 694 L1517.3 694 L1517.3 697.5 L1519.6 697.5 L1519.6 694 L1521.9 694 L1524.2 694 L1526.5 694 L1528.8 694 L1531.1 694 L1533.4 694 L1535.7 694 L1535.7 690.5 L1538 690.5 L1538 694 L1540.3 694 L1542.6 694 L1542.6 690.5 L1544.9 690.5 L1547.2 690.5 L1549.5 690.5 L1551.8 690.5 L1554.1 690.5 L1556.4 690.5 L1558.7 690.5 L1561 690.5 L1563.3 690.5 L1565.6 690.5 L1567.9 690.5 L1570.2 690.5 L1570.2 687.1 L1572.5 687.1 L1574.8 687.1 L1577.1 687.1 L1579.4 687.1 L1581.7 687.1 L1584 687.1 L1586.3 687.1 L1588.6 687.1 L1590.9 687.1 L1593.2 687.1 L1595.5 687.1 L1597.8 687.1 L1600.1 687.1 L1600.1 690.5 L1602.4 690.5 L1602.4 687.1 L1604.7 687.1 L1607 687.1 L1609.3 687.1 L1611.6 687.1 L1613.9 687.1 L1616.2 687.1 L1618.5 687.1 L1618.5 683.6 L1620.8 683.6 L1623.1 683.6 L1625.4 683.6 L1627.7 683.6 L1630 683.6 L1632.3 683.6 L1634.6 683.6 L1636.9 683.6 L1636.9 680.1 L1639.2 680.1 L1639.2 683.6 L1641.5 683.6 L1643.8 683.6 L1646.1 683.6 L1648.4 683.6 L1650.7 683.6 L1653 683.6 L1655.3 683.6 L1657.6 683.6 L1657.6 687.1 L1659.9 687.1 L1662.2 687.1 L1662.2 690.5 L1664.5 690.5 L1666.8 690.5 L1669.1 690.5 L1669.1 694 L1671.4 694 L1673.7 694 L1673.7 697.5 L1676 697.5 L1678.3 697.5 L1678.3 700.9 L1680.6 700.9 L1680.6 697.5 L1682.9 697.5 L1682.9 700.9 L1685.2 700.9 L1687.5 700.9 L1689.8 700.9 L1689.8 704.4 L1692.1 704.4 L1694.4 704.4 L1694.4 711.4 L1696.7 711.4 L1696.7 718.3 L1699 718.3 L1699 728.7 L1701.3 728.7 L1701.3 735.6 L1703.6 735.6 L1703.6 749.5 L1705.9 749.5 L1705.9 763.4 L1708.2 763.4 L1708.2 777.3 L1710.5 777.3 L1710.5 791.2 L1712.8 791.2 L1712.8 798.1 L1715.1 798.1 L1715.1 805 L1717.4 805 L1717.4 812 L1719.7 812 L1719.7 815.5 L1722 815.5 L1722 818.9 L1724.3 818.9 L1724.3 822.4 L1726.6 822.4 L1726.6 825.9 L1728.9 825.9 L1728.9 829.3 L1731.2 829.3 L1731.2 832.8 L1733.5 832.8 L1735.8 832.8 L1735.8 836.3 L1738.1 836.3 L1740.4 836.3 L1742.7 836.3 L1742.7 839.7 L1745 839.7 L1747.3 839.7 L1749.6 839.7 L1749.6 843.2 L1751.9 843.2 L1754.2 843.2 L1756.5 843.2 L1756.5 846.7 L1758.8 846.7 L1761.1 846.7 L1763.4 846.7 L1765.7 846.7 L1768 846.7 L1770.3 846.7 L1772.6 846.7 L1774.9 846.7 L1777.2 846.7 L1779.5 846.7 L1781.8 846.7 L1784.1 846.7 L1784.1 850.2 L1786.4 850.2 L1788.7 850.2 L1791 850.2 L1793.3 850.2" fill="none" stroke="#7878e0" stroke-width="2" stroke-linejoin="round" clip-path="url(#cBot)"/>
<path d="M135 823 L137.3 822.9 L139.6 822.8 L141.9 822.3 L144.2 822.2 L146.5 822.6 L148.8 822.5 L151.1 822.9 L153.4 822.3 L155.7 822.3 L158 821.7 L160.3 822.1 L162.6 822.5 L164.9 822.4 L167.2 821.9 L169.5 821.8 L171.8 821.7 L174.1 821.6 L176.4 821.5 L178.7 822 L181 820.9 L183.3 821.8 L185.6 821.2 L187.9 821.1 L190.2 821 L192.5 820.5 L194.8 820.9 L197.1 820.8 L199.4 820.7 L201.7 820.6 L204 820.1 L206.3 820.5 L208.6 820.4 L210.9 820.3 L213.2 820.2 L215.5 820.1 L217.8 820.6 L220.1 820 L222.4 819.9 L224.7 819.8 L227 819.7 L229.3 819.7 L231.6 819.6 L233.9 819 L236.2 819.4 L238.5 819.3 L240.8 819.7 L243.1 818.7 L245.4 818.6 L247.7 819.5 L250 818.9 L252.3 818.8 L254.6 819.3 L256.9 819.2 L259.2 818.6 L261.5 818.5 L263.8 818.9 L266.1 818.4 L268.4 818.8 L270.7 818.7 L273 817.6 L275.3 818 L277.6 817.9 L279.9 817.8 L282.2 817.2 L284.5 817.5 L286.8 816.9 L289.1 817.3 L291.4 817.6 L293.7 817 L296 816.9 L298.3 817.3 L300.6 817.1 L302.9 817 L305.2 816.4 L307.5 815.7 L309.8 816.1 L312.1 816 L314.4 815.4 L316.7 816.2 L319 815.1 L321.3 815.5 L323.6 815.3 L325.9 815.2 L328.2 815.1 L330.5 815 L332.8 815.3 L335.1 814.7 L337.4 814.6 L339.7 814.9 L342 813.8 L344.3 814.2 L346.6 814.1 L348.9 814.4 L351.2 813.3 L353.5 813.2 L355.8 813.5 L358.1 813.4 L360.4 813.3 L362.7 813.2 L365 813 L367.3 813.4 L369.6 812.8 L371.9 812.6 L374.2 813 L376.5 812.4 L378.8 811.8 L381.1 812.1 L383.4 812.5 L385.7 811.9 L388 811.2 L390.3 811.6 L392.6 811.5 L394.9 811.4 L397.2 810.7 L399.5 811.1 L401.8 811 L404.1 810.9 L406.4 810.8 L408.7 810.2 L411 810.6 L413.3 811.1 L415.6 810.5 L417.9 810.4 L420.2 809.8 L422.5 810.3 L424.8 810.2 L427.1 809.6 L429.4 809.6 L431.7 810 L434 809.9 L436.3 809.9 L438.6 809.8 L440.9 809.7 L443.2 809.7 L445.5 809.1 L447.8 809.5 L450.1 809.5 L452.4 809.4 L454.7 809.8 L457 809.3 L459.3 809.2 L461.6 809.1 L463.9 808.5 L466.2 809 L468.5 808.4 L470.8 809.3 L473.1 808.8 L475.4 808.2 L477.7 808.1 L480 808.6 L482.3 808.5 L484.6 807.9 L486.9 808.4 L489.2 808.3 L491.5 808.2 L493.8 808.2 L496.1 808.1 L498.4 808 L500.7 808 L503 807.4 L505.3 807.3 L507.6 807.7 L509.9 808.2 L512.2 808.1 L514.5 807.5 L516.8 807.5 L519.1 806.9 L521.4 807.8 L523.7 807.3 L526 807.4 L528.3 807 L530.6 807.5 L532.9 808.1 L535.2 807.6 L537.5 807.7 L539.8 807.8 L542.1 807.8 L544.4 808.4 L546.7 807.5 L549 807.5 L551.3 808.6 L553.6 808.2 L555.9 808.2 L558.2 808.3 L560.5 807.9 L562.8 808.4 L565.1 808.5 L567.4 808.5 L569.7 808.6 L572 808.2 L574.3 808.7 L576.6 808.8 L578.9 808.9 L581.2 808.9 L583.5 809 L585.8 809.1 L588.1 808.6 L590.4 809.2 L592.7 809.2 L595 809.3 L597.3 808.9 L599.6 808.9 L601.9 809 L604.2 809.6 L606.5 809.1 L608.8 810.2 L611.1 810.3 L613.4 810.3 L615.7 809.4 L618 809.9 L620.3 810 L622.6 810.3 L624.9 811 L627.2 810.8 L629.5 811 L631.8 811.3 L634.1 811.5 L636.4 811.7 L638.7 812 L641 812.2 L643.3 813 L645.6 812.2 L647.9 813.5 L650.2 813.7 L652.5 813.5 L654.8 814.2 L657.1 813.9 L659.4 814.2 L661.7 814.4 L664 815.2 L666.3 814.4 L668.6 815.2 L670.9 815.4 L673.2 815.2 L675.5 815.9 L677.8 816.1 L680.1 816.4 L682.4 816.6 L684.7 816.9 L687 817.1 L689.3 817.4 L691.6 817.6 L693.9 817.9 L696.2 818.6 L698.5 818.3 L700.8 818.6 L703.1 818.3 L705.4 819.6 L707.7 819.3 L710 819.6 L712.3 819.8 L714.6 820.1 L716.9 820.8 L719.2 820.6 L721.5 820.8 L723.8 820.5 L726.1 821.8 L728.4 821.5 L730.7 821.3 L733 822.2 L735.3 823 L737.6 822.9 L739.9 823.3 L742.2 823.6 L744.5 824 L746.8 823.8 L749.1 824.7 L751.4 825.1 L753.7 825.4 L756 825.8 L758.3 825.7 L760.6 826.5 L762.9 826.4 L765.2 827.7 L767.5 827.6 L769.8 828 L772.1 828.3 L774.4 829.2 L776.7 829.1 L779 829.9 L781.3 829.8 L783.6 830.1 L785.9 831 L788.2 830.9 L790.5 831.1 L792.8 831.7 L795.1 831.3 L797.4 831.4 L799.7 832 L802 831.6 L804.3 831.2 L806.6 831.9 L808.9 832 L811.2 832.1 L813.5 832.2 L815.8 832.3 L818.1 832.4 L820.4 832.5 L822.7 832.6 L825 833.3 L827.3 833.4 L829.6 833.5 L831.9 833.1 L834.2 833.2 L836.5 833.3 L838.8 833.4 L841.1 833.5 L843.4 833.2 L845.7 833.8 L848 833.9 L850.3 834 L852.6 834.6 L854.9 833.7 L857.2 834.8 L859.5 834.4 L861.8 834.6 L864.1 834.7 L866.4 835.4 L868.7 834.5 L871 835.7 L873.3 835.4 L875.6 835.5 L877.9 835.2 L880.2 836.4 L882.5 836 L884.8 836.2 L887.1 836.4 L889.4 837 L891.7 837.2 L894 836.9 L896.3 837 L898.6 837.2 L900.9 836.9 L903.2 837.5 L905.5 837.7 L907.8 837.9 L910.1 838 L912.4 838.2 L914.7 838.3 L917 838.5 L919.3 838.2 L921.6 838.8 L923.9 839 L926.2 839.2 L928.5 839.3 L930.8 840 L933.1 839.7 L935.4 839.8 L937.7 840.5 L940 840.7 L942.3 840.3 L944.6 840.5 L946.9 840.7 L949.2 840.8 L951.5 840.5 L953.8 841.7 L956.1 841.3 L958.4 841.3 L960.7 841.1 L963 840.9 L965.3 840.8 L967.6 841.1 L969.9 840.4 L972.2 840.3 L974.5 840.1 L976.8 839.9 L979.1 839.7 L981.4 839.6 L983.7 839.4 L986 839.2 L988.3 838.5 L990.6 838.9 L992.9 838.2 L995.2 838 L997.5 839.1 L999.8 838.2 L1002.1 838.3 L1004.4 838.9 L1006.7 839.1 L1009 838.7 L1011.3 839.3 L1013.6 839.9 L1015.9 839.5 L1018.2 839.6 L1020.5 839.7 L1022.8 839.8 L1025.1 839.5 L1027.4 839.6 L1029.7 839.7 L1032 840.3 L1034.3 839.9 L1036.6 840.5 L1038.9 840.1 L1041.2 840.7 L1043.5 840.4 L1045.8 841 L1048.1 841.6 L1050.4 841.7 L1052.7 840.8 L1055 841.5 L1057.3 841.7 L1059.6 841.5 L1061.9 842.2 L1064.2 842.5 L1066.5 842.8 L1068.8 843.5 L1071.1 843.3 L1073.4 843 L1075.7 844.3 L1078 844.1 L1080.3 843.8 L1082.6 844.1 L1084.9 845.3 L1087.2 844.6 L1089.5 845.4 L1091.8 845.6 L1094.1 846.4 L1096.4 846.1 L1098.7 846.4 L1101 847.1 L1103.3 846.8 L1105.6 847 L1107.9 847.7 L1110.2 847.3 L1112.5 847.5 L1114.8 848.2 L1117.1 847.9 L1119.4 848.1 L1121.7 848.3 L1124 848.5 L1126.3 848.7 L1128.6 849.7 L1130.9 850.6 L1133.2 852.1 L1135.5 853.5 L1137.8 855 L1140.1 855.9 L1142.4 857.9 L1144.7 859.3 L1147 860.7 L1149.3 862.6 L1151.6 862.7 L1153.9 863.8 L1156.2 863.4 L1158.5 863.9 L1160.8 865 L1163.1 865.6 L1165.4 866.2 L1167.7 866.8 L1170 867.9 L1172.3 868 L1174.6 868.6 L1176.9 869.7 L1179.2 869.8 L1181.5 870.4 L1183.8 871 L1186.1 871.6 L1188.4 872.4 L1190.7 872.1 L1193 872.3 L1195.3 872.5 L1197.6 873.2 L1199.9 873.4 L1202.2 873.1 L1204.5 873.8 L1206.8 873.5 L1209.1 873.7 L1211.4 873.9 L1213.7 874.1 L1216 874.3 L1218.3 874.5 L1220.6 874.6 L1222.9 874.8 L1225.2 875 L1227.5 875.2 L1229.8 875.4 L1232.1 875.6 L1234.4 875.8 L1236.7 876.5 L1239 876.7 L1241.3 876.4 L1243.6 876.6 L1245.9 876.8 L1248.2 875.9 L1250.5 876 L1252.8 875.6 L1255.1 875.1 L1257.4 875.2 L1259.7 873.8 L1262 874.4 L1264.3 872.9 L1266.6 873 L1268.9 872.6 L1271.2 873.1 L1273.5 873.6 L1275.8 873.5 L1278.1 874.5 L1280.4 874.4 L1282.7 874.9 L1285 875.3 L1287.3 875.8 L1289.6 876.3 L1291.9 876.7 L1294.2 877.2 L1296.5 877.1 L1298.8 878.1 L1301.1 878.4 L1303.4 878.8 L1305.7 878.6 L1308 878.9 L1310.3 879.2 L1312.6 880 L1314.9 880.3 L1317.2 880.6 L1319.5 880.9 L1321.8 881.2 L1324.1 881.5 L1326.4 882.3 L1328.7 881.6 L1331 882 L1333.3 882.8 L1335.6 883.1 L1337.9 883.4 L1340.2 883.2 L1342.5 884 L1344.8 883.7 L1347.1 883.8 L1349.4 884.3 L1351.7 883.9 L1354 884.9 L1356.3 884.5 L1358.6 884.5 L1360.9 884.6 L1363.2 885.1 L1365.5 884.7 L1367.8 885.2 L1370.1 884.8 L1372.4 884.9 L1374.7 884.9 L1377 885 L1379.3 885 L1381.6 885.6 L1383.9 885.1 L1386.2 885.7 L1388.5 885.2 L1390.8 885.3 L1393.1 884.8 L1395.4 885.4 L1397.7 885.9 L1400 885.5 L1402.3 885 L1404.6 885.1 L1406.9 885.7 L1409.2 885.7 L1411.5 886.5 L1413.8 886.8 L1416.1 887.1 L1418.4 886.9 L1420.7 887.2 L1423 888 L1425.3 888.3 L1427.6 888.1 L1429.9 887.9 L1432.2 888.2 L1434.5 889 L1436.8 888.8 L1439.1 890.1 L1441.4 889.4 L1443.7 890.7 L1446 890.5 L1448.3 890.8 L1450.6 891.1 L1452.9 891.9 L1455.2 891.7 L1457.5 892 L1459.8 892.8 L1462.1 892.6 L1464.4 892.9 L1466.7 893.2 L1469 893.5 L1471.3 893.8 L1473.6 894.1 L1475.9 894.4 L1478.2 894.6 L1480.5 895.2 L1482.8 895.4 L1485.1 894.5 L1487.4 895.7 L1489.7 895.3 L1492 895.5 L1494.3 895.2 L1496.6 895.8 L1498.9 896 L1501.2 896.1 L1503.5 895.8 L1505.8 895.9 L1508.1 897.1 L1510.4 896.7 L1512.7 896.9 L1515 897 L1517.3 896.7 L1519.6 897.3 L1521.9 897.5 L1524.2 898.1 L1526.5 897.8 L1528.8 898 L1531.1 897.6 L1533.4 897.8 L1535.7 897.9 L1538 898.1 L1540.3 898.7 L1542.6 898.9 L1544.9 899 L1547.2 898.7 L1549.5 899.3 L1551.8 899.5 L1554.1 899.6 L1556.4 899.3 L1558.7 899.9 L1561 900.1 L1563.3 900.3 L1565.6 900.4 L1567.9 900.5 L1570.2 900.6 L1572.5 901.2 L1574.8 900.7 L1577.1 900.8 L1579.4 900.9 L1581.7 901.5 L1584 901.1 L1586.3 901.2 L1588.6 901.2 L1590.9 900.8 L1593.2 901.9 L1595.5 901.5 L1597.8 902.1 L1600.1 901.7 L1602.4 901.7 L1604.7 901.8 L1607 902.4 L1609.3 902 L1611.6 902.1 L1613.9 902.2 L1616.2 902.2 L1618.5 902.8 L1620.8 902.4 L1623.1 902.5 L1625.4 903.1 L1627.7 902.7 L1630 903.2 L1632.3 902.3 L1634.6 903.4 L1636.9 903 L1639.2 902.6 L1641.5 903.2 L1643.8 903.2 L1646.1 903.3 L1648.4 903.3 L1650.7 902.9 L1653 901.9 L1655.3 901.9 L1657.6 901 L1659.9 901 L1662.2 900.1 L1664.5 900.1 L1666.8 899.6 L1669.1 898.7 L1671.4 898.1 L1673.7 898 L1676 897.9 L1678.3 896.3 L1680.6 896.2 L1682.9 895.6 L1685.2 894.9 L1687.5 893.2 L1689.8 891.6 L1692.1 889.8 L1694.4 884.7 L1696.7 880.1 L1699 873.5 L1701.3 867.1 L1703.6 861.2 L1705.9 854.6 L1708.2 848.9 L1710.5 844.9 L1712.8 840.4 L1715.1 838.4 L1717.4 836.1 L1719.7 832.8 L1722 831.9 L1724.3 830.5 L1726.6 829.2 L1728.9 828.4 L1731.2 827.2 L1733.5 826.5 L1735.8 826.3 L1738.1 825.1 L1740.4 824.4 L1742.7 824.3 L1745 823.8 L1747.3 823.2 L1749.6 822.6 L1751.9 821.6 L1754.2 821.5 L1756.5 820.9 L1758.8 820.1 L1761.1 820.4 L1763.4 820.6 L1765.7 819.9 L1768 820.2 L1770.3 818.9 L1772.6 819.2 L1774.9 819 L1777.2 818.7 L1779.5 818.5 L1781.8 818.3 L1784.1 817.5 L1786.4 817.8 L1788.7 817.5 L1791 817.3 L1793.3 817.1" fill="none" stroke="#10d010" stroke-width="2" stroke-linejoin="round" clip-path="url(#cBot)"/>
<path d="M135 900 L137.3 900 L139.6 900 L141.9 900 L144.2 900 L146.5 900 L148.8 900 L151.1 900 L151.1 901 L153.4 901 L155.7 901 L158 901 L160.3 901 L162.6 901 L164.9 901 L167.2 901 L169.5 901 L171.8 901 L174.1 901 L176.4 901 L178.7 901 L181 901 L183.3 901 L185.6 901 L187.9 901 L190.2 901 L192.5 901 L194.8 901 L197.1 901 L197.1 902 L199.4 902 L201.7 902 L204 902 L206.3 902 L208.6 902 L210.9 902 L213.2 902 L215.5 902 L217.8 902 L220.1 902 L220.1 903 L222.4 903 L224.7 903 L224.7 904 L227 904 L229.3 904 L229.3 905 L231.6 905 L231.6 908 L233.9 908 L233.9 905 L236.2 905 L238.5 905 L240.8 905 L243.1 905 L245.4 905 L247.7 905 L250 905 L250 906 L252.3 906 L254.6 906 L256.9 906 L259.2 906 L261.5 906 L263.8 906 L266.1 906 L268.4 906 L270.7 906 L273 906 L275.3 906 L277.6 906 L279.9 906 L282.2 906 L284.5 906 L286.8 906 L289.1 906 L289.1 907 L291.4 907 L293.7 907 L296 907 L298.3 907 L300.6 907 L302.9 907 L305.2 907 L307.5 907 L309.8 907 L312.1 907 L314.4 907 L316.7 907 L319 907 L321.3 907 L323.6 907 L325.9 907 L328.2 907 L330.5 907 L330.5 908 L332.8 908 L335.1 908 L337.4 908 L339.7 908 L342 908 L344.3 908 L346.6 908 L348.9 908 L351.2 908 L353.5 908 L355.8 908 L358.1 908 L360.4 908 L362.7 908 L365 908 L367.3 908 L369.6 908 L371.9 908 L374.2 908 L374.2 909 L376.5 909 L378.8 909 L381.1 909 L383.4 909 L385.7 909 L388 909 L390.3 909 L392.6 909 L394.9 909 L397.2 909 L399.5 909 L401.8 909 L404.1 909 L406.4 909 L408.7 909 L411 909 L413.3 909 L415.6 909 L417.9 909 L420.2 909 L420.2 910 L422.5 910 L424.8 910 L427.1 910 L427.1 909 L429.4 909 L431.7 909 L434 909 L436.3 909 L438.6 909 L438.6 912 L440.9 912 L440.9 909 L443.2 909 L445.5 909 L447.8 909 L447.8 908 L450.1 908 L452.4 908 L454.7 908 L457 908 L459.3 908 L461.6 908 L463.9 908 L463.9 905 L466.2 905 L466.2 908 L468.5 908 L468.5 911 L470.8 911 L470.8 907 L473.1 907 L475.4 907 L477.7 907 L480 907 L482.3 907 L484.6 907 L486.9 907 L489.2 907 L491.5 907 L493.8 907 L496.1 907 L498.4 907 L500.7 907 L503 907 L505.3 907 L507.6 907 L509.9 907 L512.2 907 L514.5 907 L516.8 907 L519.1 907 L521.4 907 L523.7 907 L523.7 908 L526 908 L528.3 908 L530.6 908 L532.9 908 L532.9 911 L535.2 911 L535.2 908 L537.5 908 L539.8 908 L542.1 908 L544.4 908 L546.7 908 L549 908 L551.3 908 L553.6 908 L555.9 908 L558.2 908 L560.5 908 L560.5 911 L562.8 911 L562.8 908 L565.1 908 L567.4 908 L569.7 908 L572 908 L574.3 908 L576.6 908 L578.9 908 L581.2 908 L583.5 908 L585.8 908 L588.1 908 L590.4 908 L592.7 908 L595 908 L597.3 908 L599.6 908 L601.9 908 L604.2 908 L606.5 908 L606.5 909 L608.8 909 L611.1 909 L613.4 909 L615.7 909 L618 909 L620.3 909 L622.6 909 L624.9 909 L627.2 909 L629.5 909 L631.8 909 L634.1 909 L636.4 909 L638.7 909 L641 909 L643.3 909 L645.6 909 L647.9 909 L650.2 909 L652.5 909 L654.8 909 L657.1 909 L659.4 909 L661.7 909 L664 909 L666.3 909 L668.6 909 L670.9 909 L673.2 909 L675.5 909 L677.8 909 L677.8 906 L680.1 906 L680.1 912 L682.4 912 L682.4 909 L684.7 909 L687 909 L689.3 909 L689.3 910 L691.6 910 L693.9 910 L696.2 910 L698.5 910 L700.8 910 L703.1 910 L705.4 910 L707.7 910 L710 910 L712.3 910 L714.6 910 L714.6 907 L716.9 907 L716.9 910 L719.2 910 L721.5 910 L723.8 910 L726.1 910 L728.4 910 L730.7 910 L733 910 L735.3 910 L737.6 910 L739.9 910 L742.2 910 L744.5 910 L746.8 910 L749.1 910 L751.4 910 L753.7 910 L756 910 L758.3 910 L760.6 910 L762.9 910 L765.2 910 L767.5 910 L769.8 910 L772.1 910 L774.4 910 L776.7 910 L776.7 913 L779 913 L779 910 L781.3 910 L783.6 910 L785.9 910 L788.2 910 L790.5 910 L792.8 910 L795.1 910 L797.4 910 L799.7 910 L802 910 L804.3 910 L806.6 910 L808.9 910 L811.2 910 L813.5 910 L815.8 910 L818.1 910 L820.4 910 L820.4 909 L822.7 909 L825 909 L827.3 909 L829.6 909 L831.9 909 L834.2 909 L836.5 909 L838.8 909 L841.1 909 L843.4 909 L845.7 909 L848 909 L850.3 909 L852.6 909 L854.9 909 L857.2 909 L859.5 909 L859.5 910 L861.8 910 L864.1 910 L866.4 910 L868.7 910 L871 910 L873.3 910 L875.6 910 L877.9 910 L880.2 910 L882.5 910 L882.5 911 L884.8 911 L887.1 911 L889.4 911 L891.7 911 L894 911 L896.3 911 L898.6 911 L900.9 911 L903.2 911 L903.2 912 L905.5 912 L907.8 912 L910.1 912 L912.4 912 L914.7 912 L917 912 L919.3 912 L921.6 912 L923.9 912 L926.2 912 L926.2 913 L928.5 913 L930.8 913 L933.1 913 L935.4 913 L937.7 913 L940 913 L942.3 913 L944.6 913 L946.9 913 L949.2 913 L951.5 913 L953.8 913 L956.1 913 L958.4 913 L960.7 913 L963 913 L965.3 913 L967.6 913 L969.9 913 L972.2 913 L974.5 913 L976.8 913 L979.1 913 L981.4 913 L983.7 913 L986 913 L988.3 913 L988.3 916 L990.6 916 L990.6 913 L992.9 913 L992.9 912 L995.2 912 L997.5 912 L999.8 912 L1002.1 912 L1004.4 912 L1006.7 912 L1009 912 L1011.3 912 L1013.6 912 L1015.9 912 L1018.2 912 L1020.5 912 L1022.8 912 L1025.1 912 L1027.4 912 L1029.7 912 L1032 912 L1032 909 L1034.3 909 L1034.3 912 L1036.6 912 L1038.9 912 L1041.2 912 L1043.5 912 L1045.8 912 L1048.1 912 L1050.4 912 L1052.7 912 L1055 912 L1057.3 912 L1059.6 912 L1061.9 912 L1064.2 912 L1066.5 912 L1068.8 912 L1071.1 912 L1073.4 912 L1075.7 912 L1078 912 L1080.3 912 L1082.6 912 L1084.9 912 L1087.2 912 L1089.5 912 L1089.5 915 L1091.8 915 L1091.8 912 L1094.1 912 L1096.4 912 L1098.7 912 L1101 912 L1103.3 912 L1103.3 911 L1105.6 911 L1107.9 911 L1110.2 911 L1112.5 911 L1114.8 911 L1117.1 911 L1119.4 911 L1121.7 911 L1124 911 L1126.3 911 L1126.3 912 L1128.6 912 L1128.6 913 L1130.9 913 L1130.9 915 L1133.2 915 L1133.2 916 L1135.5 916 L1135.5 917 L1137.8 917 L1137.8 918 L1140.1 918 L1142.4 918 L1144.7 918 L1147 918 L1149.3 918 L1151.6 918 L1153.9 918 L1156.2 918 L1156.2 917 L1158.5 917 L1160.8 917 L1160.8 920 L1163.1 920 L1163.1 917 L1165.4 917 L1167.7 917 L1170 917 L1172.3 917 L1174.6 917 L1176.9 917 L1179.2 917 L1181.5 917 L1183.8 917 L1186.1 917 L1188.4 917 L1190.7 917 L1190.7 914 L1193 914 L1193 916 L1195.3 916 L1197.6 916 L1199.9 916 L1202.2 916 L1202.2 913 L1204.5 913 L1204.5 916 L1206.8 916 L1209.1 916 L1211.4 916 L1213.7 916 L1216 916 L1218.3 916 L1220.6 916 L1222.9 916 L1225.2 916 L1227.5 916 L1229.8 916 L1232.1 916 L1234.4 916 L1236.7 916 L1239 916 L1241.3 916 L1241.3 917 L1243.6 917 L1245.9 917 L1248.2 917 L1250.5 917 L1252.8 917 L1252.8 920 L1255.1 920 L1255.1 917 L1257.4 917 L1259.7 917 L1262 917 L1264.3 917 L1266.6 917 L1268.9 917 L1271.2 917 L1273.5 917 L1275.8 917 L1278.1 917 L1280.4 917 L1282.7 917 L1285 917 L1287.3 917 L1289.6 917 L1291.9 917 L1294.2 917 L1296.5 917 L1298.8 917 L1301.1 917 L1301.1 918 L1303.4 918 L1305.7 918 L1308 918 L1308 921 L1310.3 921 L1310.3 918 L1312.6 918 L1314.9 918 L1317.2 918 L1319.5 918 L1321.8 918 L1324.1 918 L1326.4 918 L1328.7 918 L1331 918 L1333.3 918 L1335.6 918 L1337.9 918 L1340.2 918 L1342.5 918 L1344.8 918 L1344.8 919 L1347.1 919 L1349.4 919 L1351.7 919 L1354 919 L1356.3 919 L1358.6 919 L1360.9 919 L1363.2 919 L1365.5 919 L1367.8 919 L1370.1 919 L1372.4 919 L1374.7 919 L1374.7 920 L1377 920 L1379.3 920 L1381.6 920 L1383.9 920 L1386.2 920 L1388.5 920 L1390.8 920 L1393.1 920 L1395.4 920 L1397.7 920 L1400 920 L1402.3 920 L1404.6 920 L1404.6 921 L1406.9 921 L1409.2 921 L1409.2 918 L1411.5 918 L1411.5 921 L1413.8 921 L1416.1 921 L1418.4 921 L1420.7 921 L1423 921 L1425.3 921 L1427.6 921 L1429.9 921 L1432.2 921 L1434.5 921 L1436.8 921 L1439.1 921 L1441.4 921 L1443.7 921 L1446 921 L1448.3 921 L1448.3 922 L1450.6 922 L1452.9 922 L1455.2 922 L1457.5 922 L1459.8 922 L1462.1 922 L1464.4 922 L1466.7 922 L1469 922 L1471.3 922 L1473.6 922 L1475.9 922 L1478.2 922 L1480.5 922 L1482.8 922 L1485.1 922 L1487.4 922 L1489.7 922 L1492 922 L1494.3 922 L1496.6 922 L1498.9 922 L1501.2 922 L1503.5 922 L1505.8 922 L1505.8 919 L1508.1 919 L1508.1 923 L1510.4 923 L1512.7 923 L1512.7 926 L1515 926 L1515 923 L1517.3 923 L1519.6 923 L1521.9 923 L1524.2 923 L1526.5 923 L1528.8 923 L1531.1 923 L1533.4 923 L1535.7 923 L1538 923 L1540.3 923 L1542.6 923 L1544.9 923 L1547.2 923 L1549.5 923 L1551.8 923 L1554.1 923 L1556.4 923 L1558.7 923 L1561 923 L1561 926 L1563.3 926 L1563.3 923 L1565.6 923 L1565.6 924 L1567.9 924 L1570.2 924 L1572.5 924 L1574.8 924 L1577.1 924 L1579.4 924 L1581.7 924 L1584 924 L1586.3 924 L1588.6 924 L1590.9 924 L1593.2 924 L1595.5 924 L1597.8 924 L1600.1 924 L1602.4 924 L1604.7 924 L1607 924 L1609.3 924 L1611.6 924 L1613.9 924 L1616.2 924 L1618.5 924 L1620.8 924 L1620.8 925 L1623.1 925 L1625.4 925 L1627.7 925 L1630 925 L1632.3 925 L1634.6 925 L1634.6 928 L1636.9 928 L1636.9 925 L1639.2 925 L1641.5 925 L1643.8 925 L1646.1 925 L1648.4 925 L1650.7 925 L1653 925 L1653 924 L1655.3 924 L1657.6 924 L1659.9 924 L1659.9 923 L1662.2 923 L1664.5 923 L1664.5 922 L1666.8 922 L1669.1 922 L1671.4 922 L1671.4 921 L1673.7 921 L1676 921 L1678.3 921 L1678.3 920 L1680.6 920 L1682.9 920 L1682.9 919 L1685.2 919 L1685.2 918 L1687.5 918 L1687.5 914 L1689.8 914 L1689.8 916 L1692.1 916 L1692.1 915 L1694.4 915 L1694.4 914 L1696.7 914 L1696.7 913 L1699 913 L1699 912 L1701.3 912 L1701.3 911 L1703.6 911 L1703.6 914 L1705.9 914 L1705.9 911 L1708.2 911 L1710.5 911 L1712.8 911 L1712.8 912 L1715.1 912 L1717.4 912 L1719.7 912 L1722 912 L1724.3 912 L1726.6 912 L1726.6 913 L1728.9 913 L1731.2 913 L1733.5 913 L1735.8 913 L1738.1 913 L1740.4 913 L1740.4 914 L1742.7 914 L1745 914 L1747.3 914 L1749.6 914 L1751.9 914 L1754.2 914 L1756.5 914 L1758.8 914 L1761.1 914 L1763.4 914 L1765.7 914 L1768 914 L1770.3 914 L1772.6 914 L1774.9 914 L1777.2 914 L1777.2 917 L1779.5 917 L1779.5 914 L1781.8 914 L1784.1 914 L1786.4 914 L1788.7 914 L1791 914 L1793.3 914" fill="none" stroke="#c818c8" stroke-width="2" stroke-linejoin="round" clip-path="url(#cBot)"/>
<line x1="750.2" y1="920" x2="750.2" y2="956" stroke="#ffff00" stroke-width="1.6" stroke-dasharray="1.5 1"/>
<line x1="1604.2" y1="920" x2="1604.2" y2="956" stroke="#ffff00" stroke-width="1.6" stroke-dasharray="1.5 1"/>
<text x="749" y="919.5" fill="#e0d000" font-size="9" text-anchor="middle" textLength="32" lengthAdjust="spacingAndGlyphs" >Sun Set</text>
<text x="1602.5" y="919.5" fill="#e0d000" font-size="9" text-anchor="middle" textLength="37" lengthAdjust="spacingAndGlyphs" >Sun Rise</text>
<text x="748.2" y="970.5" fill="#ffff00" font-size="8.5" text-anchor="middle" textLength="27" lengthAdjust="spacingAndGlyphs" >Sun Set</text>
<text x="1605" y="970.5" fill="#ffff00" font-size="8.5" text-anchor="middle" textLength="30" lengthAdjust="spacingAndGlyphs" >Sun Rise</text>
<rect x="133" y="955" width="1664" height="2" fill="#c8c8c8"/>
<rect x="133" y="604" width="1" height="353" fill="#a0a0a0"/>
<rect x="149" y="604" width="2" height="353" fill="#f4f4f4"/>
<rect x="1795" y="604" width="2" height="353" fill="#e8f8e8"/>
<text x="142" y="955.3" fill="#e00000" font-size="8.3" text-anchor="end" textLength="3.8" lengthAdjust="spacingAndGlyphs" >0</text>
<line x1="146" y1="952.3" x2="149" y2="952.3" stroke="#e00000" stroke-width="1.5"/>
<line x1="147" y1="945" x2="149" y2="945" stroke="#d01010" stroke-width="1"/>
<line x1="147" y1="937.6" x2="149" y2="937.6" stroke="#d01010" stroke-width="1"/>
<line x1="147" y1="930.3" x2="149" y2="930.3" stroke="#d01010" stroke-width="1"/>
<text x="142" y="926" fill="#e00000" font-size="8.3" text-anchor="end" textLength="9.1" lengthAdjust="spacingAndGlyphs" >0.1</text>
<line x1="146" y1="923" x2="149" y2="923" stroke="#e00000" stroke-width="1.5"/>
<line x1="147" y1="915.7" x2="149" y2="915.7" stroke="#d01010" stroke-width="1"/>
<line x1="147" y1="908.4" x2="149" y2="908.4" stroke="#d01010" stroke-width="1"/>
<line x1="147" y1="901" x2="149" y2="901" stroke="#d01010" stroke-width="1"/>
<text x="142" y="896.7" fill="#e00000" font-size="8.3" text-anchor="end" textLength="10.1" lengthAdjust="spacingAndGlyphs" >0.2</text>
<line x1="146" y1="893.7" x2="149" y2="893.7" stroke="#e00000" stroke-width="1.5"/>
<line x1="147" y1="886.4" x2="149" y2="886.4" stroke="#d01010" stroke-width="1"/>
<line x1="147" y1="879" x2="149" y2="879" stroke="#d01010" stroke-width="1"/>
<line x1="147" y1="871.7" x2="149" y2="871.7" stroke="#d01010" stroke-width="1"/>
<text x="142" y="867.4" fill="#e00000" font-size="8.3" text-anchor="end" textLength="10.1" lengthAdjust="spacingAndGlyphs" >0.3</text>
<line x1="146" y1="864.4" x2="149" y2="864.4" stroke="#e00000" stroke-width="1.5"/>
<line x1="147" y1="857.1" x2="149" y2="857.1" stroke="#d01010" stroke-width="1"/>
<line x1="147" y1="849.8" x2="149" y2="849.8" stroke="#d01010" stroke-width="1"/>
<line x1="147" y1="842.4" x2="149" y2="842.4" stroke="#d01010" stroke-width="1"/>
<text x="142" y="838.1" fill="#e00000" font-size="8.3" text-anchor="end" textLength="10.1" lengthAdjust="spacingAndGlyphs" >0.4</text>
<line x1="146" y1="835.1" x2="149" y2="835.1" stroke="#e00000" stroke-width="1.5"/>
<line x1="147" y1="827.8" x2="149" y2="827.8" stroke="#d01010" stroke-width="1"/>
<line x1="147" y1="820.4" x2="149" y2="820.4" stroke="#d01010" stroke-width="1"/>
<line x1="147" y1="813.1" x2="149" y2="813.1" stroke="#d01010" stroke-width="1"/>
<text x="142" y="808.8" fill="#e00000" font-size="8.3" text-anchor="end" textLength="10.1" lengthAdjust="spacingAndGlyphs" >0.5</text>
<line x1="146" y1="805.8" x2="149" y2="805.8" stroke="#e00000" stroke-width="1.5"/>
<line x1="147" y1="798.5" x2="149" y2="798.5" stroke="#d01010" stroke-width="1"/>
<line x1="147" y1="791.1" x2="149" y2="791.1" stroke="#d01010" stroke-width="1"/>
<line x1="147" y1="783.8" x2="149" y2="783.8" stroke="#d01010" stroke-width="1"/>
<text x="142" y="779.5" fill="#e00000" font-size="8.3" text-anchor="end" textLength="10.1" lengthAdjust="spacingAndGlyphs" >0.6</text>
<line x1="146" y1="776.5" x2="149" y2="776.5" stroke="#e00000" stroke-width="1.5"/>
<line x1="147" y1="769.2" x2="149" y2="769.2" stroke="#d01010" stroke-width="1"/>
<line x1="147" y1="761.9" x2="149" y2="761.9" stroke="#d01010" stroke-width="1"/>
<line x1="147" y1="754.5" x2="149" y2="754.5" stroke="#d01010" stroke-width="1"/>
<text x="142" y="750.2" fill="#e00000" font-size="8.3" text-anchor="end" textLength="10.1" lengthAdjust="spacingAndGlyphs" >0.7</text>
<line x1="146" y1="747.2" x2="149" y2="747.2" stroke="#e00000" stroke-width="1.5"/>
<line x1="147" y1="739.9" x2="149" y2="739.9" stroke="#d01010" stroke-width="1"/>
<line x1="147" y1="732.5" x2="149" y2="732.5" stroke="#d01010" stroke-width="1"/>
<line x1="147" y1="725.2" x2="149" y2="725.2" stroke="#d01010" stroke-width="1"/>
<text x="142" y="720.9" fill="#e00000" font-size="8.3" text-anchor="end" textLength="10.1" lengthAdjust="spacingAndGlyphs" >0.8</text>
<line x1="146" y1="717.9" x2="149" y2="717.9" stroke="#e00000" stroke-width="1.5"/>
<line x1="147" y1="710.6" x2="149" y2="710.6" stroke="#d01010" stroke-width="1"/>
<line x1="147" y1="703.2" x2="149" y2="703.2" stroke="#d01010" stroke-width="1"/>
<line x1="147" y1="695.9" x2="149" y2="695.9" stroke="#d01010" stroke-width="1"/>
<text x="142" y="691.6" fill="#e00000" font-size="8.3" text-anchor="end" textLength="10.1" lengthAdjust="spacingAndGlyphs" >0.9</text>
<line x1="146" y1="688.6" x2="149" y2="688.6" stroke="#e00000" stroke-width="1.5"/>
<line x1="147" y1="681.3" x2="149" y2="681.3" stroke="#d01010" stroke-width="1"/>
<line x1="147" y1="673.9" x2="149" y2="673.9" stroke="#d01010" stroke-width="1"/>
<line x1="147" y1="666.6" x2="149" y2="666.6" stroke="#d01010" stroke-width="1"/>
<text x="142" y="662.3" fill="#e00000" font-size="8.3" text-anchor="end" textLength="2.8" lengthAdjust="spacingAndGlyphs" >1</text>
<line x1="146" y1="659.3" x2="149" y2="659.3" stroke="#e00000" stroke-width="1.5"/>
<line x1="147" y1="652" x2="149" y2="652" stroke="#d01010" stroke-width="1"/>
<line x1="147" y1="644.6" x2="149" y2="644.6" stroke="#d01010" stroke-width="1"/>
<line x1="147" y1="637.3" x2="149" y2="637.3" stroke="#d01010" stroke-width="1"/>
<text x="142" y="633" fill="#e00000" font-size="8.3" text-anchor="end" textLength="8.1" lengthAdjust="spacingAndGlyphs" >1.1</text>
<line x1="146" y1="630" x2="149" y2="630" stroke="#e00000" stroke-width="1.5"/>
<line x1="147" y1="622.7" x2="149" y2="622.7" stroke="#d01010" stroke-width="1"/>
<line x1="147" y1="615.4" x2="149" y2="615.4" stroke="#d01010" stroke-width="1"/>
<line x1="147" y1="608" x2="149" y2="608" stroke="#d01010" stroke-width="1"/>
<line x1="1797" y1="953.5" x2="1801" y2="953.5" stroke="#00d000" stroke-width="1.5"/>
<text x="1803.3" y="956.5" fill="#00ff00" font-size="8.3" text-anchor="start" textLength="7.1" lengthAdjust="spacingAndGlyphs" >15</text>
<line x1="1797" y1="950.5" x2="1799" y2="950.5" stroke="#00b000" stroke-width="1"/>
<line x1="1797" y1="947.5" x2="1799" y2="947.5" stroke="#00b000" stroke-width="1"/>
<line x1="1797" y1="944.5" x2="1799" y2="944.5" stroke="#00b000" stroke-width="1"/>
<line x1="1797" y1="941.5" x2="1799" y2="941.5" stroke="#00b000" stroke-width="1"/>
<line x1="1797" y1="938.5" x2="1801" y2="938.5" stroke="#00d000" stroke-width="1.5"/>
<text x="1803.3" y="941.5" fill="#00ff00" font-size="8.3" text-anchor="start" textLength="8.1" lengthAdjust="spacingAndGlyphs" >20</text>
<line x1="1797" y1="935.5" x2="1799" y2="935.5" stroke="#00b000" stroke-width="1"/>
<line x1="1797" y1="932.5" x2="1799" y2="932.5" stroke="#00b000" stroke-width="1"/>
<line x1="1797" y1="929.5" x2="1799" y2="929.5" stroke="#00b000" stroke-width="1"/>
<line x1="1797" y1="926.5" x2="1799" y2="926.5" stroke="#00b000" stroke-width="1"/>
<line x1="1797" y1="923.5" x2="1801" y2="923.5" stroke="#00d000" stroke-width="1.5"/>
<text x="1803.3" y="926.5" fill="#00ff00" font-size="8.3" text-anchor="start" textLength="8.1" lengthAdjust="spacingAndGlyphs" >25</text>
<line x1="1797" y1="920.5" x2="1799" y2="920.5" stroke="#00b000" stroke-width="1"/>
<line x1="1797" y1="917.5" x2="1799" y2="917.5" stroke="#00b000" stroke-width="1"/>
<line x1="1797" y1="914.6" x2="1799" y2="914.6" stroke="#00b000" stroke-width="1"/>
<line x1="1797" y1="911.6" x2="1799" y2="911.6" stroke="#00b000" stroke-width="1"/>
<line x1="1797" y1="908.6" x2="1801" y2="908.6" stroke="#00d000" stroke-width="1.5"/>
<text x="1803.3" y="911.6" fill="#00ff00" font-size="8.3" text-anchor="start" textLength="8.1" lengthAdjust="spacingAndGlyphs" >30</text>
<line x1="1797" y1="905.6" x2="1799" y2="905.6" stroke="#00b000" stroke-width="1"/>
<line x1="1797" y1="902.6" x2="1799" y2="902.6" stroke="#00b000" stroke-width="1"/>
<line x1="1797" y1="899.6" x2="1799" y2="899.6" stroke="#00b000" stroke-width="1"/>
<line x1="1797" y1="896.6" x2="1799" y2="896.6" stroke="#00b000" stroke-width="1"/>
<line x1="1797" y1="893.6" x2="1801" y2="893.6" stroke="#00d000" stroke-width="1.5"/>
<text x="1803.3" y="896.6" fill="#00ff00" font-size="8.3" text-anchor="start" textLength="8.1" lengthAdjust="spacingAndGlyphs" >35</text>
<line x1="1797" y1="890.6" x2="1799" y2="890.6" stroke="#00b000" stroke-width="1"/>
<line x1="1797" y1="887.6" x2="1799" y2="887.6" stroke="#00b000" stroke-width="1"/>
<line x1="1797" y1="884.6" x2="1799" y2="884.6" stroke="#00b000" stroke-width="1"/>
<line x1="1797" y1="881.6" x2="1799" y2="881.6" stroke="#00b000" stroke-width="1"/>
<line x1="1797" y1="878.6" x2="1801" y2="878.6" stroke="#00d000" stroke-width="1.5"/>
<text x="1803.3" y="881.6" fill="#00ff00" font-size="8.3" text-anchor="start" textLength="8.1" lengthAdjust="spacingAndGlyphs" >40</text>
<line x1="1797" y1="875.6" x2="1799" y2="875.6" stroke="#00b000" stroke-width="1"/>
<line x1="1797" y1="872.6" x2="1799" y2="872.6" stroke="#00b000" stroke-width="1"/>
<line x1="1797" y1="869.6" x2="1799" y2="869.6" stroke="#00b000" stroke-width="1"/>
<line x1="1797" y1="866.6" x2="1799" y2="866.6" stroke="#00b000" stroke-width="1"/>
<line x1="1797" y1="863.6" x2="1801" y2="863.6" stroke="#00d000" stroke-width="1.5"/>
<text x="1803.3" y="866.6" fill="#00ff00" font-size="8.3" text-anchor="start" textLength="8.1" lengthAdjust="spacingAndGlyphs" >45</text>
<line x1="1797" y1="860.6" x2="1799" y2="860.6" stroke="#00b000" stroke-width="1"/>
<line x1="1797" y1="857.6" x2="1799" y2="857.6" stroke="#00b000" stroke-width="1"/>
<line x1="1797" y1="854.6" x2="1799" y2="854.6" stroke="#00b000" stroke-width="1"/>
<line x1="1797" y1="851.6" x2="1799" y2="851.6" stroke="#00b000" stroke-width="1"/>
<line x1="1797" y1="848.6" x2="1801" y2="848.6" stroke="#00d000" stroke-width="1.5"/>
<text x="1803.3" y="851.6" fill="#00ff00" font-size="8.3" text-anchor="start" textLength="8.1" lengthAdjust="spacingAndGlyphs" >50</text>
<line x1="1797" y1="845.6" x2="1799" y2="845.6" stroke="#00b000" stroke-width="1"/>
<line x1="1797" y1="842.6" x2="1799" y2="842.6" stroke="#00b000" stroke-width="1"/>
<line x1="1797" y1="839.7" x2="1799" y2="839.7" stroke="#00b000" stroke-width="1"/>
<line x1="1797" y1="836.7" x2="1799" y2="836.7" stroke="#00b000" stroke-width="1"/>
<line x1="1797" y1="833.7" x2="1801" y2="833.7" stroke="#00d000" stroke-width="1.5"/>
<text x="1803.3" y="836.7" fill="#00ff00" font-size="8.3" text-anchor="start" textLength="8.1" lengthAdjust="spacingAndGlyphs" >55</text>
<line x1="1797" y1="830.7" x2="1799" y2="830.7" stroke="#00b000" stroke-width="1"/>
<line x1="1797" y1="827.7" x2="1799" y2="827.7" stroke="#00b000" stroke-width="1"/>
<line x1="1797" y1="824.7" x2="1799" y2="824.7" stroke="#00b000" stroke-width="1"/>
<line x1="1797" y1="821.7" x2="1799" y2="821.7" stroke="#00b000" stroke-width="1"/>
<line x1="1797" y1="818.7" x2="1801" y2="818.7" stroke="#00d000" stroke-width="1.5"/>
<text x="1803.3" y="821.7" fill="#00ff00" font-size="8.3" text-anchor="start" textLength="8.1" lengthAdjust="spacingAndGlyphs" >60</text>
<line x1="1797" y1="815.7" x2="1799" y2="815.7" stroke="#00b000" stroke-width="1"/>
<line x1="1797" y1="812.7" x2="1799" y2="812.7" stroke="#00b000" stroke-width="1"/>
<line x1="1797" y1="809.7" x2="1799" y2="809.7" stroke="#00b000" stroke-width="1"/>
<line x1="1797" y1="806.7" x2="1799" y2="806.7" stroke="#00b000" stroke-width="1"/>
<line x1="1797" y1="803.7" x2="1801" y2="803.7" stroke="#00d000" stroke-width="1.5"/>
<text x="1803.3" y="806.7" fill="#00ff00" font-size="8.3" text-anchor="start" textLength="8.1" lengthAdjust="spacingAndGlyphs" >65</text>
<line x1="1797" y1="800.7" x2="1799" y2="800.7" stroke="#00b000" stroke-width="1"/>
<line x1="1797" y1="797.7" x2="1799" y2="797.7" stroke="#00b000" stroke-width="1"/>
<line x1="1797" y1="794.7" x2="1799" y2="794.7" stroke="#00b000" stroke-width="1"/>
<line x1="1797" y1="791.7" x2="1799" y2="791.7" stroke="#00b000" stroke-width="1"/>
<line x1="1797" y1="788.7" x2="1801" y2="788.7" stroke="#00d000" stroke-width="1.5"/>
<text x="1803.3" y="791.7" fill="#00ff00" font-size="8.3" text-anchor="start" textLength="8.1" lengthAdjust="spacingAndGlyphs" >70</text>
<line x1="1797" y1="785.7" x2="1799" y2="785.7" stroke="#00b000" stroke-width="1"/>
<line x1="1797" y1="782.7" x2="1799" y2="782.7" stroke="#00b000" stroke-width="1"/>
<line x1="1797" y1="779.7" x2="1799" y2="779.7" stroke="#00b000" stroke-width="1"/>
<line x1="1797" y1="776.7" x2="1799" y2="776.7" stroke="#00b000" stroke-width="1"/>
<line x1="1797" y1="773.7" x2="1801" y2="773.7" stroke="#00d000" stroke-width="1.5"/>
<text x="1803.3" y="776.7" fill="#00ff00" font-size="8.3" text-anchor="start" textLength="8.1" lengthAdjust="spacingAndGlyphs" >75</text>
<line x1="1797" y1="770.7" x2="1799" y2="770.7" stroke="#00b000" stroke-width="1"/>
<line x1="1797" y1="767.7" x2="1799" y2="767.7" stroke="#00b000" stroke-width="1"/>
<line x1="1797" y1="764.8" x2="1799" y2="764.8" stroke="#00b000" stroke-width="1"/>
<line x1="1797" y1="761.8" x2="1799" y2="761.8" stroke="#00b000" stroke-width="1"/>
<line x1="1797" y1="758.8" x2="1801" y2="758.8" stroke="#00d000" stroke-width="1.5"/>
<text x="1803.3" y="761.8" fill="#00ff00" font-size="8.3" text-anchor="start" textLength="8.1" lengthAdjust="spacingAndGlyphs" >80</text>
<line x1="1797" y1="755.8" x2="1799" y2="755.8" stroke="#00b000" stroke-width="1"/>
<line x1="1797" y1="752.8" x2="1799" y2="752.8" stroke="#00b000" stroke-width="1"/>
<line x1="1797" y1="749.8" x2="1799" y2="749.8" stroke="#00b000" stroke-width="1"/>
<line x1="1797" y1="746.8" x2="1799" y2="746.8" stroke="#00b000" stroke-width="1"/>
<line x1="1797" y1="743.8" x2="1801" y2="743.8" stroke="#00d000" stroke-width="1.5"/>
<text x="1803.3" y="746.8" fill="#00ff00" font-size="8.3" text-anchor="start" textLength="8.1" lengthAdjust="spacingAndGlyphs" >85</text>
<line x1="1797" y1="740.8" x2="1799" y2="740.8" stroke="#00b000" stroke-width="1"/>
<line x1="1797" y1="737.8" x2="1799" y2="737.8" stroke="#00b000" stroke-width="1"/>
<line x1="1797" y1="734.8" x2="1799" y2="734.8" stroke="#00b000" stroke-width="1"/>
<line x1="1797" y1="731.8" x2="1799" y2="731.8" stroke="#00b000" stroke-width="1"/>
<line x1="1797" y1="728.8" x2="1801" y2="728.8" stroke="#00d000" stroke-width="1.5"/>
<text x="1803.3" y="731.8" fill="#00ff00" font-size="8.3" text-anchor="start" textLength="8.1" lengthAdjust="spacingAndGlyphs" >90</text>
<line x1="1797" y1="725.8" x2="1799" y2="725.8" stroke="#00b000" stroke-width="1"/>
<line x1="1797" y1="722.8" x2="1799" y2="722.8" stroke="#00b000" stroke-width="1"/>
<line x1="1797" y1="719.8" x2="1799" y2="719.8" stroke="#00b000" stroke-width="1"/>
<line x1="1797" y1="716.8" x2="1799" y2="716.8" stroke="#00b000" stroke-width="1"/>
<line x1="1797" y1="713.8" x2="1801" y2="713.8" stroke="#00d000" stroke-width="1.5"/>
<text x="1803.3" y="716.8" fill="#00ff00" font-size="8.3" text-anchor="start" textLength="8.1" lengthAdjust="spacingAndGlyphs" >95</text>
<line x1="1797" y1="710.8" x2="1799" y2="710.8" stroke="#00b000" stroke-width="1"/>
<line x1="1797" y1="707.8" x2="1799" y2="707.8" stroke="#00b000" stroke-width="1"/>
<line x1="1797" y1="704.8" x2="1799" y2="704.8" stroke="#00b000" stroke-width="1"/>
<line x1="1797" y1="701.8" x2="1799" y2="701.8" stroke="#00b000" stroke-width="1"/>
<line x1="1797" y1="698.8" x2="1801" y2="698.8" stroke="#00d000" stroke-width="1.5"/>
<text x="1803.3" y="701.8" fill="#00ff00" font-size="8.3" text-anchor="start" textLength="11.4" lengthAdjust="spacingAndGlyphs" >100</text>
<line x1="1797" y1="695.8" x2="1799" y2="695.8" stroke="#00b000" stroke-width="1"/>
<line x1="1797" y1="692.8" x2="1799" y2="692.8" stroke="#00b000" stroke-width="1"/>
<line x1="1797" y1="689.9" x2="1799" y2="689.9" stroke="#00b000" stroke-width="1"/>
<line x1="1797" y1="686.9" x2="1799" y2="686.9" stroke="#00b000" stroke-width="1"/>
<line x1="1797" y1="683.9" x2="1801" y2="683.9" stroke="#00d000" stroke-width="1.5"/>
<text x="1803.3" y="686.9" fill="#00ff00" font-size="8.3" text-anchor="start" textLength="11.4" lengthAdjust="spacingAndGlyphs" >105</text>
<line x1="1797" y1="680.9" x2="1799" y2="680.9" stroke="#00b000" stroke-width="1"/>
<line x1="1797" y1="677.9" x2="1799" y2="677.9" stroke="#00b000" stroke-width="1"/>
<line x1="1797" y1="674.9" x2="1799" y2="674.9" stroke="#00b000" stroke-width="1"/>
<line x1="1797" y1="671.9" x2="1799" y2="671.9" stroke="#00b000" stroke-width="1"/>
<line x1="1797" y1="668.9" x2="1801" y2="668.9" stroke="#00d000" stroke-width="1.5"/>
<text x="1803.3" y="671.9" fill="#00ff00" font-size="8.3" text-anchor="start" textLength="10.4" lengthAdjust="spacingAndGlyphs" >110</text>
<line x1="1797" y1="665.9" x2="1799" y2="665.9" stroke="#00b000" stroke-width="1"/>
<line x1="1797" y1="662.9" x2="1799" y2="662.9" stroke="#00b000" stroke-width="1"/>
<line x1="1797" y1="659.9" x2="1799" y2="659.9" stroke="#00b000" stroke-width="1"/>
<line x1="1797" y1="656.9" x2="1799" y2="656.9" stroke="#00b000" stroke-width="1"/>
<line x1="1797" y1="653.9" x2="1801" y2="653.9" stroke="#00d000" stroke-width="1.5"/>
<text x="1803.3" y="656.9" fill="#00ff00" font-size="8.3" text-anchor="start" textLength="10.4" lengthAdjust="spacingAndGlyphs" >115</text>
<line x1="1797" y1="650.9" x2="1799" y2="650.9" stroke="#00b000" stroke-width="1"/>
<line x1="1797" y1="647.9" x2="1799" y2="647.9" stroke="#00b000" stroke-width="1"/>
<line x1="1797" y1="644.9" x2="1799" y2="644.9" stroke="#00b000" stroke-width="1"/>
<line x1="1797" y1="641.9" x2="1799" y2="641.9" stroke="#00b000" stroke-width="1"/>
<line x1="1797" y1="638.9" x2="1801" y2="638.9" stroke="#00d000" stroke-width="1.5"/>
<text x="1803.3" y="641.9" fill="#00ff00" font-size="8.3" text-anchor="start" textLength="11.4" lengthAdjust="spacingAndGlyphs" >120</text>
<line x1="1797" y1="635.9" x2="1799" y2="635.9" stroke="#00b000" stroke-width="1"/>
<line x1="1797" y1="632.9" x2="1799" y2="632.9" stroke="#00b000" stroke-width="1"/>
<line x1="1797" y1="629.9" x2="1799" y2="629.9" stroke="#00b000" stroke-width="1"/>
<line x1="1797" y1="626.9" x2="1799" y2="626.9" stroke="#00b000" stroke-width="1"/>
<line x1="1797" y1="623.9" x2="1801" y2="623.9" stroke="#00d000" stroke-width="1.5"/>
<text x="1803.3" y="626.9" fill="#00ff00" font-size="8.3" text-anchor="start" textLength="11.4" lengthAdjust="spacingAndGlyphs" >125</text>
<line x1="1797" y1="620.9" x2="1799" y2="620.9" stroke="#00b000" stroke-width="1"/>
<line x1="1797" y1="617.9" x2="1799" y2="617.9" stroke="#00b000" stroke-width="1"/>
<line x1="1797" y1="615" x2="1799" y2="615" stroke="#00b000" stroke-width="1"/>
<line x1="1797" y1="612" x2="1799" y2="612" stroke="#00b000" stroke-width="1"/>
<line x1="1797" y1="609" x2="1801" y2="609" stroke="#00d000" stroke-width="1.5"/>
<text x="1803.3" y="612" fill="#00ff00" font-size="8.3" text-anchor="start" textLength="11.4" lengthAdjust="spacingAndGlyphs" >130</text>
<line x1="1797" y1="606" x2="1799" y2="606" stroke="#00b000" stroke-width="1"/>
<rect x="41" y="604" width="2" height="352" fill="#7070e8"/>
<line x1="36" y1="952.5" x2="41" y2="952.5" stroke="#7070d0" stroke-width="1.5"/>
<text x="33.5" y="955.5" fill="#8080e0" font-size="8.5" text-anchor="end" clip-path="url(#cHum)">0</text>
<line x1="38.5" y1="949" x2="41" y2="949" stroke="#6060c0" stroke-width="1"/>
<line x1="38.5" y1="945.6" x2="41" y2="945.6" stroke="#6060c0" stroke-width="1"/>
<line x1="38.5" y1="942.1" x2="41" y2="942.1" stroke="#6060c0" stroke-width="1"/>
<line x1="38.5" y1="938.6" x2="41" y2="938.6" stroke="#6060c0" stroke-width="1"/>
<line x1="36" y1="935.1" x2="41" y2="935.1" stroke="#7070d0" stroke-width="1.5"/>
<text x="33.5" y="938.1" fill="#8080e0" font-size="8.5" text-anchor="end" clip-path="url(#cHum)">5</text>
<line x1="38.5" y1="931.7" x2="41" y2="931.7" stroke="#6060c0" stroke-width="1"/>
<line x1="38.5" y1="928.2" x2="41" y2="928.2" stroke="#6060c0" stroke-width="1"/>
<line x1="38.5" y1="924.7" x2="41" y2="924.7" stroke="#6060c0" stroke-width="1"/>
<line x1="38.5" y1="921.3" x2="41" y2="921.3" stroke="#6060c0" stroke-width="1"/>
<line x1="36" y1="917.8" x2="41" y2="917.8" stroke="#7070d0" stroke-width="1.5"/>
<text x="33.5" y="920.8" fill="#8080e0" font-size="8.5" text-anchor="end" clip-path="url(#cHum)">0</text>
<line x1="38.5" y1="914.3" x2="41" y2="914.3" stroke="#6060c0" stroke-width="1"/>
<line x1="38.5" y1="910.9" x2="41" y2="910.9" stroke="#6060c0" stroke-width="1"/>
<line x1="38.5" y1="907.4" x2="41" y2="907.4" stroke="#6060c0" stroke-width="1"/>
<line x1="38.5" y1="903.9" x2="41" y2="903.9" stroke="#6060c0" stroke-width="1"/>
<line x1="36" y1="900.5" x2="41" y2="900.5" stroke="#7070d0" stroke-width="1.5"/>
<text x="33.5" y="903.5" fill="#8080e0" font-size="8.5" text-anchor="end" clip-path="url(#cHum)">5</text>
<line x1="38.5" y1="897" x2="41" y2="897" stroke="#6060c0" stroke-width="1"/>
<line x1="38.5" y1="893.5" x2="41" y2="893.5" stroke="#6060c0" stroke-width="1"/>
<line x1="38.5" y1="890" x2="41" y2="890" stroke="#6060c0" stroke-width="1"/>
<line x1="38.5" y1="886.6" x2="41" y2="886.6" stroke="#6060c0" stroke-width="1"/>
<line x1="36" y1="883.1" x2="41" y2="883.1" stroke="#7070d0" stroke-width="1.5"/>
<text x="33.5" y="886.1" fill="#8080e0" font-size="8.5" text-anchor="end" clip-path="url(#cHum)">0</text>
<line x1="38.5" y1="879.6" x2="41" y2="879.6" stroke="#6060c0" stroke-width="1"/>
<line x1="38.5" y1="876.2" x2="41" y2="876.2" stroke="#6060c0" stroke-width="1"/>
<line x1="38.5" y1="872.7" x2="41" y2="872.7" stroke="#6060c0" stroke-width="1"/>
<line x1="38.5" y1="869.2" x2="41" y2="869.2" stroke="#6060c0" stroke-width="1"/>
<line x1="36" y1="865.8" x2="41" y2="865.8" stroke="#7070d0" stroke-width="1.5"/>
<text x="33.5" y="868.8" fill="#8080e0" font-size="8.5" text-anchor="end" clip-path="url(#cHum)">5</text>
<line x1="38.5" y1="862.3" x2="41" y2="862.3" stroke="#6060c0" stroke-width="1"/>
<line x1="38.5" y1="858.8" x2="41" y2="858.8" stroke="#6060c0" stroke-width="1"/>
<line x1="38.5" y1="855.3" x2="41" y2="855.3" stroke="#6060c0" stroke-width="1"/>
<line x1="38.5" y1="851.9" x2="41" y2="851.9" stroke="#6060c0" stroke-width="1"/>
<line x1="36" y1="848.4" x2="41" y2="848.4" stroke="#7070d0" stroke-width="1.5"/>
<text x="33.5" y="851.4" fill="#8080e0" font-size="8.5" text-anchor="end" clip-path="url(#cHum)">0</text>
<line x1="38.5" y1="844.9" x2="41" y2="844.9" stroke="#6060c0" stroke-width="1"/>
<line x1="38.5" y1="841.5" x2="41" y2="841.5" stroke="#6060c0" stroke-width="1"/>
<line x1="38.5" y1="838" x2="41" y2="838" stroke="#6060c0" stroke-width="1"/>
<line x1="38.5" y1="834.5" x2="41" y2="834.5" stroke="#6060c0" stroke-width="1"/>
<line x1="36" y1="831" x2="41" y2="831" stroke="#7070d0" stroke-width="1.5"/>
<text x="33.5" y="834" fill="#8080e0" font-size="8.5" text-anchor="end" clip-path="url(#cHum)">5</text>
<line x1="38.5" y1="827.6" x2="41" y2="827.6" stroke="#6060c0" stroke-width="1"/>
<line x1="38.5" y1="824.1" x2="41" y2="824.1" stroke="#6060c0" stroke-width="1"/>
<line x1="38.5" y1="820.6" x2="41" y2="820.6" stroke="#6060c0" stroke-width="1"/>
<line x1="38.5" y1="817.2" x2="41" y2="817.2" stroke="#6060c0" stroke-width="1"/>
<line x1="36" y1="813.7" x2="41" y2="813.7" stroke="#7070d0" stroke-width="1.5"/>
<text x="33.5" y="816.7" fill="#8080e0" font-size="8.5" text-anchor="end" clip-path="url(#cHum)">0</text>
<line x1="38.5" y1="810.2" x2="41" y2="810.2" stroke="#6060c0" stroke-width="1"/>
<line x1="38.5" y1="806.8" x2="41" y2="806.8" stroke="#6060c0" stroke-width="1"/>
<line x1="38.5" y1="803.3" x2="41" y2="803.3" stroke="#6060c0" stroke-width="1"/>
<line x1="38.5" y1="799.8" x2="41" y2="799.8" stroke="#6060c0" stroke-width="1"/>
<line x1="36" y1="796.4" x2="41" y2="796.4" stroke="#7070d0" stroke-width="1.5"/>
<text x="33.5" y="799.4" fill="#8080e0" font-size="8.5" text-anchor="end" clip-path="url(#cHum)">5</text>
<line x1="38.5" y1="792.9" x2="41" y2="792.9" stroke="#6060c0" stroke-width="1"/>
<line x1="38.5" y1="789.4" x2="41" y2="789.4" stroke="#6060c0" stroke-width="1"/>
<line x1="38.5" y1="785.9" x2="41" y2="785.9" stroke="#6060c0" stroke-width="1"/>
<line x1="38.5" y1="782.5" x2="41" y2="782.5" stroke="#6060c0" stroke-width="1"/>
<line x1="36" y1="779" x2="41" y2="779" stroke="#7070d0" stroke-width="1.5"/>
<text x="33.5" y="782" fill="#8080e0" font-size="8.5" text-anchor="end" clip-path="url(#cHum)">0</text>
<line x1="38.5" y1="775.5" x2="41" y2="775.5" stroke="#6060c0" stroke-width="1"/>
<line x1="38.5" y1="772.1" x2="41" y2="772.1" stroke="#6060c0" stroke-width="1"/>
<line x1="38.5" y1="768.6" x2="41" y2="768.6" stroke="#6060c0" stroke-width="1"/>
<line x1="38.5" y1="765.1" x2="41" y2="765.1" stroke="#6060c0" stroke-width="1"/>
<line x1="36" y1="761.6" x2="41" y2="761.6" stroke="#7070d0" stroke-width="1.5"/>
<text x="33.5" y="764.6" fill="#8080e0" font-size="8.5" text-anchor="end" clip-path="url(#cHum)">5</text>
<line x1="38.5" y1="758.2" x2="41" y2="758.2" stroke="#6060c0" stroke-width="1"/>
<line x1="38.5" y1="754.7" x2="41" y2="754.7" stroke="#6060c0" stroke-width="1"/>
<line x1="38.5" y1="751.2" x2="41" y2="751.2" stroke="#6060c0" stroke-width="1"/>
<line x1="38.5" y1="747.8" x2="41" y2="747.8" stroke="#6060c0" stroke-width="1"/>
<line x1="36" y1="744.3" x2="41" y2="744.3" stroke="#7070d0" stroke-width="1.5"/>
<text x="33.5" y="747.3" fill="#8080e0" font-size="8.5" text-anchor="end" clip-path="url(#cHum)">0</text>
<line x1="38.5" y1="740.8" x2="41" y2="740.8" stroke="#6060c0" stroke-width="1"/>
<line x1="38.5" y1="737.4" x2="41" y2="737.4" stroke="#6060c0" stroke-width="1"/>
<line x1="38.5" y1="733.9" x2="41" y2="733.9" stroke="#6060c0" stroke-width="1"/>
<line x1="38.5" y1="730.4" x2="41" y2="730.4" stroke="#6060c0" stroke-width="1"/>
<line x1="36" y1="727" x2="41" y2="727" stroke="#7070d0" stroke-width="1.5"/>
<text x="33.5" y="730" fill="#8080e0" font-size="8.5" text-anchor="end" clip-path="url(#cHum)">5</text>
<line x1="38.5" y1="723.5" x2="41" y2="723.5" stroke="#6060c0" stroke-width="1"/>
<line x1="38.5" y1="720" x2="41" y2="720" stroke="#6060c0" stroke-width="1"/>
<line x1="38.5" y1="716.5" x2="41" y2="716.5" stroke="#6060c0" stroke-width="1"/>
<line x1="38.5" y1="713.1" x2="41" y2="713.1" stroke="#6060c0" stroke-width="1"/>
<line x1="36" y1="709.6" x2="41" y2="709.6" stroke="#7070d0" stroke-width="1.5"/>
<text x="33.5" y="712.6" fill="#8080e0" font-size="8.5" text-anchor="end" clip-path="url(#cHum)">0</text>
<line x1="38.5" y1="706.1" x2="41" y2="706.1" stroke="#6060c0" stroke-width="1"/>
<line x1="38.5" y1="702.7" x2="41" y2="702.7" stroke="#6060c0" stroke-width="1"/>
<line x1="38.5" y1="699.2" x2="41" y2="699.2" stroke="#6060c0" stroke-width="1"/>
<line x1="38.5" y1="695.7" x2="41" y2="695.7" stroke="#6060c0" stroke-width="1"/>
<line x1="36" y1="692.2" x2="41" y2="692.2" stroke="#7070d0" stroke-width="1.5"/>
<text x="33.5" y="695.2" fill="#8080e0" font-size="8.5" text-anchor="end" clip-path="url(#cHum)">5</text>
<line x1="38.5" y1="688.8" x2="41" y2="688.8" stroke="#6060c0" stroke-width="1"/>
<line x1="38.5" y1="685.3" x2="41" y2="685.3" stroke="#6060c0" stroke-width="1"/>
<line x1="38.5" y1="681.8" x2="41" y2="681.8" stroke="#6060c0" stroke-width="1"/>
<line x1="38.5" y1="678.4" x2="41" y2="678.4" stroke="#6060c0" stroke-width="1"/>
<line x1="36" y1="674.9" x2="41" y2="674.9" stroke="#7070d0" stroke-width="1.5"/>
<text x="33.5" y="677.9" fill="#8080e0" font-size="8.5" text-anchor="end" clip-path="url(#cHum)">0</text>
<line x1="38.5" y1="671.4" x2="41" y2="671.4" stroke="#6060c0" stroke-width="1"/>
<line x1="38.5" y1="668" x2="41" y2="668" stroke="#6060c0" stroke-width="1"/>
<line x1="38.5" y1="664.5" x2="41" y2="664.5" stroke="#6060c0" stroke-width="1"/>
<line x1="38.5" y1="661" x2="41" y2="661" stroke="#6060c0" stroke-width="1"/>
<line x1="36" y1="657.5" x2="41" y2="657.5" stroke="#7070d0" stroke-width="1.5"/>
<text x="33.5" y="660.5" fill="#8080e0" font-size="8.5" text-anchor="end" clip-path="url(#cHum)">5</text>
<line x1="38.5" y1="654.1" x2="41" y2="654.1" stroke="#6060c0" stroke-width="1"/>
<line x1="38.5" y1="650.6" x2="41" y2="650.6" stroke="#6060c0" stroke-width="1"/>
<line x1="38.5" y1="647.1" x2="41" y2="647.1" stroke="#6060c0" stroke-width="1"/>
<line x1="38.5" y1="643.7" x2="41" y2="643.7" stroke="#6060c0" stroke-width="1"/>
<line x1="36" y1="640.2" x2="41" y2="640.2" stroke="#7070d0" stroke-width="1.5"/>
<text x="33.5" y="643.2" fill="#8080e0" font-size="8.5" text-anchor="end" clip-path="url(#cHum)">0</text>
<line x1="38.5" y1="636.7" x2="41" y2="636.7" stroke="#6060c0" stroke-width="1"/>
<line x1="38.5" y1="633.3" x2="41" y2="633.3" stroke="#6060c0" stroke-width="1"/>
<line x1="38.5" y1="629.8" x2="41" y2="629.8" stroke="#6060c0" stroke-width="1"/>
<line x1="38.5" y1="626.3" x2="41" y2="626.3" stroke="#6060c0" stroke-width="1"/>
<line x1="36" y1="622.8" x2="41" y2="622.8" stroke="#7070d0" stroke-width="1.5"/>
<text x="33.5" y="625.8" fill="#8080e0" font-size="8.5" text-anchor="end" clip-path="url(#cHum)">5</text>
<line x1="38.5" y1="619.4" x2="41" y2="619.4" stroke="#6060c0" stroke-width="1"/>
<line x1="38.5" y1="615.9" x2="41" y2="615.9" stroke="#6060c0" stroke-width="1"/>
<line x1="38.5" y1="612.4" x2="41" y2="612.4" stroke="#6060c0" stroke-width="1"/>
<line x1="38.5" y1="609" x2="41" y2="609" stroke="#6060c0" stroke-width="1"/>
<line x1="36" y1="605.5" x2="41" y2="605.5" stroke="#7070d0" stroke-width="1.5"/>
<text x="33.5" y="608.5" fill="#8080e0" font-size="8.5" text-anchor="end" clip-path="url(#cHum)">0</text></svg></body></html>
